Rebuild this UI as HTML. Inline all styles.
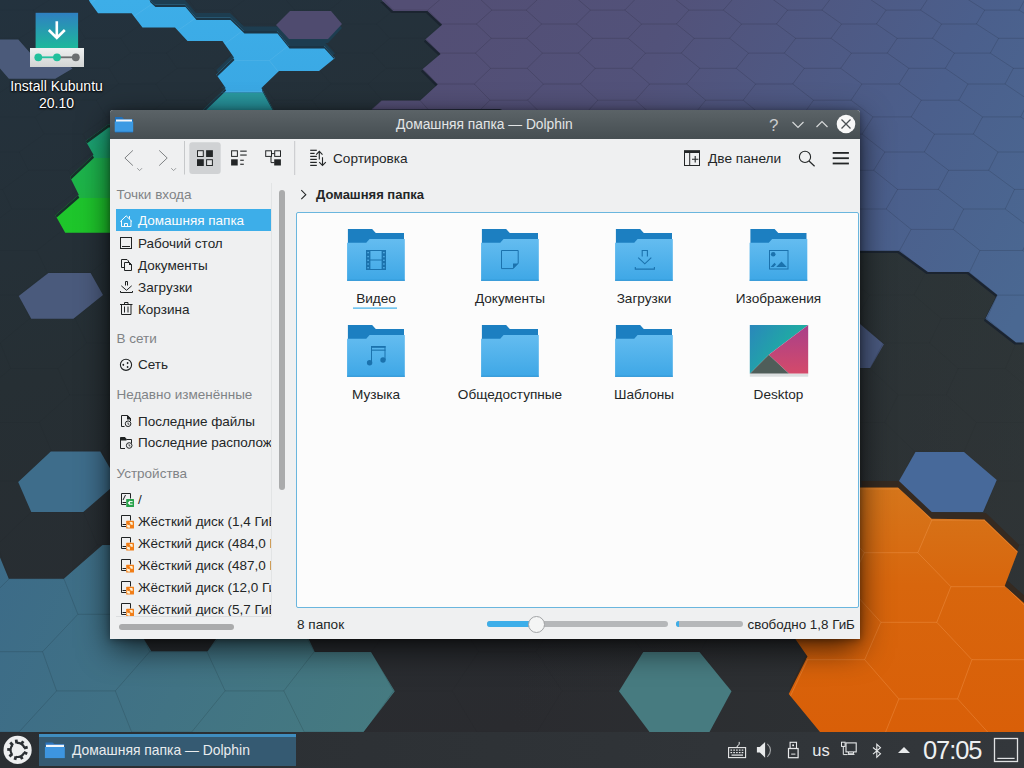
<!DOCTYPE html>
<html><head><meta charset="utf-8">
<style>
html,body{margin:0;padding:0;width:1024px;height:768px;overflow:hidden;font-family:"Liberation Sans",sans-serif;background:#263039;}
.abs{position:absolute}
#bg{position:absolute;left:0;top:0}
.t{position:absolute;white-space:nowrap;line-height:1}
</style></head><body>
<svg id="bg" width="1024" height="768" viewBox="0 0 1024 768">
<defs>
<linearGradient id="gBase" x1="0" y1="0" x2="0.35" y2="1">
<stop offset="0" stop-color="#23323e"/><stop offset="0.45" stop-color="#262f34"/><stop offset="1" stop-color="#2a2b2f"/>
</linearGradient>
<linearGradient id="gPurple" gradientUnits="userSpaceOnUse" x1="420" y1="0" x2="1024" y2="300">
<stop offset="0" stop-color="#534e74"/><stop offset="0.35" stop-color="#52527a"/><stop offset="0.75" stop-color="#4b5f8c"/><stop offset="1" stop-color="#4a6892"/>
</linearGradient>
<linearGradient id="gGreen" gradientUnits="userSpaceOnUse" x1="0" y1="124" x2="0" y2="233">
<stop offset="0" stop-color="#1d9e7c"/><stop offset="0.31" stop-color="#1aa66a"/><stop offset="0.31" stop-color="#1db350"/><stop offset="0.675" stop-color="#1db545"/><stop offset="0.675" stop-color="#1ec52d"/><stop offset="1" stop-color="#1ec62a"/>
</linearGradient>
<linearGradient id="gBlue" gradientUnits="userSpaceOnUse" x1="0" y1="0" x2="0" y2="93">
<stop offset="0" stop-color="#3daee8"/><stop offset="1" stop-color="#3aa8e4"/>
</linearGradient>
<linearGradient id="gTealTop" gradientUnits="userSpaceOnUse" x1="0" y1="92" x2="0" y2="111">
<stop offset="0" stop-color="#2a9aa0"/><stop offset="1" stop-color="#23868f"/>
</linearGradient>
<linearGradient id="gTeal" gradientUnits="userSpaceOnUse" x1="0" y1="545" x2="400" y2="732">
<stop offset="0" stop-color="#3c6b88"/><stop offset="1" stop-color="#467b80"/>
</linearGradient>
<linearGradient id="gOrange" gradientUnits="userSpaceOnUse" x1="0" y1="487" x2="0" y2="732">
<stop offset="0" stop-color="#d6761b"/><stop offset="0.4" stop-color="#d8660d"/><stop offset="1" stop-color="#d95f08"/>
</linearGradient>

<clipPath id="c_blue"><polygon points="90,-10 146,-10 150,0 155,4.5 185,4.5 196,17.5 230,17.5 244,31 277,31 289,46 324,46 335,58 319,71 279,71 261.4,88 264,92.7 220.9,92.7 225.7,88 216.3,74.5 234,57.5 222.5,41 187.5,41 175,27.5 142.5,27.5 131.6,13.3 98,13.3 90,2.3 84,-10"/></clipPath>
<clipPath id="c_tealtop"><polygon points="220.9,92.7 264,92.7 274,111 202,111"/></clipPath>
<clipPath id="c_purplehex"><polygon points="276,25 290,11 331,11 342,24 328,39 289,39"/></clipPath>
<clipPath id="c_purple"><polygon points="381.6,0 1024,0 1024,342.5 1016,342.5 985.4,318.8 997.3,295 968.5,272 927.9,272 899,251 860,251 700,200 500,109 371.4,109.4 381.6,100.6 420.2,100.6 437.7,84.6 422.4,69.3 440.6,54 425.3,39.4 442.1,24.8 427.5,10.9 393.2,10.9"/></clipPath>
<clipPath id="c_slatetop"><polygon points="0,39.4 18.3,39.4 32,55 58,58 72.6,68.4 55.3,78.75 8.9,78.75 0,68.4"/></clipPath>
<clipPath id="c_green"><polygon points="108.1,124.4 85.7,141 93.5,154.7 70,177.1 78.8,194.7 55.4,215.2 65.2,232.8 120,232.8 120,124"/></clipPath>
<clipPath id="c_slateleft"><polygon points="18.75,296 48.4,273 90.6,273 103,295 73.4,318.75 31.25,318.75"/></clipPath>
<clipPath id="c_tealleft"><polygon points="18.2,482 50.8,451.6 100.3,451.6 118,482 83.3,512 31.25,512"/></clipPath>
<clipPath id="c_tealcluster"><polygon points="0,557.5 8.75,578.75 63.75,578.75 102.5,545 300,545 300,638.75 143.75,638.75 151.25,651.25 207.5,651.25 216.25,638.75 308.5,638.75 314.75,652 371,652 394.75,691.25 363.5,732 0,732"/></clipPath>
<clipPath id="c_tealbottom"><polygon points="643.25,652 699.5,652 731.5,691.25 709.5,732 649.5,732 619,691.25"/></clipPath>
<clipPath id="c_slateright"><polygon points="860,323.9 883.85,344.2 870.3,367.9 860,367.9"/></clipPath>
<clipPath id="c_orange"><polygon points="860,487.5 898,487.5 931.75,518.75 984.4,519.4 1017.8,551.6 1004.7,586 1024,603 1024,732 820,732 788.75,694 807.5,656.6 795,638.6 860,638.6"/></clipPath>
<clipPath id="c_bluehex"><polygon points="915.5,452 964,452 996.75,480 983,512 931.75,512 899,481"/></clipPath>
</defs>
<rect width="1024" height="768" fill="url(#gBase)"/>
<linearGradient id="gTint" x1="0.5" y1="0" x2="1" y2="0"><stop offset="0" stop-color="#36403f" stop-opacity="0"/><stop offset="1" stop-color="#36403f" stop-opacity="0.4"/></linearGradient>
<rect width="1024" height="768" fill="url(#gTint)"/>
<path d="M13.4,-16.6L-8.4,-3.5M-8.4,-3.5L-0.9,10.1M-0.9,10.1L-23.5,24.0M46.8,-16.6L54.9,-3.5M54.9,-3.5L33.4,10.1M-0.9,10.1L33.4,10.1M33.4,10.1L41.7,24.0M41.7,24.0L19.4,38.3M-16.0,38.3L19.4,38.3M19.4,38.3L27.6,53.1M27.6,53.1L4.4,68.3M-32.0,68.3L4.4,68.3M4.4,68.3L12.7,84.0M12.7,84.0L-11.5,100.2M-11.5,100.2L-3.2,116.9M-3.2,116.9L-28.4,134.1M109.2,-16.6L88.8,-3.5M54.9,-3.5L88.8,-3.5M88.8,-3.5L97.7,10.1M97.7,10.1L76.5,24.0M41.7,24.0L76.5,24.0M76.5,24.0L85.5,38.3M85.5,38.3L63.5,53.1M27.6,53.1L63.5,53.1M63.5,53.1L72.5,68.3M72.5,68.3L49.7,84.0M12.7,84.0L49.7,84.0M49.7,84.0L58.8,100.2M58.8,100.2L35.0,116.9M-3.2,116.9L35.0,116.9M35.0,116.9L44.1,134.1M44.1,134.1L19.3,152.0M-20.1,152.0L19.3,152.0M19.3,152.0L28.5,170.3M28.5,170.3L2.6,189.4M-38.2,189.4L2.6,189.4M2.6,189.4L11.8,209.0M11.8,209.0L-15.3,229.4M142.6,-16.6L152.1,-3.5M152.1,-3.5L132.0,10.1M97.7,10.1L132.0,10.1M132.0,10.1L141.7,24.0M141.7,24.0L120.8,38.3M85.5,38.3L120.8,38.3M120.8,38.3L130.6,53.1M130.6,53.1L108.9,68.3M72.5,68.3L108.9,68.3M108.9,68.3L118.8,84.0M118.8,84.0L96.3,100.2M58.8,100.2L96.3,100.2M96.3,100.2L106.3,116.9M106.3,116.9L82.9,134.1M44.1,134.1L82.9,134.1M82.9,134.1L93.0,152.0M93.0,152.0L68.6,170.3M28.5,170.3L68.6,170.3M68.6,170.3L78.8,189.4M78.8,189.4L53.3,209.0M11.8,209.0L53.3,209.0M53.3,209.0L63.6,229.4M63.6,229.4L36.9,250.5M-6.1,250.5L36.9,250.5M36.9,250.5L47.2,272.4M47.2,272.4L19.2,295.1M-25.3,295.1L19.2,295.1M19.2,295.1L29.7,318.6M29.7,318.6L0.2,343.0M-46.0,343.0L0.2,343.0M0.2,343.0L10.7,368.5M10.7,368.5L-20.3,394.9M205.0,-16.6L185.9,-3.5M152.1,-3.5L185.9,-3.5M185.9,-3.5L196.2,10.1M196.2,10.1L176.5,24.0M141.7,24.0L176.5,24.0M176.5,24.0L186.9,38.3M186.9,38.3L166.5,53.1M130.6,53.1L166.5,53.1M166.5,53.1L177.1,68.3M177.1,68.3L155.8,84.0M118.8,84.0L155.8,84.0M155.8,84.0L166.6,100.2M166.6,100.2L144.5,116.9M106.3,116.9L144.5,116.9M144.5,116.9L155.4,134.1M155.4,134.1L132.4,152.0M93.0,152.0L132.4,152.0M132.4,152.0L143.5,170.3M143.5,170.3L119.5,189.4M78.8,189.4L119.5,189.4M119.5,189.4L130.8,209.0M130.8,209.0L105.7,229.4M63.6,229.4L105.7,229.4M105.7,229.4L117.2,250.5M117.2,250.5L91.0,272.4M47.2,272.4L91.0,272.4M91.0,272.4L102.5,295.1M102.5,295.1L75.0,318.6M29.7,318.6L75.0,318.6M75.0,318.6L86.8,343.0M86.8,343.0L57.9,368.5M10.7,368.5L57.9,368.5M57.9,368.5L69.7,394.9M69.7,394.9L39.3,422.4M-9.8,422.4L39.3,422.4M39.3,422.4L51.3,451.0M51.3,451.0L19.1,480.9M-32.0,480.9L19.1,480.9M19.1,480.9L31.2,512.1M31.2,512.1L-2.8,544.7M-56.2,544.7L-2.8,544.7M-2.8,544.7L9.3,578.7M9.3,578.7L-26.8,614.3M238.4,-16.6L249.3,-3.5M249.3,-3.5L230.6,10.1M196.2,10.1L230.6,10.1M230.6,10.1L241.6,24.0M241.6,24.0L222.3,38.3M186.9,38.3L222.3,38.3M222.3,38.3L233.6,53.1M233.6,53.1L213.5,68.3M177.1,68.3L213.5,68.3M213.5,68.3L225.0,84.0M225.0,84.0L204.1,100.2M166.6,100.2L204.1,100.2M204.1,100.2L215.9,116.9M215.9,116.9L194.2,134.1M155.4,134.1L194.2,134.1M194.2,134.1L206.2,152.0M206.2,152.0L183.6,170.3M143.5,170.3L183.6,170.3M183.6,170.3L195.8,189.4M195.8,189.4L172.3,209.0M130.8,209.0L172.3,209.0M172.3,209.0L184.7,229.4M184.7,229.4L160.1,250.5M117.2,250.5L160.1,250.5M160.1,250.5L172.7,272.4M172.7,272.4L147.1,295.1M102.5,295.1L147.1,295.1M147.1,295.1L159.9,318.6M159.9,318.6L133.0,343.0M86.8,343.0L133.0,343.0M133.0,343.0L146.1,368.5M146.1,368.5L117.8,394.9M69.7,394.9L117.8,394.9M117.8,394.9L131.1,422.4M131.1,422.4L101.3,451.0M51.3,451.0L101.3,451.0M101.3,451.0L114.9,480.9M114.9,480.9L83.5,512.1M31.2,512.1L83.5,512.1M83.5,512.1L97.2,544.7M97.2,544.7L63.9,578.7M9.3,578.7L63.9,578.7M63.9,578.7L77.9,614.3M77.9,614.3L42.6,651.7M-14.7,651.7L42.6,651.7M42.6,651.7L56.6,690.9M56.6,690.9L19.0,732.0M-41.1,732.0L19.0,732.0M19.0,732.0L33.2,775.2M300.8,-16.6L283.1,-3.5M249.3,-3.5L283.1,-3.5M283.1,-3.5L294.8,10.1M294.8,10.1L276.5,24.0M241.6,24.0L276.5,24.0M276.5,24.0L288.4,38.3M288.4,38.3L269.4,53.1M233.6,53.1L269.4,53.1M269.4,53.1L281.6,68.3M281.6,68.3L262.0,84.0M225.0,84.0L262.0,84.0M262.0,84.0L274.4,100.2M274.4,100.2L254.0,116.9M215.9,116.9L254.0,116.9M254.0,116.9L266.7,134.1M266.7,134.1L245.5,152.0M206.2,152.0L245.5,152.0M245.5,152.0L258.6,170.3M258.6,170.3L236.5,189.4M195.8,189.4L236.5,189.4M236.5,189.4L249.8,209.0M249.8,209.0L226.8,229.4M184.7,229.4L226.8,229.4M226.8,229.4L240.4,250.5M240.4,250.5L216.4,272.4M172.7,272.4L216.4,272.4M216.4,272.4L230.4,295.1M230.4,295.1L205.3,318.6M159.9,318.6L205.3,318.6M205.3,318.6L219.5,343.0M219.5,343.0L193.2,368.5M146.1,368.5L193.2,368.5M193.2,368.5L207.8,394.9M207.8,394.9L180.2,422.4M131.1,422.4L180.2,422.4M180.2,422.4L195.1,451.0M195.1,451.0L166.0,480.9M114.9,480.9L166.0,480.9M166.0,480.9L181.3,512.1M181.3,512.1L150.6,544.7M97.2,544.7L150.6,544.7M150.6,544.7L166.2,578.7M166.2,578.7L133.8,614.3M77.9,614.3L133.8,614.3M133.8,614.3L149.7,651.7M149.7,651.7L115.3,690.9M56.6,690.9L115.3,690.9M115.3,690.9L131.6,732.0M131.6,732.0L94.9,775.2M334.2,-16.6L346.4,-3.5M346.4,-3.5L329.1,10.1M294.8,10.1L329.1,10.1M329.1,10.1L341.6,24.0M341.6,24.0L323.7,38.3M288.4,38.3L323.7,38.3M323.7,38.3L336.5,53.1M336.5,53.1L318.0,68.3M281.6,68.3L318.0,68.3M318.0,68.3L331.1,84.0M331.1,84.0L312.0,100.2M274.4,100.2L312.0,100.2M312.0,100.2L325.4,116.9M325.4,116.9L305.5,134.1M266.7,134.1L305.5,134.1M305.5,134.1L319.3,152.0M319.3,152.0L298.6,170.3M258.6,170.3L298.6,170.3M298.6,170.3L312.7,189.4M312.7,189.4L291.2,209.0M249.8,209.0L291.2,209.0M291.2,209.0L305.7,229.4M305.7,229.4L283.3,250.5M240.4,250.5L283.3,250.5M283.3,250.5L298.2,272.4M298.2,272.4L274.9,295.1M230.4,295.1L274.9,295.1M274.9,295.1L290.1,318.6M290.1,318.6L265.7,343.0M219.5,343.0L265.7,343.0M265.7,343.0L281.4,368.5M281.4,368.5L255.9,394.9M207.8,394.9L255.9,394.9M255.9,394.9L272.0,422.4M272.0,422.4L245.2,451.0M195.1,451.0L245.2,451.0M245.2,451.0L261.8,480.9M261.8,480.9L233.6,512.1M181.3,512.1L233.6,512.1M233.6,512.1L250.6,544.7M250.6,544.7L220.9,578.7M166.2,578.7L220.9,578.7M220.9,578.7L238.5,614.3M238.5,614.3L207.0,651.7M149.7,651.7L207.0,651.7M207.0,651.7L225.1,690.9M225.1,690.9L191.7,732.0M131.6,732.0L191.7,732.0M191.7,732.0L210.3,775.2M396.6,-16.6L380.3,-3.5M346.4,-3.5L380.3,-3.5M380.3,-3.5L393.3,10.1M393.3,10.1L376.5,24.0M341.6,24.0L376.5,24.0M376.5,24.0L389.9,38.3M389.9,38.3L372.4,53.1M336.5,53.1L372.4,53.1M372.4,53.1L386.2,68.3M386.2,68.3L368.1,84.0M331.1,84.0L368.1,84.0M368.1,84.0L382.2,100.2M382.2,100.2L363.5,116.9M325.4,116.9L363.5,116.9M363.5,116.9L378.0,134.1M378.0,134.1L358.7,152.0M319.3,152.0L358.7,152.0M358.7,152.0L373.6,170.3M373.6,170.3L353.5,189.4M312.7,189.4L353.5,189.4M353.5,189.4L368.8,209.0M368.8,209.0L347.9,229.4M305.7,229.4L347.9,229.4M347.9,229.4L363.7,250.5M363.7,250.5L341.9,272.4M298.2,272.4L341.9,272.4M341.9,272.4L358.2,295.1M358.2,295.1L335.5,318.6M290.1,318.6L335.5,318.6M335.5,318.6L352.2,343.0M352.2,343.0L328.6,368.5M281.4,368.5L328.6,368.5M328.6,368.5L345.9,394.9M345.9,394.9L321.1,422.4M272.0,422.4L321.1,422.4M321.1,422.4L338.9,451.0M338.9,451.0L312.9,480.9M261.8,480.9L312.9,480.9M312.9,480.9L331.4,512.1M331.4,512.1L304.1,544.7M250.6,544.7L304.1,544.7M304.1,544.7L323.2,578.7M323.2,578.7L294.4,614.3M238.5,614.3L294.4,614.3M294.4,614.3L314.2,651.7M314.2,651.7L283.8,690.9M225.1,690.9L283.8,690.9M283.8,690.9L304.2,732.0M304.2,732.0L272.0,775.2M430.0,-16.6L443.6,-3.5M443.6,-3.5L427.7,10.1M393.3,10.1L427.7,10.1M427.7,10.1L441.6,24.0M441.6,24.0L425.2,38.3M389.9,38.3L425.2,38.3M425.2,38.3L439.5,53.1M439.5,53.1L422.6,68.3M386.2,68.3L422.6,68.3M422.6,68.3L437.3,84.0M437.3,84.0L419.8,100.2M382.2,100.2L419.8,100.2M419.8,100.2L434.9,116.9M434.9,116.9L416.8,134.1M378.0,134.1L416.8,134.1M416.8,134.1L432.4,152.0M432.4,152.0L413.6,170.3M373.6,170.3L413.6,170.3M413.6,170.3L429.7,189.4M429.7,189.4L410.2,209.0M368.8,209.0L410.2,209.0M410.2,209.0L426.8,229.4M426.8,229.4L406.6,250.5M363.7,250.5L406.6,250.5M406.6,250.5L423.7,272.4M423.7,272.4L402.7,295.1M358.2,295.1L402.7,295.1M402.7,295.1L420.4,318.6M420.4,318.6L398.5,343.0M352.2,343.0L398.5,343.0M398.5,343.0L416.8,368.5M416.8,368.5L393.9,394.9M345.9,394.9L393.9,394.9M393.9,394.9L412.9,422.4M412.9,422.4L389.0,451.0M338.9,451.0L389.0,451.0M389.0,451.0L408.7,480.9M408.7,480.9L383.7,512.1M331.4,512.1L383.7,512.1M383.7,512.1L404.1,544.7M404.1,544.7L377.8,578.7M323.2,578.7L377.8,578.7M377.8,578.7L399.1,614.3M399.1,614.3L371.4,651.7M314.2,651.7L371.4,651.7M371.4,651.7L393.5,690.9M393.5,690.9L364.4,732.0M304.2,732.0L364.4,732.0M364.4,732.0L387.5,775.2M492.5,-16.6L477.4,-3.5M443.6,-3.5L477.4,-3.5M477.4,-3.5L491.9,10.1M491.9,10.1L476.4,24.0M441.6,24.0L476.4,24.0M476.4,24.0L491.3,38.3M491.3,38.3L475.4,53.1M439.5,53.1L475.4,53.1M475.4,53.1L490.7,68.3M490.7,68.3L474.3,84.0M437.3,84.0L474.3,84.0M474.3,84.0L490.0,100.2M490.0,100.2L473.1,116.9M434.9,116.9L473.1,116.9M473.1,116.9L489.3,134.1M489.3,134.1L471.8,152.0M432.4,152.0L471.8,152.0M471.8,152.0L488.6,170.3M488.6,170.3L470.4,189.4M429.7,189.4L470.4,189.4M470.4,189.4L487.8,209.0M487.8,209.0L469.0,229.4M426.8,229.4L469.0,229.4M469.0,229.4L486.9,250.5M486.9,250.5L467.4,272.4M423.7,272.4L467.4,272.4M467.4,272.4L486.0,295.1M486.0,295.1L465.7,318.6M420.4,318.6L465.7,318.6M465.7,318.6L485.0,343.0M485.0,343.0L463.9,368.5M416.8,368.5L463.9,368.5M463.9,368.5L483.9,394.9M483.9,394.9L462.0,422.4M412.9,422.4L462.0,422.4M462.0,422.4L482.8,451.0M482.8,451.0L459.8,480.9M408.7,480.9L459.8,480.9M459.8,480.9L481.5,512.1M481.5,512.1L457.5,544.7M404.1,544.7L457.5,544.7M457.5,544.7L480.1,578.7M480.1,578.7L455.0,614.3M399.1,614.3L455.0,614.3M455.0,614.3L478.6,651.7M478.6,651.7L452.2,690.9M393.5,690.9L452.2,690.9M452.2,690.9L476.9,732.0M476.9,732.0L449.1,775.2M525.8,-16.6L540.8,-3.5M540.8,-3.5L526.2,10.1M491.9,10.1L526.2,10.1M526.2,10.1L541.6,24.0M541.6,24.0L526.7,38.3M491.3,38.3L526.7,38.3M526.7,38.3L542.5,53.1M542.5,53.1L527.1,68.3M490.7,68.3L527.1,68.3M527.1,68.3L543.4,84.0M543.4,84.0L527.6,100.2M490.0,100.2L527.6,100.2M527.6,100.2L544.5,116.9M544.5,116.9L528.1,134.1M489.3,134.1L528.1,134.1M528.1,134.1L545.5,152.0M545.5,152.0L528.6,170.3M488.6,170.3L528.6,170.3M528.6,170.3L546.7,189.4M546.7,189.4L529.2,209.0M487.8,209.0L529.2,209.0M529.2,209.0L547.9,229.4M547.9,229.4L529.8,250.5M486.9,250.5L529.8,250.5M529.8,250.5L549.2,272.4M549.2,272.4L530.5,295.1M486.0,295.1L530.5,295.1M530.5,295.1L550.6,318.6M550.6,318.6L531.2,343.0M485.0,343.0L531.2,343.0M531.2,343.0L552.1,368.5M552.1,368.5L532.0,394.9M483.9,394.9L532.0,394.9M532.0,394.9L553.8,422.4M553.8,422.4L532.8,451.0M482.8,451.0L532.8,451.0M532.8,451.0L555.6,480.9M555.6,480.9L533.8,512.1M481.5,512.1L533.8,512.1M533.8,512.1L557.5,544.7M557.5,544.7L534.8,578.7M480.1,578.7L534.8,578.7M534.8,578.7L559.7,614.3M559.7,614.3L535.9,651.7M478.6,651.7L535.9,651.7M535.9,651.7L562.0,690.9M562.0,690.9L537.1,732.0M476.9,732.0L537.1,732.0M537.1,732.0L564.6,775.2M588.3,-16.6L574.6,-3.5M540.8,-3.5L574.6,-3.5M574.6,-3.5L590.5,10.1M590.5,10.1L576.4,24.0M541.6,24.0L576.4,24.0M576.4,24.0L592.8,38.3M592.8,38.3L578.4,53.1M542.5,53.1L578.4,53.1M578.4,53.1L595.2,68.3M595.2,68.3L580.4,84.0M543.4,84.0L580.4,84.0M580.4,84.0L597.8,100.2M597.8,100.2L582.6,116.9M544.5,116.9L582.6,116.9M582.6,116.9L600.6,134.1M600.6,134.1L584.9,152.0M545.5,152.0L584.9,152.0M584.9,152.0L603.6,170.3M603.6,170.3L587.4,189.4M546.7,189.4L587.4,189.4M587.4,189.4L606.8,209.0M606.8,209.0L590.1,229.4M547.9,229.4L590.1,229.4M590.1,229.4L610.2,250.5M610.2,250.5L592.9,272.4M549.2,272.4L592.9,272.4M592.9,272.4L613.8,295.1M613.8,295.1L596.0,318.6M550.6,318.6L596.0,318.6M596.0,318.6L617.7,343.0M617.7,343.0L599.3,368.5M552.1,368.5L599.3,368.5M599.3,368.5L622.0,394.9M622.0,394.9L602.9,422.4M553.8,422.4L602.9,422.4M602.9,422.4L626.6,451.0M626.6,451.0L606.7,480.9M555.6,480.9L606.7,480.9M606.7,480.9L631.6,512.1M631.6,512.1L611.0,544.7M557.5,544.7L611.0,544.7M611.0,544.7L637.0,578.7M637.0,578.7L615.6,614.3M559.7,614.3L615.6,614.3M615.6,614.3L643.0,651.7M643.0,651.7L620.7,690.9M562.0,690.9L620.7,690.9M620.7,690.9L649.6,732.0M649.6,732.0L626.3,775.2M621.6,-16.6L637.9,-3.5M637.9,-3.5L624.8,10.1M590.5,10.1L624.8,10.1M624.8,10.1L641.6,24.0M641.6,24.0L628.1,38.3M592.8,38.3L628.1,38.3M628.1,38.3L645.5,53.1M645.5,53.1L631.6,68.3M595.2,68.3L631.6,68.3M631.6,68.3L649.6,84.0M649.6,84.0L635.4,100.2M597.8,100.2L635.4,100.2M635.4,100.2L654.0,116.9M654.0,116.9L639.4,134.1M600.6,134.1L639.4,134.1M639.4,134.1L658.6,152.0M658.6,152.0L643.6,170.3M603.6,170.3L643.6,170.3M643.6,170.3L663.6,189.4M663.6,189.4L648.2,209.0M606.8,209.0L648.2,209.0M648.2,209.0L669.0,229.4M669.0,229.4L653.1,250.5M610.2,250.5L653.1,250.5M653.1,250.5L674.7,272.4M674.7,272.4L658.3,295.1M613.8,295.1L658.3,295.1M658.3,295.1L680.9,318.6M680.9,318.6L664.0,343.0M617.7,343.0L664.0,343.0M664.0,343.0L687.5,368.5M687.5,368.5L670.1,394.9M622.0,394.9L670.1,394.9M670.1,394.9L694.7,422.4M694.7,422.4L676.7,451.0M626.6,451.0L676.7,451.0M676.7,451.0L702.5,480.9M702.5,480.9L683.9,512.1M631.6,512.1L683.9,512.1M683.9,512.1L711.0,544.7M711.0,544.7L691.7,578.7M637.0,578.7L691.7,578.7M691.7,578.7L720.3,614.3M720.3,614.3L700.3,651.7M643.0,651.7L700.3,651.7M700.3,651.7L730.5,690.9M730.5,690.9L709.7,732.0M649.6,732.0L709.7,732.0M709.7,732.0L741.7,775.2M684.1,-16.6L671.8,-3.5M637.9,-3.5L671.8,-3.5M671.8,-3.5L689.0,10.1M689.0,10.1L676.4,24.0M641.6,24.0L676.4,24.0M676.4,24.0L694.2,38.3M694.2,38.3L681.3,53.1M645.5,53.1L681.3,53.1M681.3,53.1L699.8,68.3M699.8,68.3L686.6,84.0M649.6,84.0L686.6,84.0M686.6,84.0L705.7,100.2M705.7,100.2L692.1,116.9M654.0,116.9L692.1,116.9M692.1,116.9L711.9,134.1M711.9,134.1L698.0,152.0M658.6,152.0L698.0,152.0M698.0,152.0L718.6,170.3M718.6,170.3L704.4,189.4M663.6,189.4L704.4,189.4M704.4,189.4L725.7,209.0M725.7,209.0L711.1,229.4M669.0,229.4L711.1,229.4M711.1,229.4L733.4,250.5M733.4,250.5L718.4,272.4M674.7,272.4L718.4,272.4M718.4,272.4L741.6,295.1M741.6,295.1L726.2,318.6M680.9,318.6L726.2,318.6M726.2,318.6L750.5,343.0M750.5,343.0L734.6,368.5M687.5,368.5L734.6,368.5M734.6,368.5L760.0,394.9M760.0,394.9L743.7,422.4M694.7,422.4L743.7,422.4M743.7,422.4L770.4,451.0M770.4,451.0L753.6,480.9M702.5,480.9L753.6,480.9M753.6,480.9L781.7,512.1M781.7,512.1L764.4,544.7M711.0,544.7L764.4,544.7M764.4,544.7L794.0,578.7M794.0,578.7L776.2,614.3M720.3,614.3L776.2,614.3M776.2,614.3L807.5,651.7M807.5,651.7L789.1,690.9M730.5,690.9L789.1,690.9M789.1,690.9L822.3,732.0M822.3,732.0L803.4,775.2M717.5,-16.6L735.1,-3.5M735.1,-3.5L723.3,10.1M689.0,10.1L723.3,10.1M723.3,10.1L741.6,24.0M741.6,24.0L729.6,38.3M694.2,38.3L729.6,38.3M729.6,38.3L748.5,53.1M748.5,53.1L736.2,68.3M699.8,68.3L736.2,68.3M736.2,68.3L755.7,84.0M755.7,84.0L743.2,100.2M705.7,100.2L743.2,100.2M743.2,100.2L763.5,116.9M763.5,116.9L750.7,134.1M711.9,134.1L750.7,134.1M750.7,134.1L771.8,152.0M771.8,152.0L758.7,170.3M718.6,170.3L758.7,170.3M758.7,170.3L780.6,189.4M780.6,189.4L767.2,209.0M725.7,209.0L767.2,209.0M767.2,209.0L790.0,229.4M790.0,229.4L776.3,250.5M733.4,250.5L776.3,250.5M776.3,250.5L800.2,272.4M800.2,272.4L786.1,295.1M741.6,295.1L786.1,295.1M786.1,295.1L811.1,318.6M811.1,318.6L796.7,343.0M750.5,343.0L796.7,343.0M796.7,343.0L822.8,368.5M822.8,368.5L808.1,394.9M760.0,394.9L808.1,394.9M808.1,394.9L835.6,422.4M835.6,422.4L820.5,451.0M770.4,451.0L820.5,451.0M820.5,451.0L849.4,480.9M849.4,480.9L834.0,512.1M781.7,512.1L834.0,512.1M834.0,512.1L864.4,544.7M864.4,544.7L848.6,578.7M794.0,578.7L848.6,578.7M848.6,578.7L880.9,614.3M880.9,614.3L864.7,651.7M807.5,651.7L864.7,651.7M864.7,651.7L898.9,690.9M898.9,690.9L882.4,732.0M822.3,732.0L882.4,732.0M882.4,732.0L918.8,775.2M779.9,-16.6L768.9,-3.5M735.1,-3.5L768.9,-3.5M768.9,-3.5L787.6,10.1M787.6,10.1L776.4,24.0M741.6,24.0L776.4,24.0M776.4,24.0L795.7,38.3M795.7,38.3L784.3,53.1M748.5,53.1L784.3,53.1M784.3,53.1L804.3,68.3M804.3,68.3L792.7,84.0M755.7,84.0L792.7,84.0M792.7,84.0L813.5,100.2M813.5,100.2L801.6,116.9M763.5,116.9L801.6,116.9M801.6,116.9L823.2,134.1M823.2,134.1L811.2,152.0M771.8,152.0L811.2,152.0M811.2,152.0L833.6,170.3M833.6,170.3L821.3,189.4M780.6,189.4L821.3,189.4M821.3,189.4L844.7,209.0M844.7,209.0L832.2,229.4M790.0,229.4L832.2,229.4M832.2,229.4L856.6,250.5M856.6,250.5L843.9,272.4M800.2,272.4L843.9,272.4M843.9,272.4L869.4,295.1M869.4,295.1L856.4,318.6M811.1,318.6L856.4,318.6M856.4,318.6L883.2,343.0M883.2,343.0L870.0,368.5M822.8,368.5L870.0,368.5M870.0,368.5L898.1,394.9M898.1,394.9L884.6,422.4M835.6,422.4L884.6,422.4M884.6,422.4L914.2,451.0M914.2,451.0L900.5,480.9M849.4,480.9L900.5,480.9M900.5,480.9L931.8,512.1M931.8,512.1L917.9,544.7M864.4,544.7L917.9,544.7M917.9,544.7L950.9,578.7M950.9,578.7L936.8,614.3M880.9,614.3L936.8,614.3M936.8,614.3L971.9,651.7M971.9,651.7L957.6,690.9M898.9,690.9L957.6,690.9M957.6,690.9L994.9,732.0M994.9,732.0L980.5,775.2M813.3,-16.6L832.3,-3.5M832.3,-3.5L821.9,10.1M787.6,10.1L821.9,10.1M821.9,10.1L841.6,24.0M841.6,24.0L831.0,38.3M795.7,38.3L831.0,38.3M831.0,38.3L851.4,53.1M851.4,53.1L840.7,68.3M804.3,68.3L840.7,68.3M840.7,68.3L861.9,84.0M861.9,84.0L851.0,100.2M813.5,100.2L851.0,100.2M851.0,100.2L873.0,116.9M873.0,116.9L862.0,134.1M823.2,134.1L862.0,134.1M862.0,134.1L884.9,152.0M884.9,152.0L873.7,170.3M833.6,170.3L873.7,170.3M873.7,170.3L897.6,189.4M897.6,189.4L886.2,209.0M844.7,209.0L886.2,209.0M886.2,209.0L911.1,229.4M911.1,229.4L899.6,250.5M856.6,250.5L899.6,250.5M899.6,250.5L925.7,272.4M925.7,272.4L914.0,295.1M869.4,295.1L914.0,295.1M914.0,295.1L941.3,318.6M941.3,318.6L929.5,343.0M883.2,343.0L929.5,343.0M929.5,343.0L958.2,368.5M958.2,368.5L946.2,394.9M898.1,394.9L946.2,394.9M946.2,394.9L976.5,422.4M976.5,422.4L964.3,451.0M914.2,451.0L964.3,451.0M964.3,451.0L996.3,480.9M996.3,480.9L984.1,512.1M931.8,512.1L984.1,512.1M984.1,512.1L1017.9,544.7M1017.9,544.7L1005.6,578.7M950.9,578.7L1005.6,578.7M1005.6,578.7L1041.5,614.3M1041.5,614.3L1029.1,651.7M971.9,651.7L1029.1,651.7M1029.1,651.7L1067.4,690.9M994.9,732.0L1055.1,732.0M875.7,-16.6L866.1,-3.5M832.3,-3.5L866.1,-3.5M866.1,-3.5L886.1,10.1M886.1,10.1L876.4,24.0M841.6,24.0L876.4,24.0M876.4,24.0L897.2,38.3M897.2,38.3L887.3,53.1M851.4,53.1L887.3,53.1M887.3,53.1L908.9,68.3M908.9,68.3L898.9,84.0M861.9,84.0L898.9,84.0M898.9,84.0L921.3,100.2M921.3,100.2L911.2,116.9M873.0,116.9L911.2,116.9M911.2,116.9L934.5,134.1M934.5,134.1L924.3,152.0M884.9,152.0L924.3,152.0M924.3,152.0L948.6,170.3M948.6,170.3L938.3,189.4M897.6,189.4L938.3,189.4M938.3,189.4L963.7,209.0M963.7,209.0L953.3,229.4M911.1,229.4L953.3,229.4M953.3,229.4L979.9,250.5M979.9,250.5L969.4,272.4M925.7,272.4L969.4,272.4M969.4,272.4L997.3,295.1M997.3,295.1L986.7,318.6M941.3,318.6L986.7,318.6M986.7,318.6L1016.0,343.0M1016.0,343.0L1005.3,368.5M958.2,368.5L1005.3,368.5M1005.3,368.5L1036.2,394.9M1036.2,394.9L1025.5,422.4M976.5,422.4L1025.5,422.4M1025.5,422.4L1058.1,451.0M996.3,480.9L1047.4,480.9M1017.9,544.7L1071.3,544.7M909.1,-16.6L929.4,-3.5M929.4,-3.5L920.5,10.1M886.1,10.1L920.5,10.1M920.5,10.1L941.6,24.0M941.6,24.0L932.5,38.3M897.2,38.3L932.5,38.3M932.5,38.3L954.4,53.1M954.4,53.1L945.3,68.3M908.9,68.3L945.3,68.3M945.3,68.3L968.0,84.0M968.0,84.0L958.8,100.2M921.3,100.2L958.8,100.2M958.8,100.2L982.6,116.9M982.6,116.9L973.3,134.1M934.5,134.1L973.3,134.1M973.3,134.1L998.0,152.0M998.0,152.0L988.7,170.3M948.6,170.3L988.7,170.3M988.7,170.3L1014.5,189.4M1014.5,189.4L1005.2,209.0M963.7,209.0L1005.2,209.0M1005.2,209.0L1032.2,229.4M1032.2,229.4L1022.8,250.5M979.9,250.5L1022.8,250.5M1022.8,250.5L1051.2,272.4M997.3,295.1L1041.8,295.1M1016.0,343.0L1062.2,343.0M971.5,-16.6L963.3,-3.5M929.4,-3.5L963.3,-3.5M963.3,-3.5L984.7,10.1M984.7,10.1L976.4,24.0M941.6,24.0L976.4,24.0M976.4,24.0L998.6,38.3M998.6,38.3L990.3,53.1M954.4,53.1L990.3,53.1M990.3,53.1L1013.4,68.3M1013.4,68.3L1005.0,84.0M968.0,84.0L1005.0,84.0M1005.0,84.0L1029.1,100.2M1029.1,100.2L1020.7,116.9M982.6,116.9L1020.7,116.9M1020.7,116.9L1045.8,134.1M998.0,152.0L1037.4,152.0M1014.5,189.4L1055.3,189.4M1004.9,-16.6L1026.6,-3.5M1026.6,-3.5L1019.0,10.1M984.7,10.1L1019.0,10.1M1019.0,10.1L1041.5,24.0M998.6,38.3L1034.0,38.3M1013.4,68.3L1049.8,68.3M1029.1,100.2L1066.6,100.2M1026.6,-3.5L1060.4,-3.5" fill="none" stroke="#000" stroke-opacity="0.03" stroke-width="1"/>
<polygon fill="#1d3d50" transform="translate(0,-4.5)" points="90,-10 146,-10 150,0 155,4.5 185,4.5 196,17.5 230,17.5 244,31 277,31 289,46 324,46 335,58 319,71 279,71 261.4,88 264,92.7 220.9,92.7 225.7,88 216.3,74.5 234,57.5 222.5,41 187.5,41 175,27.5 142.5,27.5 131.6,13.3 98,13.3 90,2.3 84,-10"/>
<polygon fill="url(#gBlue)" points="90,-10 146,-10 150,0 155,4.5 185,4.5 196,17.5 230,17.5 244,31 277,31 289,46 324,46 335,58 319,71 279,71 261.4,88 264,92.7 220.9,92.7 225.7,88 216.3,74.5 234,57.5 222.5,41 187.5,41 175,27.5 142.5,27.5 131.6,13.3 98,13.3 90,2.3 84,-10"/>
<path clip-path="url(#c_blue)" d="M13.4,-9.1L-8.4,4.0M-8.4,4.0L-0.9,17.6M-0.9,17.6L-23.5,31.5M46.8,-9.1L54.9,4.0M54.9,4.0L33.4,17.6M-0.9,17.6L33.4,17.6M33.4,17.6L41.7,31.5M41.7,31.5L19.4,45.8M-16.0,45.8L19.4,45.8M19.4,45.8L27.6,60.6M27.6,60.6L4.4,75.8M-32.0,75.8L4.4,75.8M4.4,75.8L12.7,91.5M12.7,91.5L-11.5,107.7M-11.5,107.7L-3.2,124.4M-3.2,124.4L-28.4,141.6M109.2,-9.1L88.8,4.0M54.9,4.0L88.8,4.0M88.8,4.0L97.7,17.6M97.7,17.6L76.5,31.5M41.7,31.5L76.5,31.5M76.5,31.5L85.5,45.8M85.5,45.8L63.5,60.6M27.6,60.6L63.5,60.6M63.5,60.6L72.5,75.8M72.5,75.8L49.7,91.5M12.7,91.5L49.7,91.5M49.7,91.5L58.8,107.7M58.8,107.7L35.0,124.4M-3.2,124.4L35.0,124.4M35.0,124.4L44.1,141.6M44.1,141.6L19.3,159.5M-20.1,159.5L19.3,159.5M19.3,159.5L28.5,177.8M28.5,177.8L2.6,196.9M-38.2,196.9L2.6,196.9M2.6,196.9L11.8,216.5M11.8,216.5L-15.3,236.9M142.6,-9.1L152.1,4.0M152.1,4.0L132.0,17.6M97.7,17.6L132.0,17.6M132.0,17.6L141.7,31.5M141.7,31.5L120.8,45.8M85.5,45.8L120.8,45.8M120.8,45.8L130.6,60.6M130.6,60.6L108.9,75.8M72.5,75.8L108.9,75.8M108.9,75.8L118.8,91.5M118.8,91.5L96.3,107.7M58.8,107.7L96.3,107.7M96.3,107.7L106.3,124.4M106.3,124.4L82.9,141.6M44.1,141.6L82.9,141.6M82.9,141.6L93.0,159.5M93.0,159.5L68.6,177.8M28.5,177.8L68.6,177.8M68.6,177.8L78.8,196.9M78.8,196.9L53.3,216.5M11.8,216.5L53.3,216.5M53.3,216.5L63.6,236.9M63.6,236.9L36.9,258.0M-6.1,258.0L36.9,258.0M36.9,258.0L47.2,279.9M47.2,279.9L19.2,302.6M-25.3,302.6L19.2,302.6M19.2,302.6L29.7,326.1M29.7,326.1L0.2,350.5M-46.0,350.5L0.2,350.5M0.2,350.5L10.7,376.0M10.7,376.0L-20.3,402.4M205.0,-9.1L185.9,4.0M152.1,4.0L185.9,4.0M185.9,4.0L196.2,17.6M196.2,17.6L176.5,31.5M141.7,31.5L176.5,31.5M176.5,31.5L186.9,45.8M186.9,45.8L166.5,60.6M130.6,60.6L166.5,60.6M166.5,60.6L177.1,75.8M177.1,75.8L155.8,91.5M118.8,91.5L155.8,91.5M155.8,91.5L166.6,107.7M166.6,107.7L144.5,124.4M106.3,124.4L144.5,124.4M144.5,124.4L155.4,141.6M155.4,141.6L132.4,159.5M93.0,159.5L132.4,159.5M132.4,159.5L143.5,177.8M143.5,177.8L119.5,196.9M78.8,196.9L119.5,196.9M119.5,196.9L130.8,216.5M130.8,216.5L105.7,236.9M63.6,236.9L105.7,236.9M105.7,236.9L117.2,258.0M117.2,258.0L91.0,279.9M47.2,279.9L91.0,279.9M91.0,279.9L102.5,302.6M102.5,302.6L75.0,326.1M29.7,326.1L75.0,326.1M75.0,326.1L86.8,350.5M86.8,350.5L57.9,376.0M10.7,376.0L57.9,376.0M57.9,376.0L69.7,402.4M69.7,402.4L39.3,429.9M-9.8,429.9L39.3,429.9M39.3,429.9L51.3,458.5M51.3,458.5L19.1,488.4M-32.0,488.4L19.1,488.4M19.1,488.4L31.2,519.6M31.2,519.6L-2.8,552.2M-56.2,552.2L-2.8,552.2M-2.8,552.2L9.3,586.2M9.3,586.2L-26.8,621.8M238.4,-9.1L249.3,4.0M249.3,4.0L230.6,17.6M196.2,17.6L230.6,17.6M230.6,17.6L241.6,31.5M241.6,31.5L222.3,45.8M186.9,45.8L222.3,45.8M222.3,45.8L233.6,60.6M233.6,60.6L213.5,75.8M177.1,75.8L213.5,75.8M213.5,75.8L225.0,91.5M225.0,91.5L204.1,107.7M166.6,107.7L204.1,107.7M204.1,107.7L215.9,124.4M215.9,124.4L194.2,141.6M155.4,141.6L194.2,141.6M194.2,141.6L206.2,159.5M206.2,159.5L183.6,177.8M143.5,177.8L183.6,177.8M183.6,177.8L195.8,196.9M195.8,196.9L172.3,216.5M130.8,216.5L172.3,216.5M172.3,216.5L184.7,236.9M184.7,236.9L160.1,258.0M117.2,258.0L160.1,258.0M160.1,258.0L172.7,279.9M172.7,279.9L147.1,302.6M102.5,302.6L147.1,302.6M147.1,302.6L159.9,326.1M159.9,326.1L133.0,350.5M86.8,350.5L133.0,350.5M133.0,350.5L146.1,376.0M146.1,376.0L117.8,402.4M69.7,402.4L117.8,402.4M117.8,402.4L131.1,429.9M131.1,429.9L101.3,458.5M51.3,458.5L101.3,458.5M101.3,458.5L114.9,488.4M114.9,488.4L83.5,519.6M31.2,519.6L83.5,519.6M83.5,519.6L97.2,552.2M97.2,552.2L63.9,586.2M9.3,586.2L63.9,586.2M63.9,586.2L77.9,621.8M77.9,621.8L42.6,659.2M-14.7,659.2L42.6,659.2M42.6,659.2L56.6,698.4M56.6,698.4L19.0,739.5M-41.1,739.5L19.0,739.5M19.0,739.5L33.2,782.7M300.8,-9.1L283.1,4.0M249.3,4.0L283.1,4.0M283.1,4.0L294.8,17.6M294.8,17.6L276.5,31.5M241.6,31.5L276.5,31.5M276.5,31.5L288.4,45.8M288.4,45.8L269.4,60.6M233.6,60.6L269.4,60.6M269.4,60.6L281.6,75.8M281.6,75.8L262.0,91.5M225.0,91.5L262.0,91.5M262.0,91.5L274.4,107.7M274.4,107.7L254.0,124.4M215.9,124.4L254.0,124.4M254.0,124.4L266.7,141.6M266.7,141.6L245.5,159.5M206.2,159.5L245.5,159.5M245.5,159.5L258.6,177.8M258.6,177.8L236.5,196.9M195.8,196.9L236.5,196.9M236.5,196.9L249.8,216.5M249.8,216.5L226.8,236.9M184.7,236.9L226.8,236.9M226.8,236.9L240.4,258.0M240.4,258.0L216.4,279.9M172.7,279.9L216.4,279.9M216.4,279.9L230.4,302.6M230.4,302.6L205.3,326.1M159.9,326.1L205.3,326.1M205.3,326.1L219.5,350.5M219.5,350.5L193.2,376.0M146.1,376.0L193.2,376.0M193.2,376.0L207.8,402.4M207.8,402.4L180.2,429.9M131.1,429.9L180.2,429.9M180.2,429.9L195.1,458.5M195.1,458.5L166.0,488.4M114.9,488.4L166.0,488.4M166.0,488.4L181.3,519.6M181.3,519.6L150.6,552.2M97.2,552.2L150.6,552.2M150.6,552.2L166.2,586.2M166.2,586.2L133.8,621.8M77.9,621.8L133.8,621.8M133.8,621.8L149.7,659.2M149.7,659.2L115.3,698.4M56.6,698.4L115.3,698.4M115.3,698.4L131.6,739.5M131.6,739.5L94.9,782.7M334.2,-9.1L346.4,4.0M346.4,4.0L329.1,17.6M294.8,17.6L329.1,17.6M329.1,17.6L341.6,31.5M341.6,31.5L323.7,45.8M288.4,45.8L323.7,45.8M323.7,45.8L336.5,60.6M336.5,60.6L318.0,75.8M281.6,75.8L318.0,75.8M318.0,75.8L331.1,91.5M331.1,91.5L312.0,107.7M274.4,107.7L312.0,107.7M312.0,107.7L325.4,124.4M325.4,124.4L305.5,141.6M266.7,141.6L305.5,141.6M305.5,141.6L319.3,159.5M319.3,159.5L298.6,177.8M258.6,177.8L298.6,177.8M298.6,177.8L312.7,196.9M312.7,196.9L291.2,216.5M249.8,216.5L291.2,216.5M291.2,216.5L305.7,236.9M305.7,236.9L283.3,258.0M240.4,258.0L283.3,258.0M283.3,258.0L298.2,279.9M298.2,279.9L274.9,302.6M230.4,302.6L274.9,302.6M274.9,302.6L290.1,326.1M290.1,326.1L265.7,350.5M219.5,350.5L265.7,350.5M265.7,350.5L281.4,376.0M281.4,376.0L255.9,402.4M207.8,402.4L255.9,402.4M255.9,402.4L272.0,429.9M272.0,429.9L245.2,458.5M195.1,458.5L245.2,458.5M245.2,458.5L261.8,488.4M261.8,488.4L233.6,519.6M181.3,519.6L233.6,519.6M233.6,519.6L250.6,552.2M250.6,552.2L220.9,586.2M166.2,586.2L220.9,586.2M220.9,586.2L238.5,621.8M238.5,621.8L207.0,659.2M149.7,659.2L207.0,659.2M207.0,659.2L225.1,698.4M225.1,698.4L191.7,739.5M131.6,739.5L191.7,739.5M191.7,739.5L210.3,782.7M396.6,-9.1L380.3,4.0M346.4,4.0L380.3,4.0M380.3,4.0L393.3,17.6M393.3,17.6L376.5,31.5M341.6,31.5L376.5,31.5M376.5,31.5L389.9,45.8M389.9,45.8L372.4,60.6M336.5,60.6L372.4,60.6M372.4,60.6L386.2,75.8M386.2,75.8L368.1,91.5M331.1,91.5L368.1,91.5M368.1,91.5L382.2,107.7M382.2,107.7L363.5,124.4M325.4,124.4L363.5,124.4M363.5,124.4L378.0,141.6M378.0,141.6L358.7,159.5M319.3,159.5L358.7,159.5M358.7,159.5L373.6,177.8M373.6,177.8L353.5,196.9M312.7,196.9L353.5,196.9M353.5,196.9L368.8,216.5M368.8,216.5L347.9,236.9M305.7,236.9L347.9,236.9M347.9,236.9L363.7,258.0M363.7,258.0L341.9,279.9M298.2,279.9L341.9,279.9M341.9,279.9L358.2,302.6M358.2,302.6L335.5,326.1M290.1,326.1L335.5,326.1M335.5,326.1L352.2,350.5M352.2,350.5L328.6,376.0M281.4,376.0L328.6,376.0M328.6,376.0L345.9,402.4M345.9,402.4L321.1,429.9M272.0,429.9L321.1,429.9M321.1,429.9L338.9,458.5M338.9,458.5L312.9,488.4M261.8,488.4L312.9,488.4M312.9,488.4L331.4,519.6M331.4,519.6L304.1,552.2M250.6,552.2L304.1,552.2M304.1,552.2L323.2,586.2M323.2,586.2L294.4,621.8M238.5,621.8L294.4,621.8M294.4,621.8L314.2,659.2M314.2,659.2L283.8,698.4M225.1,698.4L283.8,698.4M283.8,698.4L304.2,739.5M304.2,739.5L272.0,782.7M430.0,-9.1L443.6,4.0M443.6,4.0L427.7,17.6M393.3,17.6L427.7,17.6M427.7,17.6L441.6,31.5M441.6,31.5L425.2,45.8M389.9,45.8L425.2,45.8M425.2,45.8L439.5,60.6M439.5,60.6L422.6,75.8M386.2,75.8L422.6,75.8M422.6,75.8L437.3,91.5M437.3,91.5L419.8,107.7M382.2,107.7L419.8,107.7M419.8,107.7L434.9,124.4M434.9,124.4L416.8,141.6M378.0,141.6L416.8,141.6M416.8,141.6L432.4,159.5M432.4,159.5L413.6,177.8M373.6,177.8L413.6,177.8M413.6,177.8L429.7,196.9M429.7,196.9L410.2,216.5M368.8,216.5L410.2,216.5M410.2,216.5L426.8,236.9M426.8,236.9L406.6,258.0M363.7,258.0L406.6,258.0M406.6,258.0L423.7,279.9M423.7,279.9L402.7,302.6M358.2,302.6L402.7,302.6M402.7,302.6L420.4,326.1M420.4,326.1L398.5,350.5M352.2,350.5L398.5,350.5M398.5,350.5L416.8,376.0M416.8,376.0L393.9,402.4M345.9,402.4L393.9,402.4M393.9,402.4L412.9,429.9M412.9,429.9L389.0,458.5M338.9,458.5L389.0,458.5M389.0,458.5L408.7,488.4M408.7,488.4L383.7,519.6M331.4,519.6L383.7,519.6M383.7,519.6L404.1,552.2M404.1,552.2L377.8,586.2M323.2,586.2L377.8,586.2M377.8,586.2L399.1,621.8M399.1,621.8L371.4,659.2M314.2,659.2L371.4,659.2M371.4,659.2L393.5,698.4M393.5,698.4L364.4,739.5M304.2,739.5L364.4,739.5M364.4,739.5L387.5,782.7M492.5,-9.1L477.4,4.0M443.6,4.0L477.4,4.0M477.4,4.0L491.9,17.6M491.9,17.6L476.4,31.5M441.6,31.5L476.4,31.5M476.4,31.5L491.3,45.8M491.3,45.8L475.4,60.6M439.5,60.6L475.4,60.6M475.4,60.6L490.7,75.8M490.7,75.8L474.3,91.5M437.3,91.5L474.3,91.5M474.3,91.5L490.0,107.7M490.0,107.7L473.1,124.4M434.9,124.4L473.1,124.4M473.1,124.4L489.3,141.6M489.3,141.6L471.8,159.5M432.4,159.5L471.8,159.5M471.8,159.5L488.6,177.8M488.6,177.8L470.4,196.9M429.7,196.9L470.4,196.9M470.4,196.9L487.8,216.5M487.8,216.5L469.0,236.9M426.8,236.9L469.0,236.9M469.0,236.9L486.9,258.0M486.9,258.0L467.4,279.9M423.7,279.9L467.4,279.9M467.4,279.9L486.0,302.6M486.0,302.6L465.7,326.1M420.4,326.1L465.7,326.1M465.7,326.1L485.0,350.5M485.0,350.5L463.9,376.0M416.8,376.0L463.9,376.0M463.9,376.0L483.9,402.4M483.9,402.4L462.0,429.9M412.9,429.9L462.0,429.9M462.0,429.9L482.8,458.5M482.8,458.5L459.8,488.4M408.7,488.4L459.8,488.4M459.8,488.4L481.5,519.6M481.5,519.6L457.5,552.2M404.1,552.2L457.5,552.2M457.5,552.2L480.1,586.2M480.1,586.2L455.0,621.8M399.1,621.8L455.0,621.8M455.0,621.8L478.6,659.2M478.6,659.2L452.2,698.4M393.5,698.4L452.2,698.4M452.2,698.4L476.9,739.5M476.9,739.5L449.1,782.7M525.8,-9.1L540.8,4.0M540.8,4.0L526.2,17.6M491.9,17.6L526.2,17.6M526.2,17.6L541.6,31.5M541.6,31.5L526.7,45.8M491.3,45.8L526.7,45.8M526.7,45.8L542.5,60.6M542.5,60.6L527.1,75.8M490.7,75.8L527.1,75.8M527.1,75.8L543.4,91.5M543.4,91.5L527.6,107.7M490.0,107.7L527.6,107.7M527.6,107.7L544.5,124.4M544.5,124.4L528.1,141.6M489.3,141.6L528.1,141.6M528.1,141.6L545.5,159.5M545.5,159.5L528.6,177.8M488.6,177.8L528.6,177.8M528.6,177.8L546.7,196.9M546.7,196.9L529.2,216.5M487.8,216.5L529.2,216.5M529.2,216.5L547.9,236.9M547.9,236.9L529.8,258.0M486.9,258.0L529.8,258.0M529.8,258.0L549.2,279.9M549.2,279.9L530.5,302.6M486.0,302.6L530.5,302.6M530.5,302.6L550.6,326.1M550.6,326.1L531.2,350.5M485.0,350.5L531.2,350.5M531.2,350.5L552.1,376.0M552.1,376.0L532.0,402.4M483.9,402.4L532.0,402.4M532.0,402.4L553.8,429.9M553.8,429.9L532.8,458.5M482.8,458.5L532.8,458.5M532.8,458.5L555.6,488.4M555.6,488.4L533.8,519.6M481.5,519.6L533.8,519.6M533.8,519.6L557.5,552.2M557.5,552.2L534.8,586.2M480.1,586.2L534.8,586.2M534.8,586.2L559.7,621.8M559.7,621.8L535.9,659.2M478.6,659.2L535.9,659.2M535.9,659.2L562.0,698.4M562.0,698.4L537.1,739.5M476.9,739.5L537.1,739.5M537.1,739.5L564.6,782.7M588.3,-9.1L574.6,4.0M540.8,4.0L574.6,4.0M574.6,4.0L590.5,17.6M590.5,17.6L576.4,31.5M541.6,31.5L576.4,31.5M576.4,31.5L592.8,45.8M592.8,45.8L578.4,60.6M542.5,60.6L578.4,60.6M578.4,60.6L595.2,75.8M595.2,75.8L580.4,91.5M543.4,91.5L580.4,91.5M580.4,91.5L597.8,107.7M597.8,107.7L582.6,124.4M544.5,124.4L582.6,124.4M582.6,124.4L600.6,141.6M600.6,141.6L584.9,159.5M545.5,159.5L584.9,159.5M584.9,159.5L603.6,177.8M603.6,177.8L587.4,196.9M546.7,196.9L587.4,196.9M587.4,196.9L606.8,216.5M606.8,216.5L590.1,236.9M547.9,236.9L590.1,236.9M590.1,236.9L610.2,258.0M610.2,258.0L592.9,279.9M549.2,279.9L592.9,279.9M592.9,279.9L613.8,302.6M613.8,302.6L596.0,326.1M550.6,326.1L596.0,326.1M596.0,326.1L617.7,350.5M617.7,350.5L599.3,376.0M552.1,376.0L599.3,376.0M599.3,376.0L622.0,402.4M622.0,402.4L602.9,429.9M553.8,429.9L602.9,429.9M602.9,429.9L626.6,458.5M626.6,458.5L606.7,488.4M555.6,488.4L606.7,488.4M606.7,488.4L631.6,519.6M631.6,519.6L611.0,552.2M557.5,552.2L611.0,552.2M611.0,552.2L637.0,586.2M637.0,586.2L615.6,621.8M559.7,621.8L615.6,621.8M615.6,621.8L643.0,659.2M643.0,659.2L620.7,698.4M562.0,698.4L620.7,698.4M620.7,698.4L649.6,739.5M649.6,739.5L626.3,782.7M621.6,-9.1L637.9,4.0M637.9,4.0L624.8,17.6M590.5,17.6L624.8,17.6M624.8,17.6L641.6,31.5M641.6,31.5L628.1,45.8M592.8,45.8L628.1,45.8M628.1,45.8L645.5,60.6M645.5,60.6L631.6,75.8M595.2,75.8L631.6,75.8M631.6,75.8L649.6,91.5M649.6,91.5L635.4,107.7M597.8,107.7L635.4,107.7M635.4,107.7L654.0,124.4M654.0,124.4L639.4,141.6M600.6,141.6L639.4,141.6M639.4,141.6L658.6,159.5M658.6,159.5L643.6,177.8M603.6,177.8L643.6,177.8M643.6,177.8L663.6,196.9M663.6,196.9L648.2,216.5M606.8,216.5L648.2,216.5M648.2,216.5L669.0,236.9M669.0,236.9L653.1,258.0M610.2,258.0L653.1,258.0M653.1,258.0L674.7,279.9M674.7,279.9L658.3,302.6M613.8,302.6L658.3,302.6M658.3,302.6L680.9,326.1M680.9,326.1L664.0,350.5M617.7,350.5L664.0,350.5M664.0,350.5L687.5,376.0M687.5,376.0L670.1,402.4M622.0,402.4L670.1,402.4M670.1,402.4L694.7,429.9M694.7,429.9L676.7,458.5M626.6,458.5L676.7,458.5M676.7,458.5L702.5,488.4M702.5,488.4L683.9,519.6M631.6,519.6L683.9,519.6M683.9,519.6L711.0,552.2M711.0,552.2L691.7,586.2M637.0,586.2L691.7,586.2M691.7,586.2L720.3,621.8M720.3,621.8L700.3,659.2M643.0,659.2L700.3,659.2M700.3,659.2L730.5,698.4M730.5,698.4L709.7,739.5M649.6,739.5L709.7,739.5M709.7,739.5L741.7,782.7M684.1,-9.1L671.8,4.0M637.9,4.0L671.8,4.0M671.8,4.0L689.0,17.6M689.0,17.6L676.4,31.5M641.6,31.5L676.4,31.5M676.4,31.5L694.2,45.8M694.2,45.8L681.3,60.6M645.5,60.6L681.3,60.6M681.3,60.6L699.8,75.8M699.8,75.8L686.6,91.5M649.6,91.5L686.6,91.5M686.6,91.5L705.7,107.7M705.7,107.7L692.1,124.4M654.0,124.4L692.1,124.4M692.1,124.4L711.9,141.6M711.9,141.6L698.0,159.5M658.6,159.5L698.0,159.5M698.0,159.5L718.6,177.8M718.6,177.8L704.4,196.9M663.6,196.9L704.4,196.9M704.4,196.9L725.7,216.5M725.7,216.5L711.1,236.9M669.0,236.9L711.1,236.9M711.1,236.9L733.4,258.0M733.4,258.0L718.4,279.9M674.7,279.9L718.4,279.9M718.4,279.9L741.6,302.6M741.6,302.6L726.2,326.1M680.9,326.1L726.2,326.1M726.2,326.1L750.5,350.5M750.5,350.5L734.6,376.0M687.5,376.0L734.6,376.0M734.6,376.0L760.0,402.4M760.0,402.4L743.7,429.9M694.7,429.9L743.7,429.9M743.7,429.9L770.4,458.5M770.4,458.5L753.6,488.4M702.5,488.4L753.6,488.4M753.6,488.4L781.7,519.6M781.7,519.6L764.4,552.2M711.0,552.2L764.4,552.2M764.4,552.2L794.0,586.2M794.0,586.2L776.2,621.8M720.3,621.8L776.2,621.8M776.2,621.8L807.5,659.2M807.5,659.2L789.1,698.4M730.5,698.4L789.1,698.4M789.1,698.4L822.3,739.5M822.3,739.5L803.4,782.7M717.5,-9.1L735.1,4.0M735.1,4.0L723.3,17.6M689.0,17.6L723.3,17.6M723.3,17.6L741.6,31.5M741.6,31.5L729.6,45.8M694.2,45.8L729.6,45.8M729.6,45.8L748.5,60.6M748.5,60.6L736.2,75.8M699.8,75.8L736.2,75.8M736.2,75.8L755.7,91.5M755.7,91.5L743.2,107.7M705.7,107.7L743.2,107.7M743.2,107.7L763.5,124.4M763.5,124.4L750.7,141.6M711.9,141.6L750.7,141.6M750.7,141.6L771.8,159.5M771.8,159.5L758.7,177.8M718.6,177.8L758.7,177.8M758.7,177.8L780.6,196.9M780.6,196.9L767.2,216.5M725.7,216.5L767.2,216.5M767.2,216.5L790.0,236.9M790.0,236.9L776.3,258.0M733.4,258.0L776.3,258.0M776.3,258.0L800.2,279.9M800.2,279.9L786.1,302.6M741.6,302.6L786.1,302.6M786.1,302.6L811.1,326.1M811.1,326.1L796.7,350.5M750.5,350.5L796.7,350.5M796.7,350.5L822.8,376.0M822.8,376.0L808.1,402.4M760.0,402.4L808.1,402.4M808.1,402.4L835.6,429.9M835.6,429.9L820.5,458.5M770.4,458.5L820.5,458.5M820.5,458.5L849.4,488.4M849.4,488.4L834.0,519.6M781.7,519.6L834.0,519.6M834.0,519.6L864.4,552.2M864.4,552.2L848.6,586.2M794.0,586.2L848.6,586.2M848.6,586.2L880.9,621.8M880.9,621.8L864.7,659.2M807.5,659.2L864.7,659.2M864.7,659.2L898.9,698.4M898.9,698.4L882.4,739.5M822.3,739.5L882.4,739.5M882.4,739.5L918.8,782.7M779.9,-9.1L768.9,4.0M735.1,4.0L768.9,4.0M768.9,4.0L787.6,17.6M787.6,17.6L776.4,31.5M741.6,31.5L776.4,31.5M776.4,31.5L795.7,45.8M795.7,45.8L784.3,60.6M748.5,60.6L784.3,60.6M784.3,60.6L804.3,75.8M804.3,75.8L792.7,91.5M755.7,91.5L792.7,91.5M792.7,91.5L813.5,107.7M813.5,107.7L801.6,124.4M763.5,124.4L801.6,124.4M801.6,124.4L823.2,141.6M823.2,141.6L811.2,159.5M771.8,159.5L811.2,159.5M811.2,159.5L833.6,177.8M833.6,177.8L821.3,196.9M780.6,196.9L821.3,196.9M821.3,196.9L844.7,216.5M844.7,216.5L832.2,236.9M790.0,236.9L832.2,236.9M832.2,236.9L856.6,258.0M856.6,258.0L843.9,279.9M800.2,279.9L843.9,279.9M843.9,279.9L869.4,302.6M869.4,302.6L856.4,326.1M811.1,326.1L856.4,326.1M856.4,326.1L883.2,350.5M883.2,350.5L870.0,376.0M822.8,376.0L870.0,376.0M870.0,376.0L898.1,402.4M898.1,402.4L884.6,429.9M835.6,429.9L884.6,429.9M884.6,429.9L914.2,458.5M914.2,458.5L900.5,488.4M849.4,488.4L900.5,488.4M900.5,488.4L931.8,519.6M931.8,519.6L917.9,552.2M864.4,552.2L917.9,552.2M917.9,552.2L950.9,586.2M950.9,586.2L936.8,621.8M880.9,621.8L936.8,621.8M936.8,621.8L971.9,659.2M971.9,659.2L957.6,698.4M898.9,698.4L957.6,698.4M957.6,698.4L994.9,739.5M994.9,739.5L980.5,782.7M813.3,-9.1L832.3,4.0M832.3,4.0L821.9,17.6M787.6,17.6L821.9,17.6M821.9,17.6L841.6,31.5M841.6,31.5L831.0,45.8M795.7,45.8L831.0,45.8M831.0,45.8L851.4,60.6M851.4,60.6L840.7,75.8M804.3,75.8L840.7,75.8M840.7,75.8L861.9,91.5M861.9,91.5L851.0,107.7M813.5,107.7L851.0,107.7M851.0,107.7L873.0,124.4M873.0,124.4L862.0,141.6M823.2,141.6L862.0,141.6M862.0,141.6L884.9,159.5M884.9,159.5L873.7,177.8M833.6,177.8L873.7,177.8M873.7,177.8L897.6,196.9M897.6,196.9L886.2,216.5M844.7,216.5L886.2,216.5M886.2,216.5L911.1,236.9M911.1,236.9L899.6,258.0M856.6,258.0L899.6,258.0M899.6,258.0L925.7,279.9M925.7,279.9L914.0,302.6M869.4,302.6L914.0,302.6M914.0,302.6L941.3,326.1M941.3,326.1L929.5,350.5M883.2,350.5L929.5,350.5M929.5,350.5L958.2,376.0M958.2,376.0L946.2,402.4M898.1,402.4L946.2,402.4M946.2,402.4L976.5,429.9M976.5,429.9L964.3,458.5M914.2,458.5L964.3,458.5M964.3,458.5L996.3,488.4M996.3,488.4L984.1,519.6M931.8,519.6L984.1,519.6M984.1,519.6L1017.9,552.2M1017.9,552.2L1005.6,586.2M950.9,586.2L1005.6,586.2M1005.6,586.2L1041.5,621.8M1041.5,621.8L1029.1,659.2M971.9,659.2L1029.1,659.2M1029.1,659.2L1067.4,698.4M994.9,739.5L1055.1,739.5M875.7,-9.1L866.1,4.0M832.3,4.0L866.1,4.0M866.1,4.0L886.1,17.6M886.1,17.6L876.4,31.5M841.6,31.5L876.4,31.5M876.4,31.5L897.2,45.8M897.2,45.8L887.3,60.6M851.4,60.6L887.3,60.6M887.3,60.6L908.9,75.8M908.9,75.8L898.9,91.5M861.9,91.5L898.9,91.5M898.9,91.5L921.3,107.7M921.3,107.7L911.2,124.4M873.0,124.4L911.2,124.4M911.2,124.4L934.5,141.6M934.5,141.6L924.3,159.5M884.9,159.5L924.3,159.5M924.3,159.5L948.6,177.8M948.6,177.8L938.3,196.9M897.6,196.9L938.3,196.9M938.3,196.9L963.7,216.5M963.7,216.5L953.3,236.9M911.1,236.9L953.3,236.9M953.3,236.9L979.9,258.0M979.9,258.0L969.4,279.9M925.7,279.9L969.4,279.9M969.4,279.9L997.3,302.6M997.3,302.6L986.7,326.1M941.3,326.1L986.7,326.1M986.7,326.1L1016.0,350.5M1016.0,350.5L1005.3,376.0M958.2,376.0L1005.3,376.0M1005.3,376.0L1036.2,402.4M1036.2,402.4L1025.5,429.9M976.5,429.9L1025.5,429.9M1025.5,429.9L1058.1,458.5M996.3,488.4L1047.4,488.4M1017.9,552.2L1071.3,552.2M909.1,-9.1L929.4,4.0M929.4,4.0L920.5,17.6M886.1,17.6L920.5,17.6M920.5,17.6L941.6,31.5M941.6,31.5L932.5,45.8M897.2,45.8L932.5,45.8M932.5,45.8L954.4,60.6M954.4,60.6L945.3,75.8M908.9,75.8L945.3,75.8M945.3,75.8L968.0,91.5M968.0,91.5L958.8,107.7M921.3,107.7L958.8,107.7M958.8,107.7L982.6,124.4M982.6,124.4L973.3,141.6M934.5,141.6L973.3,141.6M973.3,141.6L998.0,159.5M998.0,159.5L988.7,177.8M948.6,177.8L988.7,177.8M988.7,177.8L1014.5,196.9M1014.5,196.9L1005.2,216.5M963.7,216.5L1005.2,216.5M1005.2,216.5L1032.2,236.9M1032.2,236.9L1022.8,258.0M979.9,258.0L1022.8,258.0M1022.8,258.0L1051.2,279.9M997.3,302.6L1041.8,302.6M1016.0,350.5L1062.2,350.5M971.5,-9.1L963.3,4.0M929.4,4.0L963.3,4.0M963.3,4.0L984.7,17.6M984.7,17.6L976.4,31.5M941.6,31.5L976.4,31.5M976.4,31.5L998.6,45.8M998.6,45.8L990.3,60.6M954.4,60.6L990.3,60.6M990.3,60.6L1013.4,75.8M1013.4,75.8L1005.0,91.5M968.0,91.5L1005.0,91.5M1005.0,91.5L1029.1,107.7M1029.1,107.7L1020.7,124.4M982.6,124.4L1020.7,124.4M1020.7,124.4L1045.8,141.6M998.0,159.5L1037.4,159.5M1014.5,196.9L1055.3,196.9M1004.9,-9.1L1026.6,4.0M1026.6,4.0L1019.0,17.6M984.7,17.6L1019.0,17.6M1019.0,17.6L1041.5,31.5M998.6,45.8L1034.0,45.8M1013.4,75.8L1049.8,75.8M1029.1,107.7L1066.6,107.7M1026.6,4.0L1060.4,4.0" fill="none" stroke="#ffffff" stroke-opacity="0.07" stroke-width="1"/>
<polygon fill="url(#gTealTop)" points="220.9,92.7 264,92.7 274,111 202,111"/>
<g clip-path="url(#c_blue)"><path fill-rule="evenodd" transform="translate(0.5,2.5)" fill="#1b3545" fill-opacity="1" d="M-50,-50H1100V850H-50Z M90,-10 146,-10 150,0 155,4.5 185,4.5 196,17.5 230,17.5 244,31 277,31 289,46 324,46 335,58 319,71 279,71 261.4,88 264,92.7 220.9,92.7 225.7,88 216.3,74.5 234,57.5 222.5,41 187.5,41 175,27.5 142.5,27.5 131.6,13.3 98,13.3 90,2.3 84,-10Z M220.9,92.7 264,92.7 274,111 202,111Z"/></g>
<g clip-path="url(#c_tealtop)"><path fill-rule="evenodd" transform="translate(0.5,2.5)" fill="#1b3545" fill-opacity="1" d="M-50,-50H1100V850H-50Z M220.9,92.7 264,92.7 274,111 202,111Z M90,-10 146,-10 150,0 155,4.5 185,4.5 196,17.5 230,17.5 244,31 277,31 289,46 324,46 335,58 319,71 279,71 261.4,88 264,92.7 220.9,92.7 225.7,88 216.3,74.5 234,57.5 222.5,41 187.5,41 175,27.5 142.5,27.5 131.6,13.3 98,13.3 90,2.3 84,-10Z"/></g>
<polygon fill="#1d3d50" transform="translate(0,4)" points="276,25 290,11 331,11 342,24 328,39 289,39"/>
<polygon fill="#4f4b6f" points="276,25 290,11 331,11 342,24 328,39 289,39"/>
<polygon fill="#1b2430" transform="translate(-1.5,2)" points="381.6,0 1024,0 1024,342.5 1016,342.5 985.4,318.8 997.3,295 968.5,272 927.9,272 899,251 860,251 700,200 500,109 371.4,109.4 381.6,100.6 420.2,100.6 437.7,84.6 422.4,69.3 440.6,54 425.3,39.4 442.1,24.8 427.5,10.9 393.2,10.9"/>
<polygon fill="url(#gPurple)" points="381.6,0 1024,0 1024,342.5 1016,342.5 985.4,318.8 997.3,295 968.5,272 927.9,272 899,251 860,251 700,200 500,109 371.4,109.4 381.6,100.6 420.2,100.6 437.7,84.6 422.4,69.3 440.6,54 425.3,39.4 442.1,24.8 427.5,10.9 393.2,10.9"/>
<path clip-path="url(#c_purple)" d="M13.4,-16.6L-8.4,-3.5M-8.4,-3.5L-0.9,10.1M-0.9,10.1L-23.5,24.0M46.8,-16.6L54.9,-3.5M54.9,-3.5L33.4,10.1M-0.9,10.1L33.4,10.1M33.4,10.1L41.7,24.0M41.7,24.0L19.4,38.3M-16.0,38.3L19.4,38.3M19.4,38.3L27.6,53.1M27.6,53.1L4.4,68.3M-32.0,68.3L4.4,68.3M4.4,68.3L12.7,84.0M12.7,84.0L-11.5,100.2M-11.5,100.2L-3.2,116.9M-3.2,116.9L-28.4,134.1M109.2,-16.6L88.8,-3.5M54.9,-3.5L88.8,-3.5M88.8,-3.5L97.7,10.1M97.7,10.1L76.5,24.0M41.7,24.0L76.5,24.0M76.5,24.0L85.5,38.3M85.5,38.3L63.5,53.1M27.6,53.1L63.5,53.1M63.5,53.1L72.5,68.3M72.5,68.3L49.7,84.0M12.7,84.0L49.7,84.0M49.7,84.0L58.8,100.2M58.8,100.2L35.0,116.9M-3.2,116.9L35.0,116.9M35.0,116.9L44.1,134.1M44.1,134.1L19.3,152.0M-20.1,152.0L19.3,152.0M19.3,152.0L28.5,170.3M28.5,170.3L2.6,189.4M-38.2,189.4L2.6,189.4M2.6,189.4L11.8,209.0M11.8,209.0L-15.3,229.4M142.6,-16.6L152.1,-3.5M152.1,-3.5L132.0,10.1M97.7,10.1L132.0,10.1M132.0,10.1L141.7,24.0M141.7,24.0L120.8,38.3M85.5,38.3L120.8,38.3M120.8,38.3L130.6,53.1M130.6,53.1L108.9,68.3M72.5,68.3L108.9,68.3M108.9,68.3L118.8,84.0M118.8,84.0L96.3,100.2M58.8,100.2L96.3,100.2M96.3,100.2L106.3,116.9M106.3,116.9L82.9,134.1M44.1,134.1L82.9,134.1M82.9,134.1L93.0,152.0M93.0,152.0L68.6,170.3M28.5,170.3L68.6,170.3M68.6,170.3L78.8,189.4M78.8,189.4L53.3,209.0M11.8,209.0L53.3,209.0M53.3,209.0L63.6,229.4M63.6,229.4L36.9,250.5M-6.1,250.5L36.9,250.5M36.9,250.5L47.2,272.4M47.2,272.4L19.2,295.1M-25.3,295.1L19.2,295.1M19.2,295.1L29.7,318.6M29.7,318.6L0.2,343.0M-46.0,343.0L0.2,343.0M0.2,343.0L10.7,368.5M10.7,368.5L-20.3,394.9M205.0,-16.6L185.9,-3.5M152.1,-3.5L185.9,-3.5M185.9,-3.5L196.2,10.1M196.2,10.1L176.5,24.0M141.7,24.0L176.5,24.0M176.5,24.0L186.9,38.3M186.9,38.3L166.5,53.1M130.6,53.1L166.5,53.1M166.5,53.1L177.1,68.3M177.1,68.3L155.8,84.0M118.8,84.0L155.8,84.0M155.8,84.0L166.6,100.2M166.6,100.2L144.5,116.9M106.3,116.9L144.5,116.9M144.5,116.9L155.4,134.1M155.4,134.1L132.4,152.0M93.0,152.0L132.4,152.0M132.4,152.0L143.5,170.3M143.5,170.3L119.5,189.4M78.8,189.4L119.5,189.4M119.5,189.4L130.8,209.0M130.8,209.0L105.7,229.4M63.6,229.4L105.7,229.4M105.7,229.4L117.2,250.5M117.2,250.5L91.0,272.4M47.2,272.4L91.0,272.4M91.0,272.4L102.5,295.1M102.5,295.1L75.0,318.6M29.7,318.6L75.0,318.6M75.0,318.6L86.8,343.0M86.8,343.0L57.9,368.5M10.7,368.5L57.9,368.5M57.9,368.5L69.7,394.9M69.7,394.9L39.3,422.4M-9.8,422.4L39.3,422.4M39.3,422.4L51.3,451.0M51.3,451.0L19.1,480.9M-32.0,480.9L19.1,480.9M19.1,480.9L31.2,512.1M31.2,512.1L-2.8,544.7M-56.2,544.7L-2.8,544.7M-2.8,544.7L9.3,578.7M9.3,578.7L-26.8,614.3M238.4,-16.6L249.3,-3.5M249.3,-3.5L230.6,10.1M196.2,10.1L230.6,10.1M230.6,10.1L241.6,24.0M241.6,24.0L222.3,38.3M186.9,38.3L222.3,38.3M222.3,38.3L233.6,53.1M233.6,53.1L213.5,68.3M177.1,68.3L213.5,68.3M213.5,68.3L225.0,84.0M225.0,84.0L204.1,100.2M166.6,100.2L204.1,100.2M204.1,100.2L215.9,116.9M215.9,116.9L194.2,134.1M155.4,134.1L194.2,134.1M194.2,134.1L206.2,152.0M206.2,152.0L183.6,170.3M143.5,170.3L183.6,170.3M183.6,170.3L195.8,189.4M195.8,189.4L172.3,209.0M130.8,209.0L172.3,209.0M172.3,209.0L184.7,229.4M184.7,229.4L160.1,250.5M117.2,250.5L160.1,250.5M160.1,250.5L172.7,272.4M172.7,272.4L147.1,295.1M102.5,295.1L147.1,295.1M147.1,295.1L159.9,318.6M159.9,318.6L133.0,343.0M86.8,343.0L133.0,343.0M133.0,343.0L146.1,368.5M146.1,368.5L117.8,394.9M69.7,394.9L117.8,394.9M117.8,394.9L131.1,422.4M131.1,422.4L101.3,451.0M51.3,451.0L101.3,451.0M101.3,451.0L114.9,480.9M114.9,480.9L83.5,512.1M31.2,512.1L83.5,512.1M83.5,512.1L97.2,544.7M97.2,544.7L63.9,578.7M9.3,578.7L63.9,578.7M63.9,578.7L77.9,614.3M77.9,614.3L42.6,651.7M-14.7,651.7L42.6,651.7M42.6,651.7L56.6,690.9M56.6,690.9L19.0,732.0M-41.1,732.0L19.0,732.0M19.0,732.0L33.2,775.2M300.8,-16.6L283.1,-3.5M249.3,-3.5L283.1,-3.5M283.1,-3.5L294.8,10.1M294.8,10.1L276.5,24.0M241.6,24.0L276.5,24.0M276.5,24.0L288.4,38.3M288.4,38.3L269.4,53.1M233.6,53.1L269.4,53.1M269.4,53.1L281.6,68.3M281.6,68.3L262.0,84.0M225.0,84.0L262.0,84.0M262.0,84.0L274.4,100.2M274.4,100.2L254.0,116.9M215.9,116.9L254.0,116.9M254.0,116.9L266.7,134.1M266.7,134.1L245.5,152.0M206.2,152.0L245.5,152.0M245.5,152.0L258.6,170.3M258.6,170.3L236.5,189.4M195.8,189.4L236.5,189.4M236.5,189.4L249.8,209.0M249.8,209.0L226.8,229.4M184.7,229.4L226.8,229.4M226.8,229.4L240.4,250.5M240.4,250.5L216.4,272.4M172.7,272.4L216.4,272.4M216.4,272.4L230.4,295.1M230.4,295.1L205.3,318.6M159.9,318.6L205.3,318.6M205.3,318.6L219.5,343.0M219.5,343.0L193.2,368.5M146.1,368.5L193.2,368.5M193.2,368.5L207.8,394.9M207.8,394.9L180.2,422.4M131.1,422.4L180.2,422.4M180.2,422.4L195.1,451.0M195.1,451.0L166.0,480.9M114.9,480.9L166.0,480.9M166.0,480.9L181.3,512.1M181.3,512.1L150.6,544.7M97.2,544.7L150.6,544.7M150.6,544.7L166.2,578.7M166.2,578.7L133.8,614.3M77.9,614.3L133.8,614.3M133.8,614.3L149.7,651.7M149.7,651.7L115.3,690.9M56.6,690.9L115.3,690.9M115.3,690.9L131.6,732.0M131.6,732.0L94.9,775.2M334.2,-16.6L346.4,-3.5M346.4,-3.5L329.1,10.1M294.8,10.1L329.1,10.1M329.1,10.1L341.6,24.0M341.6,24.0L323.7,38.3M288.4,38.3L323.7,38.3M323.7,38.3L336.5,53.1M336.5,53.1L318.0,68.3M281.6,68.3L318.0,68.3M318.0,68.3L331.1,84.0M331.1,84.0L312.0,100.2M274.4,100.2L312.0,100.2M312.0,100.2L325.4,116.9M325.4,116.9L305.5,134.1M266.7,134.1L305.5,134.1M305.5,134.1L319.3,152.0M319.3,152.0L298.6,170.3M258.6,170.3L298.6,170.3M298.6,170.3L312.7,189.4M312.7,189.4L291.2,209.0M249.8,209.0L291.2,209.0M291.2,209.0L305.7,229.4M305.7,229.4L283.3,250.5M240.4,250.5L283.3,250.5M283.3,250.5L298.2,272.4M298.2,272.4L274.9,295.1M230.4,295.1L274.9,295.1M274.9,295.1L290.1,318.6M290.1,318.6L265.7,343.0M219.5,343.0L265.7,343.0M265.7,343.0L281.4,368.5M281.4,368.5L255.9,394.9M207.8,394.9L255.9,394.9M255.9,394.9L272.0,422.4M272.0,422.4L245.2,451.0M195.1,451.0L245.2,451.0M245.2,451.0L261.8,480.9M261.8,480.9L233.6,512.1M181.3,512.1L233.6,512.1M233.6,512.1L250.6,544.7M250.6,544.7L220.9,578.7M166.2,578.7L220.9,578.7M220.9,578.7L238.5,614.3M238.5,614.3L207.0,651.7M149.7,651.7L207.0,651.7M207.0,651.7L225.1,690.9M225.1,690.9L191.7,732.0M131.6,732.0L191.7,732.0M191.7,732.0L210.3,775.2M396.6,-16.6L380.3,-3.5M346.4,-3.5L380.3,-3.5M380.3,-3.5L393.3,10.1M393.3,10.1L376.5,24.0M341.6,24.0L376.5,24.0M376.5,24.0L389.9,38.3M389.9,38.3L372.4,53.1M336.5,53.1L372.4,53.1M372.4,53.1L386.2,68.3M386.2,68.3L368.1,84.0M331.1,84.0L368.1,84.0M368.1,84.0L382.2,100.2M382.2,100.2L363.5,116.9M325.4,116.9L363.5,116.9M363.5,116.9L378.0,134.1M378.0,134.1L358.7,152.0M319.3,152.0L358.7,152.0M358.7,152.0L373.6,170.3M373.6,170.3L353.5,189.4M312.7,189.4L353.5,189.4M353.5,189.4L368.8,209.0M368.8,209.0L347.9,229.4M305.7,229.4L347.9,229.4M347.9,229.4L363.7,250.5M363.7,250.5L341.9,272.4M298.2,272.4L341.9,272.4M341.9,272.4L358.2,295.1M358.2,295.1L335.5,318.6M290.1,318.6L335.5,318.6M335.5,318.6L352.2,343.0M352.2,343.0L328.6,368.5M281.4,368.5L328.6,368.5M328.6,368.5L345.9,394.9M345.9,394.9L321.1,422.4M272.0,422.4L321.1,422.4M321.1,422.4L338.9,451.0M338.9,451.0L312.9,480.9M261.8,480.9L312.9,480.9M312.9,480.9L331.4,512.1M331.4,512.1L304.1,544.7M250.6,544.7L304.1,544.7M304.1,544.7L323.2,578.7M323.2,578.7L294.4,614.3M238.5,614.3L294.4,614.3M294.4,614.3L314.2,651.7M314.2,651.7L283.8,690.9M225.1,690.9L283.8,690.9M283.8,690.9L304.2,732.0M304.2,732.0L272.0,775.2M430.0,-16.6L443.6,-3.5M443.6,-3.5L427.7,10.1M393.3,10.1L427.7,10.1M427.7,10.1L441.6,24.0M441.6,24.0L425.2,38.3M389.9,38.3L425.2,38.3M425.2,38.3L439.5,53.1M439.5,53.1L422.6,68.3M386.2,68.3L422.6,68.3M422.6,68.3L437.3,84.0M437.3,84.0L419.8,100.2M382.2,100.2L419.8,100.2M419.8,100.2L434.9,116.9M434.9,116.9L416.8,134.1M378.0,134.1L416.8,134.1M416.8,134.1L432.4,152.0M432.4,152.0L413.6,170.3M373.6,170.3L413.6,170.3M413.6,170.3L429.7,189.4M429.7,189.4L410.2,209.0M368.8,209.0L410.2,209.0M410.2,209.0L426.8,229.4M426.8,229.4L406.6,250.5M363.7,250.5L406.6,250.5M406.6,250.5L423.7,272.4M423.7,272.4L402.7,295.1M358.2,295.1L402.7,295.1M402.7,295.1L420.4,318.6M420.4,318.6L398.5,343.0M352.2,343.0L398.5,343.0M398.5,343.0L416.8,368.5M416.8,368.5L393.9,394.9M345.9,394.9L393.9,394.9M393.9,394.9L412.9,422.4M412.9,422.4L389.0,451.0M338.9,451.0L389.0,451.0M389.0,451.0L408.7,480.9M408.7,480.9L383.7,512.1M331.4,512.1L383.7,512.1M383.7,512.1L404.1,544.7M404.1,544.7L377.8,578.7M323.2,578.7L377.8,578.7M377.8,578.7L399.1,614.3M399.1,614.3L371.4,651.7M314.2,651.7L371.4,651.7M371.4,651.7L393.5,690.9M393.5,690.9L364.4,732.0M304.2,732.0L364.4,732.0M364.4,732.0L387.5,775.2M492.5,-16.6L477.4,-3.5M443.6,-3.5L477.4,-3.5M477.4,-3.5L491.9,10.1M491.9,10.1L476.4,24.0M441.6,24.0L476.4,24.0M476.4,24.0L491.3,38.3M491.3,38.3L475.4,53.1M439.5,53.1L475.4,53.1M475.4,53.1L490.7,68.3M490.7,68.3L474.3,84.0M437.3,84.0L474.3,84.0M474.3,84.0L490.0,100.2M490.0,100.2L473.1,116.9M434.9,116.9L473.1,116.9M473.1,116.9L489.3,134.1M489.3,134.1L471.8,152.0M432.4,152.0L471.8,152.0M471.8,152.0L488.6,170.3M488.6,170.3L470.4,189.4M429.7,189.4L470.4,189.4M470.4,189.4L487.8,209.0M487.8,209.0L469.0,229.4M426.8,229.4L469.0,229.4M469.0,229.4L486.9,250.5M486.9,250.5L467.4,272.4M423.7,272.4L467.4,272.4M467.4,272.4L486.0,295.1M486.0,295.1L465.7,318.6M420.4,318.6L465.7,318.6M465.7,318.6L485.0,343.0M485.0,343.0L463.9,368.5M416.8,368.5L463.9,368.5M463.9,368.5L483.9,394.9M483.9,394.9L462.0,422.4M412.9,422.4L462.0,422.4M462.0,422.4L482.8,451.0M482.8,451.0L459.8,480.9M408.7,480.9L459.8,480.9M459.8,480.9L481.5,512.1M481.5,512.1L457.5,544.7M404.1,544.7L457.5,544.7M457.5,544.7L480.1,578.7M480.1,578.7L455.0,614.3M399.1,614.3L455.0,614.3M455.0,614.3L478.6,651.7M478.6,651.7L452.2,690.9M393.5,690.9L452.2,690.9M452.2,690.9L476.9,732.0M476.9,732.0L449.1,775.2M525.8,-16.6L540.8,-3.5M540.8,-3.5L526.2,10.1M491.9,10.1L526.2,10.1M526.2,10.1L541.6,24.0M541.6,24.0L526.7,38.3M491.3,38.3L526.7,38.3M526.7,38.3L542.5,53.1M542.5,53.1L527.1,68.3M490.7,68.3L527.1,68.3M527.1,68.3L543.4,84.0M543.4,84.0L527.6,100.2M490.0,100.2L527.6,100.2M527.6,100.2L544.5,116.9M544.5,116.9L528.1,134.1M489.3,134.1L528.1,134.1M528.1,134.1L545.5,152.0M545.5,152.0L528.6,170.3M488.6,170.3L528.6,170.3M528.6,170.3L546.7,189.4M546.7,189.4L529.2,209.0M487.8,209.0L529.2,209.0M529.2,209.0L547.9,229.4M547.9,229.4L529.8,250.5M486.9,250.5L529.8,250.5M529.8,250.5L549.2,272.4M549.2,272.4L530.5,295.1M486.0,295.1L530.5,295.1M530.5,295.1L550.6,318.6M550.6,318.6L531.2,343.0M485.0,343.0L531.2,343.0M531.2,343.0L552.1,368.5M552.1,368.5L532.0,394.9M483.9,394.9L532.0,394.9M532.0,394.9L553.8,422.4M553.8,422.4L532.8,451.0M482.8,451.0L532.8,451.0M532.8,451.0L555.6,480.9M555.6,480.9L533.8,512.1M481.5,512.1L533.8,512.1M533.8,512.1L557.5,544.7M557.5,544.7L534.8,578.7M480.1,578.7L534.8,578.7M534.8,578.7L559.7,614.3M559.7,614.3L535.9,651.7M478.6,651.7L535.9,651.7M535.9,651.7L562.0,690.9M562.0,690.9L537.1,732.0M476.9,732.0L537.1,732.0M537.1,732.0L564.6,775.2M588.3,-16.6L574.6,-3.5M540.8,-3.5L574.6,-3.5M574.6,-3.5L590.5,10.1M590.5,10.1L576.4,24.0M541.6,24.0L576.4,24.0M576.4,24.0L592.8,38.3M592.8,38.3L578.4,53.1M542.5,53.1L578.4,53.1M578.4,53.1L595.2,68.3M595.2,68.3L580.4,84.0M543.4,84.0L580.4,84.0M580.4,84.0L597.8,100.2M597.8,100.2L582.6,116.9M544.5,116.9L582.6,116.9M582.6,116.9L600.6,134.1M600.6,134.1L584.9,152.0M545.5,152.0L584.9,152.0M584.9,152.0L603.6,170.3M603.6,170.3L587.4,189.4M546.7,189.4L587.4,189.4M587.4,189.4L606.8,209.0M606.8,209.0L590.1,229.4M547.9,229.4L590.1,229.4M590.1,229.4L610.2,250.5M610.2,250.5L592.9,272.4M549.2,272.4L592.9,272.4M592.9,272.4L613.8,295.1M613.8,295.1L596.0,318.6M550.6,318.6L596.0,318.6M596.0,318.6L617.7,343.0M617.7,343.0L599.3,368.5M552.1,368.5L599.3,368.5M599.3,368.5L622.0,394.9M622.0,394.9L602.9,422.4M553.8,422.4L602.9,422.4M602.9,422.4L626.6,451.0M626.6,451.0L606.7,480.9M555.6,480.9L606.7,480.9M606.7,480.9L631.6,512.1M631.6,512.1L611.0,544.7M557.5,544.7L611.0,544.7M611.0,544.7L637.0,578.7M637.0,578.7L615.6,614.3M559.7,614.3L615.6,614.3M615.6,614.3L643.0,651.7M643.0,651.7L620.7,690.9M562.0,690.9L620.7,690.9M620.7,690.9L649.6,732.0M649.6,732.0L626.3,775.2M621.6,-16.6L637.9,-3.5M637.9,-3.5L624.8,10.1M590.5,10.1L624.8,10.1M624.8,10.1L641.6,24.0M641.6,24.0L628.1,38.3M592.8,38.3L628.1,38.3M628.1,38.3L645.5,53.1M645.5,53.1L631.6,68.3M595.2,68.3L631.6,68.3M631.6,68.3L649.6,84.0M649.6,84.0L635.4,100.2M597.8,100.2L635.4,100.2M635.4,100.2L654.0,116.9M654.0,116.9L639.4,134.1M600.6,134.1L639.4,134.1M639.4,134.1L658.6,152.0M658.6,152.0L643.6,170.3M603.6,170.3L643.6,170.3M643.6,170.3L663.6,189.4M663.6,189.4L648.2,209.0M606.8,209.0L648.2,209.0M648.2,209.0L669.0,229.4M669.0,229.4L653.1,250.5M610.2,250.5L653.1,250.5M653.1,250.5L674.7,272.4M674.7,272.4L658.3,295.1M613.8,295.1L658.3,295.1M658.3,295.1L680.9,318.6M680.9,318.6L664.0,343.0M617.7,343.0L664.0,343.0M664.0,343.0L687.5,368.5M687.5,368.5L670.1,394.9M622.0,394.9L670.1,394.9M670.1,394.9L694.7,422.4M694.7,422.4L676.7,451.0M626.6,451.0L676.7,451.0M676.7,451.0L702.5,480.9M702.5,480.9L683.9,512.1M631.6,512.1L683.9,512.1M683.9,512.1L711.0,544.7M711.0,544.7L691.7,578.7M637.0,578.7L691.7,578.7M691.7,578.7L720.3,614.3M720.3,614.3L700.3,651.7M643.0,651.7L700.3,651.7M700.3,651.7L730.5,690.9M730.5,690.9L709.7,732.0M649.6,732.0L709.7,732.0M709.7,732.0L741.7,775.2M684.1,-16.6L671.8,-3.5M637.9,-3.5L671.8,-3.5M671.8,-3.5L689.0,10.1M689.0,10.1L676.4,24.0M641.6,24.0L676.4,24.0M676.4,24.0L694.2,38.3M694.2,38.3L681.3,53.1M645.5,53.1L681.3,53.1M681.3,53.1L699.8,68.3M699.8,68.3L686.6,84.0M649.6,84.0L686.6,84.0M686.6,84.0L705.7,100.2M705.7,100.2L692.1,116.9M654.0,116.9L692.1,116.9M692.1,116.9L711.9,134.1M711.9,134.1L698.0,152.0M658.6,152.0L698.0,152.0M698.0,152.0L718.6,170.3M718.6,170.3L704.4,189.4M663.6,189.4L704.4,189.4M704.4,189.4L725.7,209.0M725.7,209.0L711.1,229.4M669.0,229.4L711.1,229.4M711.1,229.4L733.4,250.5M733.4,250.5L718.4,272.4M674.7,272.4L718.4,272.4M718.4,272.4L741.6,295.1M741.6,295.1L726.2,318.6M680.9,318.6L726.2,318.6M726.2,318.6L750.5,343.0M750.5,343.0L734.6,368.5M687.5,368.5L734.6,368.5M734.6,368.5L760.0,394.9M760.0,394.9L743.7,422.4M694.7,422.4L743.7,422.4M743.7,422.4L770.4,451.0M770.4,451.0L753.6,480.9M702.5,480.9L753.6,480.9M753.6,480.9L781.7,512.1M781.7,512.1L764.4,544.7M711.0,544.7L764.4,544.7M764.4,544.7L794.0,578.7M794.0,578.7L776.2,614.3M720.3,614.3L776.2,614.3M776.2,614.3L807.5,651.7M807.5,651.7L789.1,690.9M730.5,690.9L789.1,690.9M789.1,690.9L822.3,732.0M822.3,732.0L803.4,775.2M717.5,-16.6L735.1,-3.5M735.1,-3.5L723.3,10.1M689.0,10.1L723.3,10.1M723.3,10.1L741.6,24.0M741.6,24.0L729.6,38.3M694.2,38.3L729.6,38.3M729.6,38.3L748.5,53.1M748.5,53.1L736.2,68.3M699.8,68.3L736.2,68.3M736.2,68.3L755.7,84.0M755.7,84.0L743.2,100.2M705.7,100.2L743.2,100.2M743.2,100.2L763.5,116.9M763.5,116.9L750.7,134.1M711.9,134.1L750.7,134.1M750.7,134.1L771.8,152.0M771.8,152.0L758.7,170.3M718.6,170.3L758.7,170.3M758.7,170.3L780.6,189.4M780.6,189.4L767.2,209.0M725.7,209.0L767.2,209.0M767.2,209.0L790.0,229.4M790.0,229.4L776.3,250.5M733.4,250.5L776.3,250.5M776.3,250.5L800.2,272.4M800.2,272.4L786.1,295.1M741.6,295.1L786.1,295.1M786.1,295.1L811.1,318.6M811.1,318.6L796.7,343.0M750.5,343.0L796.7,343.0M796.7,343.0L822.8,368.5M822.8,368.5L808.1,394.9M760.0,394.9L808.1,394.9M808.1,394.9L835.6,422.4M835.6,422.4L820.5,451.0M770.4,451.0L820.5,451.0M820.5,451.0L849.4,480.9M849.4,480.9L834.0,512.1M781.7,512.1L834.0,512.1M834.0,512.1L864.4,544.7M864.4,544.7L848.6,578.7M794.0,578.7L848.6,578.7M848.6,578.7L880.9,614.3M880.9,614.3L864.7,651.7M807.5,651.7L864.7,651.7M864.7,651.7L898.9,690.9M898.9,690.9L882.4,732.0M822.3,732.0L882.4,732.0M882.4,732.0L918.8,775.2M779.9,-16.6L768.9,-3.5M735.1,-3.5L768.9,-3.5M768.9,-3.5L787.6,10.1M787.6,10.1L776.4,24.0M741.6,24.0L776.4,24.0M776.4,24.0L795.7,38.3M795.7,38.3L784.3,53.1M748.5,53.1L784.3,53.1M784.3,53.1L804.3,68.3M804.3,68.3L792.7,84.0M755.7,84.0L792.7,84.0M792.7,84.0L813.5,100.2M813.5,100.2L801.6,116.9M763.5,116.9L801.6,116.9M801.6,116.9L823.2,134.1M823.2,134.1L811.2,152.0M771.8,152.0L811.2,152.0M811.2,152.0L833.6,170.3M833.6,170.3L821.3,189.4M780.6,189.4L821.3,189.4M821.3,189.4L844.7,209.0M844.7,209.0L832.2,229.4M790.0,229.4L832.2,229.4M832.2,229.4L856.6,250.5M856.6,250.5L843.9,272.4M800.2,272.4L843.9,272.4M843.9,272.4L869.4,295.1M869.4,295.1L856.4,318.6M811.1,318.6L856.4,318.6M856.4,318.6L883.2,343.0M883.2,343.0L870.0,368.5M822.8,368.5L870.0,368.5M870.0,368.5L898.1,394.9M898.1,394.9L884.6,422.4M835.6,422.4L884.6,422.4M884.6,422.4L914.2,451.0M914.2,451.0L900.5,480.9M849.4,480.9L900.5,480.9M900.5,480.9L931.8,512.1M931.8,512.1L917.9,544.7M864.4,544.7L917.9,544.7M917.9,544.7L950.9,578.7M950.9,578.7L936.8,614.3M880.9,614.3L936.8,614.3M936.8,614.3L971.9,651.7M971.9,651.7L957.6,690.9M898.9,690.9L957.6,690.9M957.6,690.9L994.9,732.0M994.9,732.0L980.5,775.2M813.3,-16.6L832.3,-3.5M832.3,-3.5L821.9,10.1M787.6,10.1L821.9,10.1M821.9,10.1L841.6,24.0M841.6,24.0L831.0,38.3M795.7,38.3L831.0,38.3M831.0,38.3L851.4,53.1M851.4,53.1L840.7,68.3M804.3,68.3L840.7,68.3M840.7,68.3L861.9,84.0M861.9,84.0L851.0,100.2M813.5,100.2L851.0,100.2M851.0,100.2L873.0,116.9M873.0,116.9L862.0,134.1M823.2,134.1L862.0,134.1M862.0,134.1L884.9,152.0M884.9,152.0L873.7,170.3M833.6,170.3L873.7,170.3M873.7,170.3L897.6,189.4M897.6,189.4L886.2,209.0M844.7,209.0L886.2,209.0M886.2,209.0L911.1,229.4M911.1,229.4L899.6,250.5M856.6,250.5L899.6,250.5M899.6,250.5L925.7,272.4M925.7,272.4L914.0,295.1M869.4,295.1L914.0,295.1M914.0,295.1L941.3,318.6M941.3,318.6L929.5,343.0M883.2,343.0L929.5,343.0M929.5,343.0L958.2,368.5M958.2,368.5L946.2,394.9M898.1,394.9L946.2,394.9M946.2,394.9L976.5,422.4M976.5,422.4L964.3,451.0M914.2,451.0L964.3,451.0M964.3,451.0L996.3,480.9M996.3,480.9L984.1,512.1M931.8,512.1L984.1,512.1M984.1,512.1L1017.9,544.7M1017.9,544.7L1005.6,578.7M950.9,578.7L1005.6,578.7M1005.6,578.7L1041.5,614.3M1041.5,614.3L1029.1,651.7M971.9,651.7L1029.1,651.7M1029.1,651.7L1067.4,690.9M994.9,732.0L1055.1,732.0M875.7,-16.6L866.1,-3.5M832.3,-3.5L866.1,-3.5M866.1,-3.5L886.1,10.1M886.1,10.1L876.4,24.0M841.6,24.0L876.4,24.0M876.4,24.0L897.2,38.3M897.2,38.3L887.3,53.1M851.4,53.1L887.3,53.1M887.3,53.1L908.9,68.3M908.9,68.3L898.9,84.0M861.9,84.0L898.9,84.0M898.9,84.0L921.3,100.2M921.3,100.2L911.2,116.9M873.0,116.9L911.2,116.9M911.2,116.9L934.5,134.1M934.5,134.1L924.3,152.0M884.9,152.0L924.3,152.0M924.3,152.0L948.6,170.3M948.6,170.3L938.3,189.4M897.6,189.4L938.3,189.4M938.3,189.4L963.7,209.0M963.7,209.0L953.3,229.4M911.1,229.4L953.3,229.4M953.3,229.4L979.9,250.5M979.9,250.5L969.4,272.4M925.7,272.4L969.4,272.4M969.4,272.4L997.3,295.1M997.3,295.1L986.7,318.6M941.3,318.6L986.7,318.6M986.7,318.6L1016.0,343.0M1016.0,343.0L1005.3,368.5M958.2,368.5L1005.3,368.5M1005.3,368.5L1036.2,394.9M1036.2,394.9L1025.5,422.4M976.5,422.4L1025.5,422.4M1025.5,422.4L1058.1,451.0M996.3,480.9L1047.4,480.9M1017.9,544.7L1071.3,544.7M909.1,-16.6L929.4,-3.5M929.4,-3.5L920.5,10.1M886.1,10.1L920.5,10.1M920.5,10.1L941.6,24.0M941.6,24.0L932.5,38.3M897.2,38.3L932.5,38.3M932.5,38.3L954.4,53.1M954.4,53.1L945.3,68.3M908.9,68.3L945.3,68.3M945.3,68.3L968.0,84.0M968.0,84.0L958.8,100.2M921.3,100.2L958.8,100.2M958.8,100.2L982.6,116.9M982.6,116.9L973.3,134.1M934.5,134.1L973.3,134.1M973.3,134.1L998.0,152.0M998.0,152.0L988.7,170.3M948.6,170.3L988.7,170.3M988.7,170.3L1014.5,189.4M1014.5,189.4L1005.2,209.0M963.7,209.0L1005.2,209.0M1005.2,209.0L1032.2,229.4M1032.2,229.4L1022.8,250.5M979.9,250.5L1022.8,250.5M1022.8,250.5L1051.2,272.4M997.3,295.1L1041.8,295.1M1016.0,343.0L1062.2,343.0M971.5,-16.6L963.3,-3.5M929.4,-3.5L963.3,-3.5M963.3,-3.5L984.7,10.1M984.7,10.1L976.4,24.0M941.6,24.0L976.4,24.0M976.4,24.0L998.6,38.3M998.6,38.3L990.3,53.1M954.4,53.1L990.3,53.1M990.3,53.1L1013.4,68.3M1013.4,68.3L1005.0,84.0M968.0,84.0L1005.0,84.0M1005.0,84.0L1029.1,100.2M1029.1,100.2L1020.7,116.9M982.6,116.9L1020.7,116.9M1020.7,116.9L1045.8,134.1M998.0,152.0L1037.4,152.0M1014.5,189.4L1055.3,189.4M1004.9,-16.6L1026.6,-3.5M1026.6,-3.5L1019.0,10.1M984.7,10.1L1019.0,10.1M1019.0,10.1L1041.5,24.0M998.6,38.3L1034.0,38.3M1013.4,68.3L1049.8,68.3M1029.1,100.2L1066.6,100.2M1026.6,-3.5L1060.4,-3.5" fill="none" stroke="#000" stroke-opacity="0.12" stroke-width="1"/>
<polygon fill="#4b5a7a" points="0,39.4 18.3,39.4 32,55 58,58 72.6,68.4 55.3,78.75 8.9,78.75 0,68.4"/>
<polygon fill="url(#gGreen)" points="108.1,124.4 85.7,141 93.5,154.7 70,177.1 78.8,194.7 55.4,215.2 65.2,232.8 120,232.8 120,124"/>
<g clip-path="url(#c_green)"><path fill-rule="evenodd" transform="translate(0.5,3)" fill="#17302b" fill-opacity="1" d="M-50,-50H1100V850H-50Z M108.1,124.4 85.7,141 93.5,154.7 70,177.1 78.8,194.7 55.4,215.2 65.2,232.8 120,232.8 120,124Z"/></g>
<polygon fill="#4a5a7c" points="18.75,296 48.4,273 90.6,273 103,295 73.4,318.75 31.25,318.75"/>
<polygon fill="#3e6d8b" points="18.2,482 50.8,451.6 100.3,451.6 118,482 83.3,512 31.25,512"/>
<polygon fill="url(#gTeal)" points="0,557.5 8.75,578.75 63.75,578.75 102.5,545 300,545 300,638.75 143.75,638.75 151.25,651.25 207.5,651.25 216.25,638.75 308.5,638.75 314.75,652 371,652 394.75,691.25 363.5,732 0,732"/>
<path clip-path="url(#c_tealcluster)" d="M13.4,-16.6L-8.4,-3.5M-8.4,-3.5L-0.9,10.1M-0.9,10.1L-23.5,24.0M46.8,-16.6L54.9,-3.5M54.9,-3.5L33.4,10.1M-0.9,10.1L33.4,10.1M33.4,10.1L41.7,24.0M41.7,24.0L19.4,38.3M-16.0,38.3L19.4,38.3M19.4,38.3L27.6,53.1M27.6,53.1L4.4,68.3M-32.0,68.3L4.4,68.3M4.4,68.3L12.7,84.0M12.7,84.0L-11.5,100.2M-11.5,100.2L-3.2,116.9M-3.2,116.9L-28.4,134.1M109.2,-16.6L88.8,-3.5M54.9,-3.5L88.8,-3.5M88.8,-3.5L97.7,10.1M97.7,10.1L76.5,24.0M41.7,24.0L76.5,24.0M76.5,24.0L85.5,38.3M85.5,38.3L63.5,53.1M27.6,53.1L63.5,53.1M63.5,53.1L72.5,68.3M72.5,68.3L49.7,84.0M12.7,84.0L49.7,84.0M49.7,84.0L58.8,100.2M58.8,100.2L35.0,116.9M-3.2,116.9L35.0,116.9M35.0,116.9L44.1,134.1M44.1,134.1L19.3,152.0M-20.1,152.0L19.3,152.0M19.3,152.0L28.5,170.3M28.5,170.3L2.6,189.4M-38.2,189.4L2.6,189.4M2.6,189.4L11.8,209.0M11.8,209.0L-15.3,229.4M142.6,-16.6L152.1,-3.5M152.1,-3.5L132.0,10.1M97.7,10.1L132.0,10.1M132.0,10.1L141.7,24.0M141.7,24.0L120.8,38.3M85.5,38.3L120.8,38.3M120.8,38.3L130.6,53.1M130.6,53.1L108.9,68.3M72.5,68.3L108.9,68.3M108.9,68.3L118.8,84.0M118.8,84.0L96.3,100.2M58.8,100.2L96.3,100.2M96.3,100.2L106.3,116.9M106.3,116.9L82.9,134.1M44.1,134.1L82.9,134.1M82.9,134.1L93.0,152.0M93.0,152.0L68.6,170.3M28.5,170.3L68.6,170.3M68.6,170.3L78.8,189.4M78.8,189.4L53.3,209.0M11.8,209.0L53.3,209.0M53.3,209.0L63.6,229.4M63.6,229.4L36.9,250.5M-6.1,250.5L36.9,250.5M36.9,250.5L47.2,272.4M47.2,272.4L19.2,295.1M-25.3,295.1L19.2,295.1M19.2,295.1L29.7,318.6M29.7,318.6L0.2,343.0M-46.0,343.0L0.2,343.0M0.2,343.0L10.7,368.5M10.7,368.5L-20.3,394.9M205.0,-16.6L185.9,-3.5M152.1,-3.5L185.9,-3.5M185.9,-3.5L196.2,10.1M196.2,10.1L176.5,24.0M141.7,24.0L176.5,24.0M176.5,24.0L186.9,38.3M186.9,38.3L166.5,53.1M130.6,53.1L166.5,53.1M166.5,53.1L177.1,68.3M177.1,68.3L155.8,84.0M118.8,84.0L155.8,84.0M155.8,84.0L166.6,100.2M166.6,100.2L144.5,116.9M106.3,116.9L144.5,116.9M144.5,116.9L155.4,134.1M155.4,134.1L132.4,152.0M93.0,152.0L132.4,152.0M132.4,152.0L143.5,170.3M143.5,170.3L119.5,189.4M78.8,189.4L119.5,189.4M119.5,189.4L130.8,209.0M130.8,209.0L105.7,229.4M63.6,229.4L105.7,229.4M105.7,229.4L117.2,250.5M117.2,250.5L91.0,272.4M47.2,272.4L91.0,272.4M91.0,272.4L102.5,295.1M102.5,295.1L75.0,318.6M29.7,318.6L75.0,318.6M75.0,318.6L86.8,343.0M86.8,343.0L57.9,368.5M10.7,368.5L57.9,368.5M57.9,368.5L69.7,394.9M69.7,394.9L39.3,422.4M-9.8,422.4L39.3,422.4M39.3,422.4L51.3,451.0M51.3,451.0L19.1,480.9M-32.0,480.9L19.1,480.9M19.1,480.9L31.2,512.1M31.2,512.1L-2.8,544.7M-56.2,544.7L-2.8,544.7M-2.8,544.7L9.3,578.7M9.3,578.7L-26.8,614.3M238.4,-16.6L249.3,-3.5M249.3,-3.5L230.6,10.1M196.2,10.1L230.6,10.1M230.6,10.1L241.6,24.0M241.6,24.0L222.3,38.3M186.9,38.3L222.3,38.3M222.3,38.3L233.6,53.1M233.6,53.1L213.5,68.3M177.1,68.3L213.5,68.3M213.5,68.3L225.0,84.0M225.0,84.0L204.1,100.2M166.6,100.2L204.1,100.2M204.1,100.2L215.9,116.9M215.9,116.9L194.2,134.1M155.4,134.1L194.2,134.1M194.2,134.1L206.2,152.0M206.2,152.0L183.6,170.3M143.5,170.3L183.6,170.3M183.6,170.3L195.8,189.4M195.8,189.4L172.3,209.0M130.8,209.0L172.3,209.0M172.3,209.0L184.7,229.4M184.7,229.4L160.1,250.5M117.2,250.5L160.1,250.5M160.1,250.5L172.7,272.4M172.7,272.4L147.1,295.1M102.5,295.1L147.1,295.1M147.1,295.1L159.9,318.6M159.9,318.6L133.0,343.0M86.8,343.0L133.0,343.0M133.0,343.0L146.1,368.5M146.1,368.5L117.8,394.9M69.7,394.9L117.8,394.9M117.8,394.9L131.1,422.4M131.1,422.4L101.3,451.0M51.3,451.0L101.3,451.0M101.3,451.0L114.9,480.9M114.9,480.9L83.5,512.1M31.2,512.1L83.5,512.1M83.5,512.1L97.2,544.7M97.2,544.7L63.9,578.7M9.3,578.7L63.9,578.7M63.9,578.7L77.9,614.3M77.9,614.3L42.6,651.7M-14.7,651.7L42.6,651.7M42.6,651.7L56.6,690.9M56.6,690.9L19.0,732.0M-41.1,732.0L19.0,732.0M19.0,732.0L33.2,775.2M300.8,-16.6L283.1,-3.5M249.3,-3.5L283.1,-3.5M283.1,-3.5L294.8,10.1M294.8,10.1L276.5,24.0M241.6,24.0L276.5,24.0M276.5,24.0L288.4,38.3M288.4,38.3L269.4,53.1M233.6,53.1L269.4,53.1M269.4,53.1L281.6,68.3M281.6,68.3L262.0,84.0M225.0,84.0L262.0,84.0M262.0,84.0L274.4,100.2M274.4,100.2L254.0,116.9M215.9,116.9L254.0,116.9M254.0,116.9L266.7,134.1M266.7,134.1L245.5,152.0M206.2,152.0L245.5,152.0M245.5,152.0L258.6,170.3M258.6,170.3L236.5,189.4M195.8,189.4L236.5,189.4M236.5,189.4L249.8,209.0M249.8,209.0L226.8,229.4M184.7,229.4L226.8,229.4M226.8,229.4L240.4,250.5M240.4,250.5L216.4,272.4M172.7,272.4L216.4,272.4M216.4,272.4L230.4,295.1M230.4,295.1L205.3,318.6M159.9,318.6L205.3,318.6M205.3,318.6L219.5,343.0M219.5,343.0L193.2,368.5M146.1,368.5L193.2,368.5M193.2,368.5L207.8,394.9M207.8,394.9L180.2,422.4M131.1,422.4L180.2,422.4M180.2,422.4L195.1,451.0M195.1,451.0L166.0,480.9M114.9,480.9L166.0,480.9M166.0,480.9L181.3,512.1M181.3,512.1L150.6,544.7M97.2,544.7L150.6,544.7M150.6,544.7L166.2,578.7M166.2,578.7L133.8,614.3M77.9,614.3L133.8,614.3M133.8,614.3L149.7,651.7M149.7,651.7L115.3,690.9M56.6,690.9L115.3,690.9M115.3,690.9L131.6,732.0M131.6,732.0L94.9,775.2M334.2,-16.6L346.4,-3.5M346.4,-3.5L329.1,10.1M294.8,10.1L329.1,10.1M329.1,10.1L341.6,24.0M341.6,24.0L323.7,38.3M288.4,38.3L323.7,38.3M323.7,38.3L336.5,53.1M336.5,53.1L318.0,68.3M281.6,68.3L318.0,68.3M318.0,68.3L331.1,84.0M331.1,84.0L312.0,100.2M274.4,100.2L312.0,100.2M312.0,100.2L325.4,116.9M325.4,116.9L305.5,134.1M266.7,134.1L305.5,134.1M305.5,134.1L319.3,152.0M319.3,152.0L298.6,170.3M258.6,170.3L298.6,170.3M298.6,170.3L312.7,189.4M312.7,189.4L291.2,209.0M249.8,209.0L291.2,209.0M291.2,209.0L305.7,229.4M305.7,229.4L283.3,250.5M240.4,250.5L283.3,250.5M283.3,250.5L298.2,272.4M298.2,272.4L274.9,295.1M230.4,295.1L274.9,295.1M274.9,295.1L290.1,318.6M290.1,318.6L265.7,343.0M219.5,343.0L265.7,343.0M265.7,343.0L281.4,368.5M281.4,368.5L255.9,394.9M207.8,394.9L255.9,394.9M255.9,394.9L272.0,422.4M272.0,422.4L245.2,451.0M195.1,451.0L245.2,451.0M245.2,451.0L261.8,480.9M261.8,480.9L233.6,512.1M181.3,512.1L233.6,512.1M233.6,512.1L250.6,544.7M250.6,544.7L220.9,578.7M166.2,578.7L220.9,578.7M220.9,578.7L238.5,614.3M238.5,614.3L207.0,651.7M149.7,651.7L207.0,651.7M207.0,651.7L225.1,690.9M225.1,690.9L191.7,732.0M131.6,732.0L191.7,732.0M191.7,732.0L210.3,775.2M396.6,-16.6L380.3,-3.5M346.4,-3.5L380.3,-3.5M380.3,-3.5L393.3,10.1M393.3,10.1L376.5,24.0M341.6,24.0L376.5,24.0M376.5,24.0L389.9,38.3M389.9,38.3L372.4,53.1M336.5,53.1L372.4,53.1M372.4,53.1L386.2,68.3M386.2,68.3L368.1,84.0M331.1,84.0L368.1,84.0M368.1,84.0L382.2,100.2M382.2,100.2L363.5,116.9M325.4,116.9L363.5,116.9M363.5,116.9L378.0,134.1M378.0,134.1L358.7,152.0M319.3,152.0L358.7,152.0M358.7,152.0L373.6,170.3M373.6,170.3L353.5,189.4M312.7,189.4L353.5,189.4M353.5,189.4L368.8,209.0M368.8,209.0L347.9,229.4M305.7,229.4L347.9,229.4M347.9,229.4L363.7,250.5M363.7,250.5L341.9,272.4M298.2,272.4L341.9,272.4M341.9,272.4L358.2,295.1M358.2,295.1L335.5,318.6M290.1,318.6L335.5,318.6M335.5,318.6L352.2,343.0M352.2,343.0L328.6,368.5M281.4,368.5L328.6,368.5M328.6,368.5L345.9,394.9M345.9,394.9L321.1,422.4M272.0,422.4L321.1,422.4M321.1,422.4L338.9,451.0M338.9,451.0L312.9,480.9M261.8,480.9L312.9,480.9M312.9,480.9L331.4,512.1M331.4,512.1L304.1,544.7M250.6,544.7L304.1,544.7M304.1,544.7L323.2,578.7M323.2,578.7L294.4,614.3M238.5,614.3L294.4,614.3M294.4,614.3L314.2,651.7M314.2,651.7L283.8,690.9M225.1,690.9L283.8,690.9M283.8,690.9L304.2,732.0M304.2,732.0L272.0,775.2M430.0,-16.6L443.6,-3.5M443.6,-3.5L427.7,10.1M393.3,10.1L427.7,10.1M427.7,10.1L441.6,24.0M441.6,24.0L425.2,38.3M389.9,38.3L425.2,38.3M425.2,38.3L439.5,53.1M439.5,53.1L422.6,68.3M386.2,68.3L422.6,68.3M422.6,68.3L437.3,84.0M437.3,84.0L419.8,100.2M382.2,100.2L419.8,100.2M419.8,100.2L434.9,116.9M434.9,116.9L416.8,134.1M378.0,134.1L416.8,134.1M416.8,134.1L432.4,152.0M432.4,152.0L413.6,170.3M373.6,170.3L413.6,170.3M413.6,170.3L429.7,189.4M429.7,189.4L410.2,209.0M368.8,209.0L410.2,209.0M410.2,209.0L426.8,229.4M426.8,229.4L406.6,250.5M363.7,250.5L406.6,250.5M406.6,250.5L423.7,272.4M423.7,272.4L402.7,295.1M358.2,295.1L402.7,295.1M402.7,295.1L420.4,318.6M420.4,318.6L398.5,343.0M352.2,343.0L398.5,343.0M398.5,343.0L416.8,368.5M416.8,368.5L393.9,394.9M345.9,394.9L393.9,394.9M393.9,394.9L412.9,422.4M412.9,422.4L389.0,451.0M338.9,451.0L389.0,451.0M389.0,451.0L408.7,480.9M408.7,480.9L383.7,512.1M331.4,512.1L383.7,512.1M383.7,512.1L404.1,544.7M404.1,544.7L377.8,578.7M323.2,578.7L377.8,578.7M377.8,578.7L399.1,614.3M399.1,614.3L371.4,651.7M314.2,651.7L371.4,651.7M371.4,651.7L393.5,690.9M393.5,690.9L364.4,732.0M304.2,732.0L364.4,732.0M364.4,732.0L387.5,775.2M492.5,-16.6L477.4,-3.5M443.6,-3.5L477.4,-3.5M477.4,-3.5L491.9,10.1M491.9,10.1L476.4,24.0M441.6,24.0L476.4,24.0M476.4,24.0L491.3,38.3M491.3,38.3L475.4,53.1M439.5,53.1L475.4,53.1M475.4,53.1L490.7,68.3M490.7,68.3L474.3,84.0M437.3,84.0L474.3,84.0M474.3,84.0L490.0,100.2M490.0,100.2L473.1,116.9M434.9,116.9L473.1,116.9M473.1,116.9L489.3,134.1M489.3,134.1L471.8,152.0M432.4,152.0L471.8,152.0M471.8,152.0L488.6,170.3M488.6,170.3L470.4,189.4M429.7,189.4L470.4,189.4M470.4,189.4L487.8,209.0M487.8,209.0L469.0,229.4M426.8,229.4L469.0,229.4M469.0,229.4L486.9,250.5M486.9,250.5L467.4,272.4M423.7,272.4L467.4,272.4M467.4,272.4L486.0,295.1M486.0,295.1L465.7,318.6M420.4,318.6L465.7,318.6M465.7,318.6L485.0,343.0M485.0,343.0L463.9,368.5M416.8,368.5L463.9,368.5M463.9,368.5L483.9,394.9M483.9,394.9L462.0,422.4M412.9,422.4L462.0,422.4M462.0,422.4L482.8,451.0M482.8,451.0L459.8,480.9M408.7,480.9L459.8,480.9M459.8,480.9L481.5,512.1M481.5,512.1L457.5,544.7M404.1,544.7L457.5,544.7M457.5,544.7L480.1,578.7M480.1,578.7L455.0,614.3M399.1,614.3L455.0,614.3M455.0,614.3L478.6,651.7M478.6,651.7L452.2,690.9M393.5,690.9L452.2,690.9M452.2,690.9L476.9,732.0M476.9,732.0L449.1,775.2M525.8,-16.6L540.8,-3.5M540.8,-3.5L526.2,10.1M491.9,10.1L526.2,10.1M526.2,10.1L541.6,24.0M541.6,24.0L526.7,38.3M491.3,38.3L526.7,38.3M526.7,38.3L542.5,53.1M542.5,53.1L527.1,68.3M490.7,68.3L527.1,68.3M527.1,68.3L543.4,84.0M543.4,84.0L527.6,100.2M490.0,100.2L527.6,100.2M527.6,100.2L544.5,116.9M544.5,116.9L528.1,134.1M489.3,134.1L528.1,134.1M528.1,134.1L545.5,152.0M545.5,152.0L528.6,170.3M488.6,170.3L528.6,170.3M528.6,170.3L546.7,189.4M546.7,189.4L529.2,209.0M487.8,209.0L529.2,209.0M529.2,209.0L547.9,229.4M547.9,229.4L529.8,250.5M486.9,250.5L529.8,250.5M529.8,250.5L549.2,272.4M549.2,272.4L530.5,295.1M486.0,295.1L530.5,295.1M530.5,295.1L550.6,318.6M550.6,318.6L531.2,343.0M485.0,343.0L531.2,343.0M531.2,343.0L552.1,368.5M552.1,368.5L532.0,394.9M483.9,394.9L532.0,394.9M532.0,394.9L553.8,422.4M553.8,422.4L532.8,451.0M482.8,451.0L532.8,451.0M532.8,451.0L555.6,480.9M555.6,480.9L533.8,512.1M481.5,512.1L533.8,512.1M533.8,512.1L557.5,544.7M557.5,544.7L534.8,578.7M480.1,578.7L534.8,578.7M534.8,578.7L559.7,614.3M559.7,614.3L535.9,651.7M478.6,651.7L535.9,651.7M535.9,651.7L562.0,690.9M562.0,690.9L537.1,732.0M476.9,732.0L537.1,732.0M537.1,732.0L564.6,775.2M588.3,-16.6L574.6,-3.5M540.8,-3.5L574.6,-3.5M574.6,-3.5L590.5,10.1M590.5,10.1L576.4,24.0M541.6,24.0L576.4,24.0M576.4,24.0L592.8,38.3M592.8,38.3L578.4,53.1M542.5,53.1L578.4,53.1M578.4,53.1L595.2,68.3M595.2,68.3L580.4,84.0M543.4,84.0L580.4,84.0M580.4,84.0L597.8,100.2M597.8,100.2L582.6,116.9M544.5,116.9L582.6,116.9M582.6,116.9L600.6,134.1M600.6,134.1L584.9,152.0M545.5,152.0L584.9,152.0M584.9,152.0L603.6,170.3M603.6,170.3L587.4,189.4M546.7,189.4L587.4,189.4M587.4,189.4L606.8,209.0M606.8,209.0L590.1,229.4M547.9,229.4L590.1,229.4M590.1,229.4L610.2,250.5M610.2,250.5L592.9,272.4M549.2,272.4L592.9,272.4M592.9,272.4L613.8,295.1M613.8,295.1L596.0,318.6M550.6,318.6L596.0,318.6M596.0,318.6L617.7,343.0M617.7,343.0L599.3,368.5M552.1,368.5L599.3,368.5M599.3,368.5L622.0,394.9M622.0,394.9L602.9,422.4M553.8,422.4L602.9,422.4M602.9,422.4L626.6,451.0M626.6,451.0L606.7,480.9M555.6,480.9L606.7,480.9M606.7,480.9L631.6,512.1M631.6,512.1L611.0,544.7M557.5,544.7L611.0,544.7M611.0,544.7L637.0,578.7M637.0,578.7L615.6,614.3M559.7,614.3L615.6,614.3M615.6,614.3L643.0,651.7M643.0,651.7L620.7,690.9M562.0,690.9L620.7,690.9M620.7,690.9L649.6,732.0M649.6,732.0L626.3,775.2M621.6,-16.6L637.9,-3.5M637.9,-3.5L624.8,10.1M590.5,10.1L624.8,10.1M624.8,10.1L641.6,24.0M641.6,24.0L628.1,38.3M592.8,38.3L628.1,38.3M628.1,38.3L645.5,53.1M645.5,53.1L631.6,68.3M595.2,68.3L631.6,68.3M631.6,68.3L649.6,84.0M649.6,84.0L635.4,100.2M597.8,100.2L635.4,100.2M635.4,100.2L654.0,116.9M654.0,116.9L639.4,134.1M600.6,134.1L639.4,134.1M639.4,134.1L658.6,152.0M658.6,152.0L643.6,170.3M603.6,170.3L643.6,170.3M643.6,170.3L663.6,189.4M663.6,189.4L648.2,209.0M606.8,209.0L648.2,209.0M648.2,209.0L669.0,229.4M669.0,229.4L653.1,250.5M610.2,250.5L653.1,250.5M653.1,250.5L674.7,272.4M674.7,272.4L658.3,295.1M613.8,295.1L658.3,295.1M658.3,295.1L680.9,318.6M680.9,318.6L664.0,343.0M617.7,343.0L664.0,343.0M664.0,343.0L687.5,368.5M687.5,368.5L670.1,394.9M622.0,394.9L670.1,394.9M670.1,394.9L694.7,422.4M694.7,422.4L676.7,451.0M626.6,451.0L676.7,451.0M676.7,451.0L702.5,480.9M702.5,480.9L683.9,512.1M631.6,512.1L683.9,512.1M683.9,512.1L711.0,544.7M711.0,544.7L691.7,578.7M637.0,578.7L691.7,578.7M691.7,578.7L720.3,614.3M720.3,614.3L700.3,651.7M643.0,651.7L700.3,651.7M700.3,651.7L730.5,690.9M730.5,690.9L709.7,732.0M649.6,732.0L709.7,732.0M709.7,732.0L741.7,775.2M684.1,-16.6L671.8,-3.5M637.9,-3.5L671.8,-3.5M671.8,-3.5L689.0,10.1M689.0,10.1L676.4,24.0M641.6,24.0L676.4,24.0M676.4,24.0L694.2,38.3M694.2,38.3L681.3,53.1M645.5,53.1L681.3,53.1M681.3,53.1L699.8,68.3M699.8,68.3L686.6,84.0M649.6,84.0L686.6,84.0M686.6,84.0L705.7,100.2M705.7,100.2L692.1,116.9M654.0,116.9L692.1,116.9M692.1,116.9L711.9,134.1M711.9,134.1L698.0,152.0M658.6,152.0L698.0,152.0M698.0,152.0L718.6,170.3M718.6,170.3L704.4,189.4M663.6,189.4L704.4,189.4M704.4,189.4L725.7,209.0M725.7,209.0L711.1,229.4M669.0,229.4L711.1,229.4M711.1,229.4L733.4,250.5M733.4,250.5L718.4,272.4M674.7,272.4L718.4,272.4M718.4,272.4L741.6,295.1M741.6,295.1L726.2,318.6M680.9,318.6L726.2,318.6M726.2,318.6L750.5,343.0M750.5,343.0L734.6,368.5M687.5,368.5L734.6,368.5M734.6,368.5L760.0,394.9M760.0,394.9L743.7,422.4M694.7,422.4L743.7,422.4M743.7,422.4L770.4,451.0M770.4,451.0L753.6,480.9M702.5,480.9L753.6,480.9M753.6,480.9L781.7,512.1M781.7,512.1L764.4,544.7M711.0,544.7L764.4,544.7M764.4,544.7L794.0,578.7M794.0,578.7L776.2,614.3M720.3,614.3L776.2,614.3M776.2,614.3L807.5,651.7M807.5,651.7L789.1,690.9M730.5,690.9L789.1,690.9M789.1,690.9L822.3,732.0M822.3,732.0L803.4,775.2M717.5,-16.6L735.1,-3.5M735.1,-3.5L723.3,10.1M689.0,10.1L723.3,10.1M723.3,10.1L741.6,24.0M741.6,24.0L729.6,38.3M694.2,38.3L729.6,38.3M729.6,38.3L748.5,53.1M748.5,53.1L736.2,68.3M699.8,68.3L736.2,68.3M736.2,68.3L755.7,84.0M755.7,84.0L743.2,100.2M705.7,100.2L743.2,100.2M743.2,100.2L763.5,116.9M763.5,116.9L750.7,134.1M711.9,134.1L750.7,134.1M750.7,134.1L771.8,152.0M771.8,152.0L758.7,170.3M718.6,170.3L758.7,170.3M758.7,170.3L780.6,189.4M780.6,189.4L767.2,209.0M725.7,209.0L767.2,209.0M767.2,209.0L790.0,229.4M790.0,229.4L776.3,250.5M733.4,250.5L776.3,250.5M776.3,250.5L800.2,272.4M800.2,272.4L786.1,295.1M741.6,295.1L786.1,295.1M786.1,295.1L811.1,318.6M811.1,318.6L796.7,343.0M750.5,343.0L796.7,343.0M796.7,343.0L822.8,368.5M822.8,368.5L808.1,394.9M760.0,394.9L808.1,394.9M808.1,394.9L835.6,422.4M835.6,422.4L820.5,451.0M770.4,451.0L820.5,451.0M820.5,451.0L849.4,480.9M849.4,480.9L834.0,512.1M781.7,512.1L834.0,512.1M834.0,512.1L864.4,544.7M864.4,544.7L848.6,578.7M794.0,578.7L848.6,578.7M848.6,578.7L880.9,614.3M880.9,614.3L864.7,651.7M807.5,651.7L864.7,651.7M864.7,651.7L898.9,690.9M898.9,690.9L882.4,732.0M822.3,732.0L882.4,732.0M882.4,732.0L918.8,775.2M779.9,-16.6L768.9,-3.5M735.1,-3.5L768.9,-3.5M768.9,-3.5L787.6,10.1M787.6,10.1L776.4,24.0M741.6,24.0L776.4,24.0M776.4,24.0L795.7,38.3M795.7,38.3L784.3,53.1M748.5,53.1L784.3,53.1M784.3,53.1L804.3,68.3M804.3,68.3L792.7,84.0M755.7,84.0L792.7,84.0M792.7,84.0L813.5,100.2M813.5,100.2L801.6,116.9M763.5,116.9L801.6,116.9M801.6,116.9L823.2,134.1M823.2,134.1L811.2,152.0M771.8,152.0L811.2,152.0M811.2,152.0L833.6,170.3M833.6,170.3L821.3,189.4M780.6,189.4L821.3,189.4M821.3,189.4L844.7,209.0M844.7,209.0L832.2,229.4M790.0,229.4L832.2,229.4M832.2,229.4L856.6,250.5M856.6,250.5L843.9,272.4M800.2,272.4L843.9,272.4M843.9,272.4L869.4,295.1M869.4,295.1L856.4,318.6M811.1,318.6L856.4,318.6M856.4,318.6L883.2,343.0M883.2,343.0L870.0,368.5M822.8,368.5L870.0,368.5M870.0,368.5L898.1,394.9M898.1,394.9L884.6,422.4M835.6,422.4L884.6,422.4M884.6,422.4L914.2,451.0M914.2,451.0L900.5,480.9M849.4,480.9L900.5,480.9M900.5,480.9L931.8,512.1M931.8,512.1L917.9,544.7M864.4,544.7L917.9,544.7M917.9,544.7L950.9,578.7M950.9,578.7L936.8,614.3M880.9,614.3L936.8,614.3M936.8,614.3L971.9,651.7M971.9,651.7L957.6,690.9M898.9,690.9L957.6,690.9M957.6,690.9L994.9,732.0M994.9,732.0L980.5,775.2M813.3,-16.6L832.3,-3.5M832.3,-3.5L821.9,10.1M787.6,10.1L821.9,10.1M821.9,10.1L841.6,24.0M841.6,24.0L831.0,38.3M795.7,38.3L831.0,38.3M831.0,38.3L851.4,53.1M851.4,53.1L840.7,68.3M804.3,68.3L840.7,68.3M840.7,68.3L861.9,84.0M861.9,84.0L851.0,100.2M813.5,100.2L851.0,100.2M851.0,100.2L873.0,116.9M873.0,116.9L862.0,134.1M823.2,134.1L862.0,134.1M862.0,134.1L884.9,152.0M884.9,152.0L873.7,170.3M833.6,170.3L873.7,170.3M873.7,170.3L897.6,189.4M897.6,189.4L886.2,209.0M844.7,209.0L886.2,209.0M886.2,209.0L911.1,229.4M911.1,229.4L899.6,250.5M856.6,250.5L899.6,250.5M899.6,250.5L925.7,272.4M925.7,272.4L914.0,295.1M869.4,295.1L914.0,295.1M914.0,295.1L941.3,318.6M941.3,318.6L929.5,343.0M883.2,343.0L929.5,343.0M929.5,343.0L958.2,368.5M958.2,368.5L946.2,394.9M898.1,394.9L946.2,394.9M946.2,394.9L976.5,422.4M976.5,422.4L964.3,451.0M914.2,451.0L964.3,451.0M964.3,451.0L996.3,480.9M996.3,480.9L984.1,512.1M931.8,512.1L984.1,512.1M984.1,512.1L1017.9,544.7M1017.9,544.7L1005.6,578.7M950.9,578.7L1005.6,578.7M1005.6,578.7L1041.5,614.3M1041.5,614.3L1029.1,651.7M971.9,651.7L1029.1,651.7M1029.1,651.7L1067.4,690.9M994.9,732.0L1055.1,732.0M875.7,-16.6L866.1,-3.5M832.3,-3.5L866.1,-3.5M866.1,-3.5L886.1,10.1M886.1,10.1L876.4,24.0M841.6,24.0L876.4,24.0M876.4,24.0L897.2,38.3M897.2,38.3L887.3,53.1M851.4,53.1L887.3,53.1M887.3,53.1L908.9,68.3M908.9,68.3L898.9,84.0M861.9,84.0L898.9,84.0M898.9,84.0L921.3,100.2M921.3,100.2L911.2,116.9M873.0,116.9L911.2,116.9M911.2,116.9L934.5,134.1M934.5,134.1L924.3,152.0M884.9,152.0L924.3,152.0M924.3,152.0L948.6,170.3M948.6,170.3L938.3,189.4M897.6,189.4L938.3,189.4M938.3,189.4L963.7,209.0M963.7,209.0L953.3,229.4M911.1,229.4L953.3,229.4M953.3,229.4L979.9,250.5M979.9,250.5L969.4,272.4M925.7,272.4L969.4,272.4M969.4,272.4L997.3,295.1M997.3,295.1L986.7,318.6M941.3,318.6L986.7,318.6M986.7,318.6L1016.0,343.0M1016.0,343.0L1005.3,368.5M958.2,368.5L1005.3,368.5M1005.3,368.5L1036.2,394.9M1036.2,394.9L1025.5,422.4M976.5,422.4L1025.5,422.4M1025.5,422.4L1058.1,451.0M996.3,480.9L1047.4,480.9M1017.9,544.7L1071.3,544.7M909.1,-16.6L929.4,-3.5M929.4,-3.5L920.5,10.1M886.1,10.1L920.5,10.1M920.5,10.1L941.6,24.0M941.6,24.0L932.5,38.3M897.2,38.3L932.5,38.3M932.5,38.3L954.4,53.1M954.4,53.1L945.3,68.3M908.9,68.3L945.3,68.3M945.3,68.3L968.0,84.0M968.0,84.0L958.8,100.2M921.3,100.2L958.8,100.2M958.8,100.2L982.6,116.9M982.6,116.9L973.3,134.1M934.5,134.1L973.3,134.1M973.3,134.1L998.0,152.0M998.0,152.0L988.7,170.3M948.6,170.3L988.7,170.3M988.7,170.3L1014.5,189.4M1014.5,189.4L1005.2,209.0M963.7,209.0L1005.2,209.0M1005.2,209.0L1032.2,229.4M1032.2,229.4L1022.8,250.5M979.9,250.5L1022.8,250.5M1022.8,250.5L1051.2,272.4M997.3,295.1L1041.8,295.1M1016.0,343.0L1062.2,343.0M971.5,-16.6L963.3,-3.5M929.4,-3.5L963.3,-3.5M963.3,-3.5L984.7,10.1M984.7,10.1L976.4,24.0M941.6,24.0L976.4,24.0M976.4,24.0L998.6,38.3M998.6,38.3L990.3,53.1M954.4,53.1L990.3,53.1M990.3,53.1L1013.4,68.3M1013.4,68.3L1005.0,84.0M968.0,84.0L1005.0,84.0M1005.0,84.0L1029.1,100.2M1029.1,100.2L1020.7,116.9M982.6,116.9L1020.7,116.9M1020.7,116.9L1045.8,134.1M998.0,152.0L1037.4,152.0M1014.5,189.4L1055.3,189.4M1004.9,-16.6L1026.6,-3.5M1026.6,-3.5L1019.0,10.1M984.7,10.1L1019.0,10.1M1019.0,10.1L1041.5,24.0M998.6,38.3L1034.0,38.3M1013.4,68.3L1049.8,68.3M1029.1,100.2L1066.6,100.2M1026.6,-3.5L1060.4,-3.5" fill="none" stroke="#000" stroke-opacity="0.12" stroke-width="1"/>
<polygon fill="#477b80" points="643.25,652 699.5,652 731.5,691.25 709.5,732 649.5,732 619,691.25"/>
<polygon fill="#4a5a80" points="860,323.9 883.85,344.2 870.3,367.9 860,367.9"/>
<path clip-path="url(#c_slateright)" d="M13.4,-16.6L-8.4,-3.5M-8.4,-3.5L-0.9,10.1M-0.9,10.1L-23.5,24.0M46.8,-16.6L54.9,-3.5M54.9,-3.5L33.4,10.1M-0.9,10.1L33.4,10.1M33.4,10.1L41.7,24.0M41.7,24.0L19.4,38.3M-16.0,38.3L19.4,38.3M19.4,38.3L27.6,53.1M27.6,53.1L4.4,68.3M-32.0,68.3L4.4,68.3M4.4,68.3L12.7,84.0M12.7,84.0L-11.5,100.2M-11.5,100.2L-3.2,116.9M-3.2,116.9L-28.4,134.1M109.2,-16.6L88.8,-3.5M54.9,-3.5L88.8,-3.5M88.8,-3.5L97.7,10.1M97.7,10.1L76.5,24.0M41.7,24.0L76.5,24.0M76.5,24.0L85.5,38.3M85.5,38.3L63.5,53.1M27.6,53.1L63.5,53.1M63.5,53.1L72.5,68.3M72.5,68.3L49.7,84.0M12.7,84.0L49.7,84.0M49.7,84.0L58.8,100.2M58.8,100.2L35.0,116.9M-3.2,116.9L35.0,116.9M35.0,116.9L44.1,134.1M44.1,134.1L19.3,152.0M-20.1,152.0L19.3,152.0M19.3,152.0L28.5,170.3M28.5,170.3L2.6,189.4M-38.2,189.4L2.6,189.4M2.6,189.4L11.8,209.0M11.8,209.0L-15.3,229.4M142.6,-16.6L152.1,-3.5M152.1,-3.5L132.0,10.1M97.7,10.1L132.0,10.1M132.0,10.1L141.7,24.0M141.7,24.0L120.8,38.3M85.5,38.3L120.8,38.3M120.8,38.3L130.6,53.1M130.6,53.1L108.9,68.3M72.5,68.3L108.9,68.3M108.9,68.3L118.8,84.0M118.8,84.0L96.3,100.2M58.8,100.2L96.3,100.2M96.3,100.2L106.3,116.9M106.3,116.9L82.9,134.1M44.1,134.1L82.9,134.1M82.9,134.1L93.0,152.0M93.0,152.0L68.6,170.3M28.5,170.3L68.6,170.3M68.6,170.3L78.8,189.4M78.8,189.4L53.3,209.0M11.8,209.0L53.3,209.0M53.3,209.0L63.6,229.4M63.6,229.4L36.9,250.5M-6.1,250.5L36.9,250.5M36.9,250.5L47.2,272.4M47.2,272.4L19.2,295.1M-25.3,295.1L19.2,295.1M19.2,295.1L29.7,318.6M29.7,318.6L0.2,343.0M-46.0,343.0L0.2,343.0M0.2,343.0L10.7,368.5M10.7,368.5L-20.3,394.9M205.0,-16.6L185.9,-3.5M152.1,-3.5L185.9,-3.5M185.9,-3.5L196.2,10.1M196.2,10.1L176.5,24.0M141.7,24.0L176.5,24.0M176.5,24.0L186.9,38.3M186.9,38.3L166.5,53.1M130.6,53.1L166.5,53.1M166.5,53.1L177.1,68.3M177.1,68.3L155.8,84.0M118.8,84.0L155.8,84.0M155.8,84.0L166.6,100.2M166.6,100.2L144.5,116.9M106.3,116.9L144.5,116.9M144.5,116.9L155.4,134.1M155.4,134.1L132.4,152.0M93.0,152.0L132.4,152.0M132.4,152.0L143.5,170.3M143.5,170.3L119.5,189.4M78.8,189.4L119.5,189.4M119.5,189.4L130.8,209.0M130.8,209.0L105.7,229.4M63.6,229.4L105.7,229.4M105.7,229.4L117.2,250.5M117.2,250.5L91.0,272.4M47.2,272.4L91.0,272.4M91.0,272.4L102.5,295.1M102.5,295.1L75.0,318.6M29.7,318.6L75.0,318.6M75.0,318.6L86.8,343.0M86.8,343.0L57.9,368.5M10.7,368.5L57.9,368.5M57.9,368.5L69.7,394.9M69.7,394.9L39.3,422.4M-9.8,422.4L39.3,422.4M39.3,422.4L51.3,451.0M51.3,451.0L19.1,480.9M-32.0,480.9L19.1,480.9M19.1,480.9L31.2,512.1M31.2,512.1L-2.8,544.7M-56.2,544.7L-2.8,544.7M-2.8,544.7L9.3,578.7M9.3,578.7L-26.8,614.3M238.4,-16.6L249.3,-3.5M249.3,-3.5L230.6,10.1M196.2,10.1L230.6,10.1M230.6,10.1L241.6,24.0M241.6,24.0L222.3,38.3M186.9,38.3L222.3,38.3M222.3,38.3L233.6,53.1M233.6,53.1L213.5,68.3M177.1,68.3L213.5,68.3M213.5,68.3L225.0,84.0M225.0,84.0L204.1,100.2M166.6,100.2L204.1,100.2M204.1,100.2L215.9,116.9M215.9,116.9L194.2,134.1M155.4,134.1L194.2,134.1M194.2,134.1L206.2,152.0M206.2,152.0L183.6,170.3M143.5,170.3L183.6,170.3M183.6,170.3L195.8,189.4M195.8,189.4L172.3,209.0M130.8,209.0L172.3,209.0M172.3,209.0L184.7,229.4M184.7,229.4L160.1,250.5M117.2,250.5L160.1,250.5M160.1,250.5L172.7,272.4M172.7,272.4L147.1,295.1M102.5,295.1L147.1,295.1M147.1,295.1L159.9,318.6M159.9,318.6L133.0,343.0M86.8,343.0L133.0,343.0M133.0,343.0L146.1,368.5M146.1,368.5L117.8,394.9M69.7,394.9L117.8,394.9M117.8,394.9L131.1,422.4M131.1,422.4L101.3,451.0M51.3,451.0L101.3,451.0M101.3,451.0L114.9,480.9M114.9,480.9L83.5,512.1M31.2,512.1L83.5,512.1M83.5,512.1L97.2,544.7M97.2,544.7L63.9,578.7M9.3,578.7L63.9,578.7M63.9,578.7L77.9,614.3M77.9,614.3L42.6,651.7M-14.7,651.7L42.6,651.7M42.6,651.7L56.6,690.9M56.6,690.9L19.0,732.0M-41.1,732.0L19.0,732.0M19.0,732.0L33.2,775.2M300.8,-16.6L283.1,-3.5M249.3,-3.5L283.1,-3.5M283.1,-3.5L294.8,10.1M294.8,10.1L276.5,24.0M241.6,24.0L276.5,24.0M276.5,24.0L288.4,38.3M288.4,38.3L269.4,53.1M233.6,53.1L269.4,53.1M269.4,53.1L281.6,68.3M281.6,68.3L262.0,84.0M225.0,84.0L262.0,84.0M262.0,84.0L274.4,100.2M274.4,100.2L254.0,116.9M215.9,116.9L254.0,116.9M254.0,116.9L266.7,134.1M266.7,134.1L245.5,152.0M206.2,152.0L245.5,152.0M245.5,152.0L258.6,170.3M258.6,170.3L236.5,189.4M195.8,189.4L236.5,189.4M236.5,189.4L249.8,209.0M249.8,209.0L226.8,229.4M184.7,229.4L226.8,229.4M226.8,229.4L240.4,250.5M240.4,250.5L216.4,272.4M172.7,272.4L216.4,272.4M216.4,272.4L230.4,295.1M230.4,295.1L205.3,318.6M159.9,318.6L205.3,318.6M205.3,318.6L219.5,343.0M219.5,343.0L193.2,368.5M146.1,368.5L193.2,368.5M193.2,368.5L207.8,394.9M207.8,394.9L180.2,422.4M131.1,422.4L180.2,422.4M180.2,422.4L195.1,451.0M195.1,451.0L166.0,480.9M114.9,480.9L166.0,480.9M166.0,480.9L181.3,512.1M181.3,512.1L150.6,544.7M97.2,544.7L150.6,544.7M150.6,544.7L166.2,578.7M166.2,578.7L133.8,614.3M77.9,614.3L133.8,614.3M133.8,614.3L149.7,651.7M149.7,651.7L115.3,690.9M56.6,690.9L115.3,690.9M115.3,690.9L131.6,732.0M131.6,732.0L94.9,775.2M334.2,-16.6L346.4,-3.5M346.4,-3.5L329.1,10.1M294.8,10.1L329.1,10.1M329.1,10.1L341.6,24.0M341.6,24.0L323.7,38.3M288.4,38.3L323.7,38.3M323.7,38.3L336.5,53.1M336.5,53.1L318.0,68.3M281.6,68.3L318.0,68.3M318.0,68.3L331.1,84.0M331.1,84.0L312.0,100.2M274.4,100.2L312.0,100.2M312.0,100.2L325.4,116.9M325.4,116.9L305.5,134.1M266.7,134.1L305.5,134.1M305.5,134.1L319.3,152.0M319.3,152.0L298.6,170.3M258.6,170.3L298.6,170.3M298.6,170.3L312.7,189.4M312.7,189.4L291.2,209.0M249.8,209.0L291.2,209.0M291.2,209.0L305.7,229.4M305.7,229.4L283.3,250.5M240.4,250.5L283.3,250.5M283.3,250.5L298.2,272.4M298.2,272.4L274.9,295.1M230.4,295.1L274.9,295.1M274.9,295.1L290.1,318.6M290.1,318.6L265.7,343.0M219.5,343.0L265.7,343.0M265.7,343.0L281.4,368.5M281.4,368.5L255.9,394.9M207.8,394.9L255.9,394.9M255.9,394.9L272.0,422.4M272.0,422.4L245.2,451.0M195.1,451.0L245.2,451.0M245.2,451.0L261.8,480.9M261.8,480.9L233.6,512.1M181.3,512.1L233.6,512.1M233.6,512.1L250.6,544.7M250.6,544.7L220.9,578.7M166.2,578.7L220.9,578.7M220.9,578.7L238.5,614.3M238.5,614.3L207.0,651.7M149.7,651.7L207.0,651.7M207.0,651.7L225.1,690.9M225.1,690.9L191.7,732.0M131.6,732.0L191.7,732.0M191.7,732.0L210.3,775.2M396.6,-16.6L380.3,-3.5M346.4,-3.5L380.3,-3.5M380.3,-3.5L393.3,10.1M393.3,10.1L376.5,24.0M341.6,24.0L376.5,24.0M376.5,24.0L389.9,38.3M389.9,38.3L372.4,53.1M336.5,53.1L372.4,53.1M372.4,53.1L386.2,68.3M386.2,68.3L368.1,84.0M331.1,84.0L368.1,84.0M368.1,84.0L382.2,100.2M382.2,100.2L363.5,116.9M325.4,116.9L363.5,116.9M363.5,116.9L378.0,134.1M378.0,134.1L358.7,152.0M319.3,152.0L358.7,152.0M358.7,152.0L373.6,170.3M373.6,170.3L353.5,189.4M312.7,189.4L353.5,189.4M353.5,189.4L368.8,209.0M368.8,209.0L347.9,229.4M305.7,229.4L347.9,229.4M347.9,229.4L363.7,250.5M363.7,250.5L341.9,272.4M298.2,272.4L341.9,272.4M341.9,272.4L358.2,295.1M358.2,295.1L335.5,318.6M290.1,318.6L335.5,318.6M335.5,318.6L352.2,343.0M352.2,343.0L328.6,368.5M281.4,368.5L328.6,368.5M328.6,368.5L345.9,394.9M345.9,394.9L321.1,422.4M272.0,422.4L321.1,422.4M321.1,422.4L338.9,451.0M338.9,451.0L312.9,480.9M261.8,480.9L312.9,480.9M312.9,480.9L331.4,512.1M331.4,512.1L304.1,544.7M250.6,544.7L304.1,544.7M304.1,544.7L323.2,578.7M323.2,578.7L294.4,614.3M238.5,614.3L294.4,614.3M294.4,614.3L314.2,651.7M314.2,651.7L283.8,690.9M225.1,690.9L283.8,690.9M283.8,690.9L304.2,732.0M304.2,732.0L272.0,775.2M430.0,-16.6L443.6,-3.5M443.6,-3.5L427.7,10.1M393.3,10.1L427.7,10.1M427.7,10.1L441.6,24.0M441.6,24.0L425.2,38.3M389.9,38.3L425.2,38.3M425.2,38.3L439.5,53.1M439.5,53.1L422.6,68.3M386.2,68.3L422.6,68.3M422.6,68.3L437.3,84.0M437.3,84.0L419.8,100.2M382.2,100.2L419.8,100.2M419.8,100.2L434.9,116.9M434.9,116.9L416.8,134.1M378.0,134.1L416.8,134.1M416.8,134.1L432.4,152.0M432.4,152.0L413.6,170.3M373.6,170.3L413.6,170.3M413.6,170.3L429.7,189.4M429.7,189.4L410.2,209.0M368.8,209.0L410.2,209.0M410.2,209.0L426.8,229.4M426.8,229.4L406.6,250.5M363.7,250.5L406.6,250.5M406.6,250.5L423.7,272.4M423.7,272.4L402.7,295.1M358.2,295.1L402.7,295.1M402.7,295.1L420.4,318.6M420.4,318.6L398.5,343.0M352.2,343.0L398.5,343.0M398.5,343.0L416.8,368.5M416.8,368.5L393.9,394.9M345.9,394.9L393.9,394.9M393.9,394.9L412.9,422.4M412.9,422.4L389.0,451.0M338.9,451.0L389.0,451.0M389.0,451.0L408.7,480.9M408.7,480.9L383.7,512.1M331.4,512.1L383.7,512.1M383.7,512.1L404.1,544.7M404.1,544.7L377.8,578.7M323.2,578.7L377.8,578.7M377.8,578.7L399.1,614.3M399.1,614.3L371.4,651.7M314.2,651.7L371.4,651.7M371.4,651.7L393.5,690.9M393.5,690.9L364.4,732.0M304.2,732.0L364.4,732.0M364.4,732.0L387.5,775.2M492.5,-16.6L477.4,-3.5M443.6,-3.5L477.4,-3.5M477.4,-3.5L491.9,10.1M491.9,10.1L476.4,24.0M441.6,24.0L476.4,24.0M476.4,24.0L491.3,38.3M491.3,38.3L475.4,53.1M439.5,53.1L475.4,53.1M475.4,53.1L490.7,68.3M490.7,68.3L474.3,84.0M437.3,84.0L474.3,84.0M474.3,84.0L490.0,100.2M490.0,100.2L473.1,116.9M434.9,116.9L473.1,116.9M473.1,116.9L489.3,134.1M489.3,134.1L471.8,152.0M432.4,152.0L471.8,152.0M471.8,152.0L488.6,170.3M488.6,170.3L470.4,189.4M429.7,189.4L470.4,189.4M470.4,189.4L487.8,209.0M487.8,209.0L469.0,229.4M426.8,229.4L469.0,229.4M469.0,229.4L486.9,250.5M486.9,250.5L467.4,272.4M423.7,272.4L467.4,272.4M467.4,272.4L486.0,295.1M486.0,295.1L465.7,318.6M420.4,318.6L465.7,318.6M465.7,318.6L485.0,343.0M485.0,343.0L463.9,368.5M416.8,368.5L463.9,368.5M463.9,368.5L483.9,394.9M483.9,394.9L462.0,422.4M412.9,422.4L462.0,422.4M462.0,422.4L482.8,451.0M482.8,451.0L459.8,480.9M408.7,480.9L459.8,480.9M459.8,480.9L481.5,512.1M481.5,512.1L457.5,544.7M404.1,544.7L457.5,544.7M457.5,544.7L480.1,578.7M480.1,578.7L455.0,614.3M399.1,614.3L455.0,614.3M455.0,614.3L478.6,651.7M478.6,651.7L452.2,690.9M393.5,690.9L452.2,690.9M452.2,690.9L476.9,732.0M476.9,732.0L449.1,775.2M525.8,-16.6L540.8,-3.5M540.8,-3.5L526.2,10.1M491.9,10.1L526.2,10.1M526.2,10.1L541.6,24.0M541.6,24.0L526.7,38.3M491.3,38.3L526.7,38.3M526.7,38.3L542.5,53.1M542.5,53.1L527.1,68.3M490.7,68.3L527.1,68.3M527.1,68.3L543.4,84.0M543.4,84.0L527.6,100.2M490.0,100.2L527.6,100.2M527.6,100.2L544.5,116.9M544.5,116.9L528.1,134.1M489.3,134.1L528.1,134.1M528.1,134.1L545.5,152.0M545.5,152.0L528.6,170.3M488.6,170.3L528.6,170.3M528.6,170.3L546.7,189.4M546.7,189.4L529.2,209.0M487.8,209.0L529.2,209.0M529.2,209.0L547.9,229.4M547.9,229.4L529.8,250.5M486.9,250.5L529.8,250.5M529.8,250.5L549.2,272.4M549.2,272.4L530.5,295.1M486.0,295.1L530.5,295.1M530.5,295.1L550.6,318.6M550.6,318.6L531.2,343.0M485.0,343.0L531.2,343.0M531.2,343.0L552.1,368.5M552.1,368.5L532.0,394.9M483.9,394.9L532.0,394.9M532.0,394.9L553.8,422.4M553.8,422.4L532.8,451.0M482.8,451.0L532.8,451.0M532.8,451.0L555.6,480.9M555.6,480.9L533.8,512.1M481.5,512.1L533.8,512.1M533.8,512.1L557.5,544.7M557.5,544.7L534.8,578.7M480.1,578.7L534.8,578.7M534.8,578.7L559.7,614.3M559.7,614.3L535.9,651.7M478.6,651.7L535.9,651.7M535.9,651.7L562.0,690.9M562.0,690.9L537.1,732.0M476.9,732.0L537.1,732.0M537.1,732.0L564.6,775.2M588.3,-16.6L574.6,-3.5M540.8,-3.5L574.6,-3.5M574.6,-3.5L590.5,10.1M590.5,10.1L576.4,24.0M541.6,24.0L576.4,24.0M576.4,24.0L592.8,38.3M592.8,38.3L578.4,53.1M542.5,53.1L578.4,53.1M578.4,53.1L595.2,68.3M595.2,68.3L580.4,84.0M543.4,84.0L580.4,84.0M580.4,84.0L597.8,100.2M597.8,100.2L582.6,116.9M544.5,116.9L582.6,116.9M582.6,116.9L600.6,134.1M600.6,134.1L584.9,152.0M545.5,152.0L584.9,152.0M584.9,152.0L603.6,170.3M603.6,170.3L587.4,189.4M546.7,189.4L587.4,189.4M587.4,189.4L606.8,209.0M606.8,209.0L590.1,229.4M547.9,229.4L590.1,229.4M590.1,229.4L610.2,250.5M610.2,250.5L592.9,272.4M549.2,272.4L592.9,272.4M592.9,272.4L613.8,295.1M613.8,295.1L596.0,318.6M550.6,318.6L596.0,318.6M596.0,318.6L617.7,343.0M617.7,343.0L599.3,368.5M552.1,368.5L599.3,368.5M599.3,368.5L622.0,394.9M622.0,394.9L602.9,422.4M553.8,422.4L602.9,422.4M602.9,422.4L626.6,451.0M626.6,451.0L606.7,480.9M555.6,480.9L606.7,480.9M606.7,480.9L631.6,512.1M631.6,512.1L611.0,544.7M557.5,544.7L611.0,544.7M611.0,544.7L637.0,578.7M637.0,578.7L615.6,614.3M559.7,614.3L615.6,614.3M615.6,614.3L643.0,651.7M643.0,651.7L620.7,690.9M562.0,690.9L620.7,690.9M620.7,690.9L649.6,732.0M649.6,732.0L626.3,775.2M621.6,-16.6L637.9,-3.5M637.9,-3.5L624.8,10.1M590.5,10.1L624.8,10.1M624.8,10.1L641.6,24.0M641.6,24.0L628.1,38.3M592.8,38.3L628.1,38.3M628.1,38.3L645.5,53.1M645.5,53.1L631.6,68.3M595.2,68.3L631.6,68.3M631.6,68.3L649.6,84.0M649.6,84.0L635.4,100.2M597.8,100.2L635.4,100.2M635.4,100.2L654.0,116.9M654.0,116.9L639.4,134.1M600.6,134.1L639.4,134.1M639.4,134.1L658.6,152.0M658.6,152.0L643.6,170.3M603.6,170.3L643.6,170.3M643.6,170.3L663.6,189.4M663.6,189.4L648.2,209.0M606.8,209.0L648.2,209.0M648.2,209.0L669.0,229.4M669.0,229.4L653.1,250.5M610.2,250.5L653.1,250.5M653.1,250.5L674.7,272.4M674.7,272.4L658.3,295.1M613.8,295.1L658.3,295.1M658.3,295.1L680.9,318.6M680.9,318.6L664.0,343.0M617.7,343.0L664.0,343.0M664.0,343.0L687.5,368.5M687.5,368.5L670.1,394.9M622.0,394.9L670.1,394.9M670.1,394.9L694.7,422.4M694.7,422.4L676.7,451.0M626.6,451.0L676.7,451.0M676.7,451.0L702.5,480.9M702.5,480.9L683.9,512.1M631.6,512.1L683.9,512.1M683.9,512.1L711.0,544.7M711.0,544.7L691.7,578.7M637.0,578.7L691.7,578.7M691.7,578.7L720.3,614.3M720.3,614.3L700.3,651.7M643.0,651.7L700.3,651.7M700.3,651.7L730.5,690.9M730.5,690.9L709.7,732.0M649.6,732.0L709.7,732.0M709.7,732.0L741.7,775.2M684.1,-16.6L671.8,-3.5M637.9,-3.5L671.8,-3.5M671.8,-3.5L689.0,10.1M689.0,10.1L676.4,24.0M641.6,24.0L676.4,24.0M676.4,24.0L694.2,38.3M694.2,38.3L681.3,53.1M645.5,53.1L681.3,53.1M681.3,53.1L699.8,68.3M699.8,68.3L686.6,84.0M649.6,84.0L686.6,84.0M686.6,84.0L705.7,100.2M705.7,100.2L692.1,116.9M654.0,116.9L692.1,116.9M692.1,116.9L711.9,134.1M711.9,134.1L698.0,152.0M658.6,152.0L698.0,152.0M698.0,152.0L718.6,170.3M718.6,170.3L704.4,189.4M663.6,189.4L704.4,189.4M704.4,189.4L725.7,209.0M725.7,209.0L711.1,229.4M669.0,229.4L711.1,229.4M711.1,229.4L733.4,250.5M733.4,250.5L718.4,272.4M674.7,272.4L718.4,272.4M718.4,272.4L741.6,295.1M741.6,295.1L726.2,318.6M680.9,318.6L726.2,318.6M726.2,318.6L750.5,343.0M750.5,343.0L734.6,368.5M687.5,368.5L734.6,368.5M734.6,368.5L760.0,394.9M760.0,394.9L743.7,422.4M694.7,422.4L743.7,422.4M743.7,422.4L770.4,451.0M770.4,451.0L753.6,480.9M702.5,480.9L753.6,480.9M753.6,480.9L781.7,512.1M781.7,512.1L764.4,544.7M711.0,544.7L764.4,544.7M764.4,544.7L794.0,578.7M794.0,578.7L776.2,614.3M720.3,614.3L776.2,614.3M776.2,614.3L807.5,651.7M807.5,651.7L789.1,690.9M730.5,690.9L789.1,690.9M789.1,690.9L822.3,732.0M822.3,732.0L803.4,775.2M717.5,-16.6L735.1,-3.5M735.1,-3.5L723.3,10.1M689.0,10.1L723.3,10.1M723.3,10.1L741.6,24.0M741.6,24.0L729.6,38.3M694.2,38.3L729.6,38.3M729.6,38.3L748.5,53.1M748.5,53.1L736.2,68.3M699.8,68.3L736.2,68.3M736.2,68.3L755.7,84.0M755.7,84.0L743.2,100.2M705.7,100.2L743.2,100.2M743.2,100.2L763.5,116.9M763.5,116.9L750.7,134.1M711.9,134.1L750.7,134.1M750.7,134.1L771.8,152.0M771.8,152.0L758.7,170.3M718.6,170.3L758.7,170.3M758.7,170.3L780.6,189.4M780.6,189.4L767.2,209.0M725.7,209.0L767.2,209.0M767.2,209.0L790.0,229.4M790.0,229.4L776.3,250.5M733.4,250.5L776.3,250.5M776.3,250.5L800.2,272.4M800.2,272.4L786.1,295.1M741.6,295.1L786.1,295.1M786.1,295.1L811.1,318.6M811.1,318.6L796.7,343.0M750.5,343.0L796.7,343.0M796.7,343.0L822.8,368.5M822.8,368.5L808.1,394.9M760.0,394.9L808.1,394.9M808.1,394.9L835.6,422.4M835.6,422.4L820.5,451.0M770.4,451.0L820.5,451.0M820.5,451.0L849.4,480.9M849.4,480.9L834.0,512.1M781.7,512.1L834.0,512.1M834.0,512.1L864.4,544.7M864.4,544.7L848.6,578.7M794.0,578.7L848.6,578.7M848.6,578.7L880.9,614.3M880.9,614.3L864.7,651.7M807.5,651.7L864.7,651.7M864.7,651.7L898.9,690.9M898.9,690.9L882.4,732.0M822.3,732.0L882.4,732.0M882.4,732.0L918.8,775.2M779.9,-16.6L768.9,-3.5M735.1,-3.5L768.9,-3.5M768.9,-3.5L787.6,10.1M787.6,10.1L776.4,24.0M741.6,24.0L776.4,24.0M776.4,24.0L795.7,38.3M795.7,38.3L784.3,53.1M748.5,53.1L784.3,53.1M784.3,53.1L804.3,68.3M804.3,68.3L792.7,84.0M755.7,84.0L792.7,84.0M792.7,84.0L813.5,100.2M813.5,100.2L801.6,116.9M763.5,116.9L801.6,116.9M801.6,116.9L823.2,134.1M823.2,134.1L811.2,152.0M771.8,152.0L811.2,152.0M811.2,152.0L833.6,170.3M833.6,170.3L821.3,189.4M780.6,189.4L821.3,189.4M821.3,189.4L844.7,209.0M844.7,209.0L832.2,229.4M790.0,229.4L832.2,229.4M832.2,229.4L856.6,250.5M856.6,250.5L843.9,272.4M800.2,272.4L843.9,272.4M843.9,272.4L869.4,295.1M869.4,295.1L856.4,318.6M811.1,318.6L856.4,318.6M856.4,318.6L883.2,343.0M883.2,343.0L870.0,368.5M822.8,368.5L870.0,368.5M870.0,368.5L898.1,394.9M898.1,394.9L884.6,422.4M835.6,422.4L884.6,422.4M884.6,422.4L914.2,451.0M914.2,451.0L900.5,480.9M849.4,480.9L900.5,480.9M900.5,480.9L931.8,512.1M931.8,512.1L917.9,544.7M864.4,544.7L917.9,544.7M917.9,544.7L950.9,578.7M950.9,578.7L936.8,614.3M880.9,614.3L936.8,614.3M936.8,614.3L971.9,651.7M971.9,651.7L957.6,690.9M898.9,690.9L957.6,690.9M957.6,690.9L994.9,732.0M994.9,732.0L980.5,775.2M813.3,-16.6L832.3,-3.5M832.3,-3.5L821.9,10.1M787.6,10.1L821.9,10.1M821.9,10.1L841.6,24.0M841.6,24.0L831.0,38.3M795.7,38.3L831.0,38.3M831.0,38.3L851.4,53.1M851.4,53.1L840.7,68.3M804.3,68.3L840.7,68.3M840.7,68.3L861.9,84.0M861.9,84.0L851.0,100.2M813.5,100.2L851.0,100.2M851.0,100.2L873.0,116.9M873.0,116.9L862.0,134.1M823.2,134.1L862.0,134.1M862.0,134.1L884.9,152.0M884.9,152.0L873.7,170.3M833.6,170.3L873.7,170.3M873.7,170.3L897.6,189.4M897.6,189.4L886.2,209.0M844.7,209.0L886.2,209.0M886.2,209.0L911.1,229.4M911.1,229.4L899.6,250.5M856.6,250.5L899.6,250.5M899.6,250.5L925.7,272.4M925.7,272.4L914.0,295.1M869.4,295.1L914.0,295.1M914.0,295.1L941.3,318.6M941.3,318.6L929.5,343.0M883.2,343.0L929.5,343.0M929.5,343.0L958.2,368.5M958.2,368.5L946.2,394.9M898.1,394.9L946.2,394.9M946.2,394.9L976.5,422.4M976.5,422.4L964.3,451.0M914.2,451.0L964.3,451.0M964.3,451.0L996.3,480.9M996.3,480.9L984.1,512.1M931.8,512.1L984.1,512.1M984.1,512.1L1017.9,544.7M1017.9,544.7L1005.6,578.7M950.9,578.7L1005.6,578.7M1005.6,578.7L1041.5,614.3M1041.5,614.3L1029.1,651.7M971.9,651.7L1029.1,651.7M1029.1,651.7L1067.4,690.9M994.9,732.0L1055.1,732.0M875.7,-16.6L866.1,-3.5M832.3,-3.5L866.1,-3.5M866.1,-3.5L886.1,10.1M886.1,10.1L876.4,24.0M841.6,24.0L876.4,24.0M876.4,24.0L897.2,38.3M897.2,38.3L887.3,53.1M851.4,53.1L887.3,53.1M887.3,53.1L908.9,68.3M908.9,68.3L898.9,84.0M861.9,84.0L898.9,84.0M898.9,84.0L921.3,100.2M921.3,100.2L911.2,116.9M873.0,116.9L911.2,116.9M911.2,116.9L934.5,134.1M934.5,134.1L924.3,152.0M884.9,152.0L924.3,152.0M924.3,152.0L948.6,170.3M948.6,170.3L938.3,189.4M897.6,189.4L938.3,189.4M938.3,189.4L963.7,209.0M963.7,209.0L953.3,229.4M911.1,229.4L953.3,229.4M953.3,229.4L979.9,250.5M979.9,250.5L969.4,272.4M925.7,272.4L969.4,272.4M969.4,272.4L997.3,295.1M997.3,295.1L986.7,318.6M941.3,318.6L986.7,318.6M986.7,318.6L1016.0,343.0M1016.0,343.0L1005.3,368.5M958.2,368.5L1005.3,368.5M1005.3,368.5L1036.2,394.9M1036.2,394.9L1025.5,422.4M976.5,422.4L1025.5,422.4M1025.5,422.4L1058.1,451.0M996.3,480.9L1047.4,480.9M1017.9,544.7L1071.3,544.7M909.1,-16.6L929.4,-3.5M929.4,-3.5L920.5,10.1M886.1,10.1L920.5,10.1M920.5,10.1L941.6,24.0M941.6,24.0L932.5,38.3M897.2,38.3L932.5,38.3M932.5,38.3L954.4,53.1M954.4,53.1L945.3,68.3M908.9,68.3L945.3,68.3M945.3,68.3L968.0,84.0M968.0,84.0L958.8,100.2M921.3,100.2L958.8,100.2M958.8,100.2L982.6,116.9M982.6,116.9L973.3,134.1M934.5,134.1L973.3,134.1M973.3,134.1L998.0,152.0M998.0,152.0L988.7,170.3M948.6,170.3L988.7,170.3M988.7,170.3L1014.5,189.4M1014.5,189.4L1005.2,209.0M963.7,209.0L1005.2,209.0M1005.2,209.0L1032.2,229.4M1032.2,229.4L1022.8,250.5M979.9,250.5L1022.8,250.5M1022.8,250.5L1051.2,272.4M997.3,295.1L1041.8,295.1M1016.0,343.0L1062.2,343.0M971.5,-16.6L963.3,-3.5M929.4,-3.5L963.3,-3.5M963.3,-3.5L984.7,10.1M984.7,10.1L976.4,24.0M941.6,24.0L976.4,24.0M976.4,24.0L998.6,38.3M998.6,38.3L990.3,53.1M954.4,53.1L990.3,53.1M990.3,53.1L1013.4,68.3M1013.4,68.3L1005.0,84.0M968.0,84.0L1005.0,84.0M1005.0,84.0L1029.1,100.2M1029.1,100.2L1020.7,116.9M982.6,116.9L1020.7,116.9M1020.7,116.9L1045.8,134.1M998.0,152.0L1037.4,152.0M1014.5,189.4L1055.3,189.4M1004.9,-16.6L1026.6,-3.5M1026.6,-3.5L1019.0,10.1M984.7,10.1L1019.0,10.1M1019.0,10.1L1041.5,24.0M998.6,38.3L1034.0,38.3M1013.4,68.3L1049.8,68.3M1029.1,100.2L1066.6,100.2M1026.6,-3.5L1060.4,-3.5" fill="none" stroke="#000" stroke-opacity="0.12" stroke-width="1"/>
<polygon fill="#352a21" transform="translate(1.5,-6.5)" points="860,487.5 898,487.5 931.75,518.75 984.4,519.4 1017.8,551.6 1004.7,586 1024,603 1024,732 820,732 788.75,694 807.5,656.6 795,638.6 860,638.6"/>
<polygon fill="url(#gOrange)" points="860,487.5 898,487.5 931.75,518.75 984.4,519.4 1017.8,551.6 1004.7,586 1024,603 1024,732 820,732 788.75,694 807.5,656.6 795,638.6 860,638.6"/>
<path clip-path="url(#c_orange)" d="M13.4,-8.6L-8.4,4.5M-8.4,4.5L-0.9,18.1M-0.9,18.1L-23.5,32.0M46.8,-8.6L54.9,4.5M54.9,4.5L33.4,18.1M-0.9,18.1L33.4,18.1M33.4,18.1L41.7,32.0M41.7,32.0L19.4,46.3M-16.0,46.3L19.4,46.3M19.4,46.3L27.6,61.1M27.6,61.1L4.4,76.3M-32.0,76.3L4.4,76.3M4.4,76.3L12.7,92.0M12.7,92.0L-11.5,108.2M-11.5,108.2L-3.2,124.9M-3.2,124.9L-28.4,142.1M109.2,-8.6L88.8,4.5M54.9,4.5L88.8,4.5M88.8,4.5L97.7,18.1M97.7,18.1L76.5,32.0M41.7,32.0L76.5,32.0M76.5,32.0L85.5,46.3M85.5,46.3L63.5,61.1M27.6,61.1L63.5,61.1M63.5,61.1L72.5,76.3M72.5,76.3L49.7,92.0M12.7,92.0L49.7,92.0M49.7,92.0L58.8,108.2M58.8,108.2L35.0,124.9M-3.2,124.9L35.0,124.9M35.0,124.9L44.1,142.1M44.1,142.1L19.3,160.0M-20.1,160.0L19.3,160.0M19.3,160.0L28.5,178.3M28.5,178.3L2.6,197.4M-38.2,197.4L2.6,197.4M2.6,197.4L11.8,217.0M11.8,217.0L-15.3,237.4M142.6,-8.6L152.1,4.5M152.1,4.5L132.0,18.1M97.7,18.1L132.0,18.1M132.0,18.1L141.7,32.0M141.7,32.0L120.8,46.3M85.5,46.3L120.8,46.3M120.8,46.3L130.6,61.1M130.6,61.1L108.9,76.3M72.5,76.3L108.9,76.3M108.9,76.3L118.8,92.0M118.8,92.0L96.3,108.2M58.8,108.2L96.3,108.2M96.3,108.2L106.3,124.9M106.3,124.9L82.9,142.1M44.1,142.1L82.9,142.1M82.9,142.1L93.0,160.0M93.0,160.0L68.6,178.3M28.5,178.3L68.6,178.3M68.6,178.3L78.8,197.4M78.8,197.4L53.3,217.0M11.8,217.0L53.3,217.0M53.3,217.0L63.6,237.4M63.6,237.4L36.9,258.5M-6.1,258.5L36.9,258.5M36.9,258.5L47.2,280.4M47.2,280.4L19.2,303.1M-25.3,303.1L19.2,303.1M19.2,303.1L29.7,326.6M29.7,326.6L0.2,351.0M-46.0,351.0L0.2,351.0M0.2,351.0L10.7,376.5M10.7,376.5L-20.3,402.9M205.0,-8.6L185.9,4.5M152.1,4.5L185.9,4.5M185.9,4.5L196.2,18.1M196.2,18.1L176.5,32.0M141.7,32.0L176.5,32.0M176.5,32.0L186.9,46.3M186.9,46.3L166.5,61.1M130.6,61.1L166.5,61.1M166.5,61.1L177.1,76.3M177.1,76.3L155.8,92.0M118.8,92.0L155.8,92.0M155.8,92.0L166.6,108.2M166.6,108.2L144.5,124.9M106.3,124.9L144.5,124.9M144.5,124.9L155.4,142.1M155.4,142.1L132.4,160.0M93.0,160.0L132.4,160.0M132.4,160.0L143.5,178.3M143.5,178.3L119.5,197.4M78.8,197.4L119.5,197.4M119.5,197.4L130.8,217.0M130.8,217.0L105.7,237.4M63.6,237.4L105.7,237.4M105.7,237.4L117.2,258.5M117.2,258.5L91.0,280.4M47.2,280.4L91.0,280.4M91.0,280.4L102.5,303.1M102.5,303.1L75.0,326.6M29.7,326.6L75.0,326.6M75.0,326.6L86.8,351.0M86.8,351.0L57.9,376.5M10.7,376.5L57.9,376.5M57.9,376.5L69.7,402.9M69.7,402.9L39.3,430.4M-9.8,430.4L39.3,430.4M39.3,430.4L51.3,459.0M51.3,459.0L19.1,488.9M-32.0,488.9L19.1,488.9M19.1,488.9L31.2,520.1M31.2,520.1L-2.8,552.7M-56.2,552.7L-2.8,552.7M-2.8,552.7L9.3,586.7M9.3,586.7L-26.8,622.3M238.4,-8.6L249.3,4.5M249.3,4.5L230.6,18.1M196.2,18.1L230.6,18.1M230.6,18.1L241.6,32.0M241.6,32.0L222.3,46.3M186.9,46.3L222.3,46.3M222.3,46.3L233.6,61.1M233.6,61.1L213.5,76.3M177.1,76.3L213.5,76.3M213.5,76.3L225.0,92.0M225.0,92.0L204.1,108.2M166.6,108.2L204.1,108.2M204.1,108.2L215.9,124.9M215.9,124.9L194.2,142.1M155.4,142.1L194.2,142.1M194.2,142.1L206.2,160.0M206.2,160.0L183.6,178.3M143.5,178.3L183.6,178.3M183.6,178.3L195.8,197.4M195.8,197.4L172.3,217.0M130.8,217.0L172.3,217.0M172.3,217.0L184.7,237.4M184.7,237.4L160.1,258.5M117.2,258.5L160.1,258.5M160.1,258.5L172.7,280.4M172.7,280.4L147.1,303.1M102.5,303.1L147.1,303.1M147.1,303.1L159.9,326.6M159.9,326.6L133.0,351.0M86.8,351.0L133.0,351.0M133.0,351.0L146.1,376.5M146.1,376.5L117.8,402.9M69.7,402.9L117.8,402.9M117.8,402.9L131.1,430.4M131.1,430.4L101.3,459.0M51.3,459.0L101.3,459.0M101.3,459.0L114.9,488.9M114.9,488.9L83.5,520.1M31.2,520.1L83.5,520.1M83.5,520.1L97.2,552.7M97.2,552.7L63.9,586.7M9.3,586.7L63.9,586.7M63.9,586.7L77.9,622.3M77.9,622.3L42.6,659.7M-14.7,659.7L42.6,659.7M42.6,659.7L56.6,698.9M56.6,698.9L19.0,740.0M-41.1,740.0L19.0,740.0M19.0,740.0L33.2,783.2M300.8,-8.6L283.1,4.5M249.3,4.5L283.1,4.5M283.1,4.5L294.8,18.1M294.8,18.1L276.5,32.0M241.6,32.0L276.5,32.0M276.5,32.0L288.4,46.3M288.4,46.3L269.4,61.1M233.6,61.1L269.4,61.1M269.4,61.1L281.6,76.3M281.6,76.3L262.0,92.0M225.0,92.0L262.0,92.0M262.0,92.0L274.4,108.2M274.4,108.2L254.0,124.9M215.9,124.9L254.0,124.9M254.0,124.9L266.7,142.1M266.7,142.1L245.5,160.0M206.2,160.0L245.5,160.0M245.5,160.0L258.6,178.3M258.6,178.3L236.5,197.4M195.8,197.4L236.5,197.4M236.5,197.4L249.8,217.0M249.8,217.0L226.8,237.4M184.7,237.4L226.8,237.4M226.8,237.4L240.4,258.5M240.4,258.5L216.4,280.4M172.7,280.4L216.4,280.4M216.4,280.4L230.4,303.1M230.4,303.1L205.3,326.6M159.9,326.6L205.3,326.6M205.3,326.6L219.5,351.0M219.5,351.0L193.2,376.5M146.1,376.5L193.2,376.5M193.2,376.5L207.8,402.9M207.8,402.9L180.2,430.4M131.1,430.4L180.2,430.4M180.2,430.4L195.1,459.0M195.1,459.0L166.0,488.9M114.9,488.9L166.0,488.9M166.0,488.9L181.3,520.1M181.3,520.1L150.6,552.7M97.2,552.7L150.6,552.7M150.6,552.7L166.2,586.7M166.2,586.7L133.8,622.3M77.9,622.3L133.8,622.3M133.8,622.3L149.7,659.7M149.7,659.7L115.3,698.9M56.6,698.9L115.3,698.9M115.3,698.9L131.6,740.0M131.6,740.0L94.9,783.2M334.2,-8.6L346.4,4.5M346.4,4.5L329.1,18.1M294.8,18.1L329.1,18.1M329.1,18.1L341.6,32.0M341.6,32.0L323.7,46.3M288.4,46.3L323.7,46.3M323.7,46.3L336.5,61.1M336.5,61.1L318.0,76.3M281.6,76.3L318.0,76.3M318.0,76.3L331.1,92.0M331.1,92.0L312.0,108.2M274.4,108.2L312.0,108.2M312.0,108.2L325.4,124.9M325.4,124.9L305.5,142.1M266.7,142.1L305.5,142.1M305.5,142.1L319.3,160.0M319.3,160.0L298.6,178.3M258.6,178.3L298.6,178.3M298.6,178.3L312.7,197.4M312.7,197.4L291.2,217.0M249.8,217.0L291.2,217.0M291.2,217.0L305.7,237.4M305.7,237.4L283.3,258.5M240.4,258.5L283.3,258.5M283.3,258.5L298.2,280.4M298.2,280.4L274.9,303.1M230.4,303.1L274.9,303.1M274.9,303.1L290.1,326.6M290.1,326.6L265.7,351.0M219.5,351.0L265.7,351.0M265.7,351.0L281.4,376.5M281.4,376.5L255.9,402.9M207.8,402.9L255.9,402.9M255.9,402.9L272.0,430.4M272.0,430.4L245.2,459.0M195.1,459.0L245.2,459.0M245.2,459.0L261.8,488.9M261.8,488.9L233.6,520.1M181.3,520.1L233.6,520.1M233.6,520.1L250.6,552.7M250.6,552.7L220.9,586.7M166.2,586.7L220.9,586.7M220.9,586.7L238.5,622.3M238.5,622.3L207.0,659.7M149.7,659.7L207.0,659.7M207.0,659.7L225.1,698.9M225.1,698.9L191.7,740.0M131.6,740.0L191.7,740.0M191.7,740.0L210.3,783.2M396.6,-8.6L380.3,4.5M346.4,4.5L380.3,4.5M380.3,4.5L393.3,18.1M393.3,18.1L376.5,32.0M341.6,32.0L376.5,32.0M376.5,32.0L389.9,46.3M389.9,46.3L372.4,61.1M336.5,61.1L372.4,61.1M372.4,61.1L386.2,76.3M386.2,76.3L368.1,92.0M331.1,92.0L368.1,92.0M368.1,92.0L382.2,108.2M382.2,108.2L363.5,124.9M325.4,124.9L363.5,124.9M363.5,124.9L378.0,142.1M378.0,142.1L358.7,160.0M319.3,160.0L358.7,160.0M358.7,160.0L373.6,178.3M373.6,178.3L353.5,197.4M312.7,197.4L353.5,197.4M353.5,197.4L368.8,217.0M368.8,217.0L347.9,237.4M305.7,237.4L347.9,237.4M347.9,237.4L363.7,258.5M363.7,258.5L341.9,280.4M298.2,280.4L341.9,280.4M341.9,280.4L358.2,303.1M358.2,303.1L335.5,326.6M290.1,326.6L335.5,326.6M335.5,326.6L352.2,351.0M352.2,351.0L328.6,376.5M281.4,376.5L328.6,376.5M328.6,376.5L345.9,402.9M345.9,402.9L321.1,430.4M272.0,430.4L321.1,430.4M321.1,430.4L338.9,459.0M338.9,459.0L312.9,488.9M261.8,488.9L312.9,488.9M312.9,488.9L331.4,520.1M331.4,520.1L304.1,552.7M250.6,552.7L304.1,552.7M304.1,552.7L323.2,586.7M323.2,586.7L294.4,622.3M238.5,622.3L294.4,622.3M294.4,622.3L314.2,659.7M314.2,659.7L283.8,698.9M225.1,698.9L283.8,698.9M283.8,698.9L304.2,740.0M304.2,740.0L272.0,783.2M430.0,-8.6L443.6,4.5M443.6,4.5L427.7,18.1M393.3,18.1L427.7,18.1M427.7,18.1L441.6,32.0M441.6,32.0L425.2,46.3M389.9,46.3L425.2,46.3M425.2,46.3L439.5,61.1M439.5,61.1L422.6,76.3M386.2,76.3L422.6,76.3M422.6,76.3L437.3,92.0M437.3,92.0L419.8,108.2M382.2,108.2L419.8,108.2M419.8,108.2L434.9,124.9M434.9,124.9L416.8,142.1M378.0,142.1L416.8,142.1M416.8,142.1L432.4,160.0M432.4,160.0L413.6,178.3M373.6,178.3L413.6,178.3M413.6,178.3L429.7,197.4M429.7,197.4L410.2,217.0M368.8,217.0L410.2,217.0M410.2,217.0L426.8,237.4M426.8,237.4L406.6,258.5M363.7,258.5L406.6,258.5M406.6,258.5L423.7,280.4M423.7,280.4L402.7,303.1M358.2,303.1L402.7,303.1M402.7,303.1L420.4,326.6M420.4,326.6L398.5,351.0M352.2,351.0L398.5,351.0M398.5,351.0L416.8,376.5M416.8,376.5L393.9,402.9M345.9,402.9L393.9,402.9M393.9,402.9L412.9,430.4M412.9,430.4L389.0,459.0M338.9,459.0L389.0,459.0M389.0,459.0L408.7,488.9M408.7,488.9L383.7,520.1M331.4,520.1L383.7,520.1M383.7,520.1L404.1,552.7M404.1,552.7L377.8,586.7M323.2,586.7L377.8,586.7M377.8,586.7L399.1,622.3M399.1,622.3L371.4,659.7M314.2,659.7L371.4,659.7M371.4,659.7L393.5,698.9M393.5,698.9L364.4,740.0M304.2,740.0L364.4,740.0M364.4,740.0L387.5,783.2M492.5,-8.6L477.4,4.5M443.6,4.5L477.4,4.5M477.4,4.5L491.9,18.1M491.9,18.1L476.4,32.0M441.6,32.0L476.4,32.0M476.4,32.0L491.3,46.3M491.3,46.3L475.4,61.1M439.5,61.1L475.4,61.1M475.4,61.1L490.7,76.3M490.7,76.3L474.3,92.0M437.3,92.0L474.3,92.0M474.3,92.0L490.0,108.2M490.0,108.2L473.1,124.9M434.9,124.9L473.1,124.9M473.1,124.9L489.3,142.1M489.3,142.1L471.8,160.0M432.4,160.0L471.8,160.0M471.8,160.0L488.6,178.3M488.6,178.3L470.4,197.4M429.7,197.4L470.4,197.4M470.4,197.4L487.8,217.0M487.8,217.0L469.0,237.4M426.8,237.4L469.0,237.4M469.0,237.4L486.9,258.5M486.9,258.5L467.4,280.4M423.7,280.4L467.4,280.4M467.4,280.4L486.0,303.1M486.0,303.1L465.7,326.6M420.4,326.6L465.7,326.6M465.7,326.6L485.0,351.0M485.0,351.0L463.9,376.5M416.8,376.5L463.9,376.5M463.9,376.5L483.9,402.9M483.9,402.9L462.0,430.4M412.9,430.4L462.0,430.4M462.0,430.4L482.8,459.0M482.8,459.0L459.8,488.9M408.7,488.9L459.8,488.9M459.8,488.9L481.5,520.1M481.5,520.1L457.5,552.7M404.1,552.7L457.5,552.7M457.5,552.7L480.1,586.7M480.1,586.7L455.0,622.3M399.1,622.3L455.0,622.3M455.0,622.3L478.6,659.7M478.6,659.7L452.2,698.9M393.5,698.9L452.2,698.9M452.2,698.9L476.9,740.0M476.9,740.0L449.1,783.2M525.8,-8.6L540.8,4.5M540.8,4.5L526.2,18.1M491.9,18.1L526.2,18.1M526.2,18.1L541.6,32.0M541.6,32.0L526.7,46.3M491.3,46.3L526.7,46.3M526.7,46.3L542.5,61.1M542.5,61.1L527.1,76.3M490.7,76.3L527.1,76.3M527.1,76.3L543.4,92.0M543.4,92.0L527.6,108.2M490.0,108.2L527.6,108.2M527.6,108.2L544.5,124.9M544.5,124.9L528.1,142.1M489.3,142.1L528.1,142.1M528.1,142.1L545.5,160.0M545.5,160.0L528.6,178.3M488.6,178.3L528.6,178.3M528.6,178.3L546.7,197.4M546.7,197.4L529.2,217.0M487.8,217.0L529.2,217.0M529.2,217.0L547.9,237.4M547.9,237.4L529.8,258.5M486.9,258.5L529.8,258.5M529.8,258.5L549.2,280.4M549.2,280.4L530.5,303.1M486.0,303.1L530.5,303.1M530.5,303.1L550.6,326.6M550.6,326.6L531.2,351.0M485.0,351.0L531.2,351.0M531.2,351.0L552.1,376.5M552.1,376.5L532.0,402.9M483.9,402.9L532.0,402.9M532.0,402.9L553.8,430.4M553.8,430.4L532.8,459.0M482.8,459.0L532.8,459.0M532.8,459.0L555.6,488.9M555.6,488.9L533.8,520.1M481.5,520.1L533.8,520.1M533.8,520.1L557.5,552.7M557.5,552.7L534.8,586.7M480.1,586.7L534.8,586.7M534.8,586.7L559.7,622.3M559.7,622.3L535.9,659.7M478.6,659.7L535.9,659.7M535.9,659.7L562.0,698.9M562.0,698.9L537.1,740.0M476.9,740.0L537.1,740.0M537.1,740.0L564.6,783.2M588.3,-8.6L574.6,4.5M540.8,4.5L574.6,4.5M574.6,4.5L590.5,18.1M590.5,18.1L576.4,32.0M541.6,32.0L576.4,32.0M576.4,32.0L592.8,46.3M592.8,46.3L578.4,61.1M542.5,61.1L578.4,61.1M578.4,61.1L595.2,76.3M595.2,76.3L580.4,92.0M543.4,92.0L580.4,92.0M580.4,92.0L597.8,108.2M597.8,108.2L582.6,124.9M544.5,124.9L582.6,124.9M582.6,124.9L600.6,142.1M600.6,142.1L584.9,160.0M545.5,160.0L584.9,160.0M584.9,160.0L603.6,178.3M603.6,178.3L587.4,197.4M546.7,197.4L587.4,197.4M587.4,197.4L606.8,217.0M606.8,217.0L590.1,237.4M547.9,237.4L590.1,237.4M590.1,237.4L610.2,258.5M610.2,258.5L592.9,280.4M549.2,280.4L592.9,280.4M592.9,280.4L613.8,303.1M613.8,303.1L596.0,326.6M550.6,326.6L596.0,326.6M596.0,326.6L617.7,351.0M617.7,351.0L599.3,376.5M552.1,376.5L599.3,376.5M599.3,376.5L622.0,402.9M622.0,402.9L602.9,430.4M553.8,430.4L602.9,430.4M602.9,430.4L626.6,459.0M626.6,459.0L606.7,488.9M555.6,488.9L606.7,488.9M606.7,488.9L631.6,520.1M631.6,520.1L611.0,552.7M557.5,552.7L611.0,552.7M611.0,552.7L637.0,586.7M637.0,586.7L615.6,622.3M559.7,622.3L615.6,622.3M615.6,622.3L643.0,659.7M643.0,659.7L620.7,698.9M562.0,698.9L620.7,698.9M620.7,698.9L649.6,740.0M649.6,740.0L626.3,783.2M621.6,-8.6L637.9,4.5M637.9,4.5L624.8,18.1M590.5,18.1L624.8,18.1M624.8,18.1L641.6,32.0M641.6,32.0L628.1,46.3M592.8,46.3L628.1,46.3M628.1,46.3L645.5,61.1M645.5,61.1L631.6,76.3M595.2,76.3L631.6,76.3M631.6,76.3L649.6,92.0M649.6,92.0L635.4,108.2M597.8,108.2L635.4,108.2M635.4,108.2L654.0,124.9M654.0,124.9L639.4,142.1M600.6,142.1L639.4,142.1M639.4,142.1L658.6,160.0M658.6,160.0L643.6,178.3M603.6,178.3L643.6,178.3M643.6,178.3L663.6,197.4M663.6,197.4L648.2,217.0M606.8,217.0L648.2,217.0M648.2,217.0L669.0,237.4M669.0,237.4L653.1,258.5M610.2,258.5L653.1,258.5M653.1,258.5L674.7,280.4M674.7,280.4L658.3,303.1M613.8,303.1L658.3,303.1M658.3,303.1L680.9,326.6M680.9,326.6L664.0,351.0M617.7,351.0L664.0,351.0M664.0,351.0L687.5,376.5M687.5,376.5L670.1,402.9M622.0,402.9L670.1,402.9M670.1,402.9L694.7,430.4M694.7,430.4L676.7,459.0M626.6,459.0L676.7,459.0M676.7,459.0L702.5,488.9M702.5,488.9L683.9,520.1M631.6,520.1L683.9,520.1M683.9,520.1L711.0,552.7M711.0,552.7L691.7,586.7M637.0,586.7L691.7,586.7M691.7,586.7L720.3,622.3M720.3,622.3L700.3,659.7M643.0,659.7L700.3,659.7M700.3,659.7L730.5,698.9M730.5,698.9L709.7,740.0M649.6,740.0L709.7,740.0M709.7,740.0L741.7,783.2M684.1,-8.6L671.8,4.5M637.9,4.5L671.8,4.5M671.8,4.5L689.0,18.1M689.0,18.1L676.4,32.0M641.6,32.0L676.4,32.0M676.4,32.0L694.2,46.3M694.2,46.3L681.3,61.1M645.5,61.1L681.3,61.1M681.3,61.1L699.8,76.3M699.8,76.3L686.6,92.0M649.6,92.0L686.6,92.0M686.6,92.0L705.7,108.2M705.7,108.2L692.1,124.9M654.0,124.9L692.1,124.9M692.1,124.9L711.9,142.1M711.9,142.1L698.0,160.0M658.6,160.0L698.0,160.0M698.0,160.0L718.6,178.3M718.6,178.3L704.4,197.4M663.6,197.4L704.4,197.4M704.4,197.4L725.7,217.0M725.7,217.0L711.1,237.4M669.0,237.4L711.1,237.4M711.1,237.4L733.4,258.5M733.4,258.5L718.4,280.4M674.7,280.4L718.4,280.4M718.4,280.4L741.6,303.1M741.6,303.1L726.2,326.6M680.9,326.6L726.2,326.6M726.2,326.6L750.5,351.0M750.5,351.0L734.6,376.5M687.5,376.5L734.6,376.5M734.6,376.5L760.0,402.9M760.0,402.9L743.7,430.4M694.7,430.4L743.7,430.4M743.7,430.4L770.4,459.0M770.4,459.0L753.6,488.9M702.5,488.9L753.6,488.9M753.6,488.9L781.7,520.1M781.7,520.1L764.4,552.7M711.0,552.7L764.4,552.7M764.4,552.7L794.0,586.7M794.0,586.7L776.2,622.3M720.3,622.3L776.2,622.3M776.2,622.3L807.5,659.7M807.5,659.7L789.1,698.9M730.5,698.9L789.1,698.9M789.1,698.9L822.3,740.0M822.3,740.0L803.4,783.2M717.5,-8.6L735.1,4.5M735.1,4.5L723.3,18.1M689.0,18.1L723.3,18.1M723.3,18.1L741.6,32.0M741.6,32.0L729.6,46.3M694.2,46.3L729.6,46.3M729.6,46.3L748.5,61.1M748.5,61.1L736.2,76.3M699.8,76.3L736.2,76.3M736.2,76.3L755.7,92.0M755.7,92.0L743.2,108.2M705.7,108.2L743.2,108.2M743.2,108.2L763.5,124.9M763.5,124.9L750.7,142.1M711.9,142.1L750.7,142.1M750.7,142.1L771.8,160.0M771.8,160.0L758.7,178.3M718.6,178.3L758.7,178.3M758.7,178.3L780.6,197.4M780.6,197.4L767.2,217.0M725.7,217.0L767.2,217.0M767.2,217.0L790.0,237.4M790.0,237.4L776.3,258.5M733.4,258.5L776.3,258.5M776.3,258.5L800.2,280.4M800.2,280.4L786.1,303.1M741.6,303.1L786.1,303.1M786.1,303.1L811.1,326.6M811.1,326.6L796.7,351.0M750.5,351.0L796.7,351.0M796.7,351.0L822.8,376.5M822.8,376.5L808.1,402.9M760.0,402.9L808.1,402.9M808.1,402.9L835.6,430.4M835.6,430.4L820.5,459.0M770.4,459.0L820.5,459.0M820.5,459.0L849.4,488.9M849.4,488.9L834.0,520.1M781.7,520.1L834.0,520.1M834.0,520.1L864.4,552.7M864.4,552.7L848.6,586.7M794.0,586.7L848.6,586.7M848.6,586.7L880.9,622.3M880.9,622.3L864.7,659.7M807.5,659.7L864.7,659.7M864.7,659.7L898.9,698.9M898.9,698.9L882.4,740.0M822.3,740.0L882.4,740.0M882.4,740.0L918.8,783.2M779.9,-8.6L768.9,4.5M735.1,4.5L768.9,4.5M768.9,4.5L787.6,18.1M787.6,18.1L776.4,32.0M741.6,32.0L776.4,32.0M776.4,32.0L795.7,46.3M795.7,46.3L784.3,61.1M748.5,61.1L784.3,61.1M784.3,61.1L804.3,76.3M804.3,76.3L792.7,92.0M755.7,92.0L792.7,92.0M792.7,92.0L813.5,108.2M813.5,108.2L801.6,124.9M763.5,124.9L801.6,124.9M801.6,124.9L823.2,142.1M823.2,142.1L811.2,160.0M771.8,160.0L811.2,160.0M811.2,160.0L833.6,178.3M833.6,178.3L821.3,197.4M780.6,197.4L821.3,197.4M821.3,197.4L844.7,217.0M844.7,217.0L832.2,237.4M790.0,237.4L832.2,237.4M832.2,237.4L856.6,258.5M856.6,258.5L843.9,280.4M800.2,280.4L843.9,280.4M843.9,280.4L869.4,303.1M869.4,303.1L856.4,326.6M811.1,326.6L856.4,326.6M856.4,326.6L883.2,351.0M883.2,351.0L870.0,376.5M822.8,376.5L870.0,376.5M870.0,376.5L898.1,402.9M898.1,402.9L884.6,430.4M835.6,430.4L884.6,430.4M884.6,430.4L914.2,459.0M914.2,459.0L900.5,488.9M849.4,488.9L900.5,488.9M900.5,488.9L931.8,520.1M931.8,520.1L917.9,552.7M864.4,552.7L917.9,552.7M917.9,552.7L950.9,586.7M950.9,586.7L936.8,622.3M880.9,622.3L936.8,622.3M936.8,622.3L971.9,659.7M971.9,659.7L957.6,698.9M898.9,698.9L957.6,698.9M957.6,698.9L994.9,740.0M994.9,740.0L980.5,783.2M813.3,-8.6L832.3,4.5M832.3,4.5L821.9,18.1M787.6,18.1L821.9,18.1M821.9,18.1L841.6,32.0M841.6,32.0L831.0,46.3M795.7,46.3L831.0,46.3M831.0,46.3L851.4,61.1M851.4,61.1L840.7,76.3M804.3,76.3L840.7,76.3M840.7,76.3L861.9,92.0M861.9,92.0L851.0,108.2M813.5,108.2L851.0,108.2M851.0,108.2L873.0,124.9M873.0,124.9L862.0,142.1M823.2,142.1L862.0,142.1M862.0,142.1L884.9,160.0M884.9,160.0L873.7,178.3M833.6,178.3L873.7,178.3M873.7,178.3L897.6,197.4M897.6,197.4L886.2,217.0M844.7,217.0L886.2,217.0M886.2,217.0L911.1,237.4M911.1,237.4L899.6,258.5M856.6,258.5L899.6,258.5M899.6,258.5L925.7,280.4M925.7,280.4L914.0,303.1M869.4,303.1L914.0,303.1M914.0,303.1L941.3,326.6M941.3,326.6L929.5,351.0M883.2,351.0L929.5,351.0M929.5,351.0L958.2,376.5M958.2,376.5L946.2,402.9M898.1,402.9L946.2,402.9M946.2,402.9L976.5,430.4M976.5,430.4L964.3,459.0M914.2,459.0L964.3,459.0M964.3,459.0L996.3,488.9M996.3,488.9L984.1,520.1M931.8,520.1L984.1,520.1M984.1,520.1L1017.9,552.7M1017.9,552.7L1005.6,586.7M950.9,586.7L1005.6,586.7M1005.6,586.7L1041.5,622.3M1041.5,622.3L1029.1,659.7M971.9,659.7L1029.1,659.7M1029.1,659.7L1067.4,698.9M994.9,740.0L1055.1,740.0M875.7,-8.6L866.1,4.5M832.3,4.5L866.1,4.5M866.1,4.5L886.1,18.1M886.1,18.1L876.4,32.0M841.6,32.0L876.4,32.0M876.4,32.0L897.2,46.3M897.2,46.3L887.3,61.1M851.4,61.1L887.3,61.1M887.3,61.1L908.9,76.3M908.9,76.3L898.9,92.0M861.9,92.0L898.9,92.0M898.9,92.0L921.3,108.2M921.3,108.2L911.2,124.9M873.0,124.9L911.2,124.9M911.2,124.9L934.5,142.1M934.5,142.1L924.3,160.0M884.9,160.0L924.3,160.0M924.3,160.0L948.6,178.3M948.6,178.3L938.3,197.4M897.6,197.4L938.3,197.4M938.3,197.4L963.7,217.0M963.7,217.0L953.3,237.4M911.1,237.4L953.3,237.4M953.3,237.4L979.9,258.5M979.9,258.5L969.4,280.4M925.7,280.4L969.4,280.4M969.4,280.4L997.3,303.1M997.3,303.1L986.7,326.6M941.3,326.6L986.7,326.6M986.7,326.6L1016.0,351.0M1016.0,351.0L1005.3,376.5M958.2,376.5L1005.3,376.5M1005.3,376.5L1036.2,402.9M1036.2,402.9L1025.5,430.4M976.5,430.4L1025.5,430.4M1025.5,430.4L1058.1,459.0M996.3,488.9L1047.4,488.9M1017.9,552.7L1071.3,552.7M909.1,-8.6L929.4,4.5M929.4,4.5L920.5,18.1M886.1,18.1L920.5,18.1M920.5,18.1L941.6,32.0M941.6,32.0L932.5,46.3M897.2,46.3L932.5,46.3M932.5,46.3L954.4,61.1M954.4,61.1L945.3,76.3M908.9,76.3L945.3,76.3M945.3,76.3L968.0,92.0M968.0,92.0L958.8,108.2M921.3,108.2L958.8,108.2M958.8,108.2L982.6,124.9M982.6,124.9L973.3,142.1M934.5,142.1L973.3,142.1M973.3,142.1L998.0,160.0M998.0,160.0L988.7,178.3M948.6,178.3L988.7,178.3M988.7,178.3L1014.5,197.4M1014.5,197.4L1005.2,217.0M963.7,217.0L1005.2,217.0M1005.2,217.0L1032.2,237.4M1032.2,237.4L1022.8,258.5M979.9,258.5L1022.8,258.5M1022.8,258.5L1051.2,280.4M997.3,303.1L1041.8,303.1M1016.0,351.0L1062.2,351.0M971.5,-8.6L963.3,4.5M929.4,4.5L963.3,4.5M963.3,4.5L984.7,18.1M984.7,18.1L976.4,32.0M941.6,32.0L976.4,32.0M976.4,32.0L998.6,46.3M998.6,46.3L990.3,61.1M954.4,61.1L990.3,61.1M990.3,61.1L1013.4,76.3M1013.4,76.3L1005.0,92.0M968.0,92.0L1005.0,92.0M1005.0,92.0L1029.1,108.2M1029.1,108.2L1020.7,124.9M982.6,124.9L1020.7,124.9M1020.7,124.9L1045.8,142.1M998.0,160.0L1037.4,160.0M1014.5,197.4L1055.3,197.4M1004.9,-8.6L1026.6,4.5M1026.6,4.5L1019.0,18.1M984.7,18.1L1019.0,18.1M1019.0,18.1L1041.5,32.0M998.6,46.3L1034.0,46.3M1013.4,76.3L1049.8,76.3M1029.1,108.2L1066.6,108.2M1026.6,4.5L1060.4,4.5" fill="none" stroke="#ffb070" stroke-opacity="0.28" stroke-width="1"/>
<polygon fill="#47699a" points="915.5,452 964,452 996.75,480 983,512 931.75,512 899,481"/>
</svg>

<!-- desktop icon -->
<svg class="abs" style="left:0;top:0" width="110" height="110" viewBox="0 0 110 110">
 <defs>
  <linearGradient id="gInst" x1="0" y1="0" x2="0" y2="1"><stop offset="0" stop-color="#2f80c2"/><stop offset="1" stop-color="#1db89b"/></linearGradient>
  <linearGradient id="gInst2" x1="0" y1="0" x2="0" y2="1"><stop offset="0" stop-color="#eef0f0"/><stop offset="1" stop-color="#d2d4d4"/></linearGradient>
 </defs>
 <rect x="35.6" y="12.8" width="42.5" height="35.2" fill="url(#gInst)"/>
 <path d="M56.8,21.3 V37.5 M48.8,30 L56.8,38 L64.8,30" fill="none" stroke="#fff" stroke-width="2.6"/>
 <rect x="30" y="48" width="54" height="19" fill="url(#gInst2)"/>
 <path d="M38.3,57.3 H57" stroke="#25c1a0" stroke-width="1.8"/>
 <path d="M57,57.3 H75.8" stroke="#6b6e70" stroke-width="1.8"/>
 <circle cx="38.3" cy="57.3" r="3.9" fill="#22c09c"/>
 <circle cx="57" cy="57.3" r="3.9" fill="#22c09c"/>
 <circle cx="75.8" cy="57.3" r="3.9" fill="#6b6e70"/>
</svg>
<div class="t" style="left:0.5px;width:112px;text-align:center;top:78.6px;font-size:14px;color:#fff;text-shadow:0 0 2px #000,0 1px 2px #000">Install Kubuntu</div>
<div class="t" style="left:0.5px;width:112px;text-align:center;top:95.9px;font-size:14px;color:#fff;text-shadow:0 0 2px #000,0 1px 2px #000">20.10</div>

<!-- window -->
<div class="abs" style="left:110px;top:110px;width:750px;height:529px;background:#eff0f1;border-radius:3px 3px 0 0;box-shadow:0 10px 32px -1px rgba(0,0,0,0.72),0 1px 7px rgba(0,0,0,0.35)"></div>
<div class="abs" style="left:110px;top:110px;width:750px;height:29px;border-radius:3px 3px 0 0;background:linear-gradient(#5b6367,#464e52)"></div>
<div class="t" id="title" style="left:396px;top:118px;font-size:13.8px;color:#e3e5e6">Домашняя папка — Dolphin</div>
<svg class="abs" style="left:110px;top:110px" width="750" height="70" viewBox="0 0 750 70">
 <!-- title folder icon -->
 <path d="M5,7 h7 l2,2 h9 v13.5 h-18z" fill="#1f6fb8"/>
 <rect x="6" y="9.5" width="16" height="3" fill="#f0f4f8"/>
 <path d="M4.7,11.5 h18.5 v10.2 h-18.5z" fill="#3b9ae3"/>
 <!-- help -->
 <text x="659" y="21" font-family="Liberation Sans" font-size="17" fill="#c9cbcc">?</text>
 <path d="M682.5,12 l5.5,5.5 l5.5,-5.5" fill="none" stroke="#d6d8d9" stroke-width="1.2"/>
 <path d="M706.5,17 l5.5,-5.5 l5.5,5.5" fill="none" stroke="#d6d8d9" stroke-width="1.2"/>
 <circle cx="736" cy="14" r="9.3" fill="#f8f8f8"/>
 <path d="M731.5,9.5 l9,9 M740.5,9.5 l-9,9" stroke="#4b5054" stroke-width="1.3"/>
 <!-- back / forward -->
 <path d="M22.9,40.4 l-8,7.6 l8,7.6" fill="none" stroke="#7f8284" stroke-width="1"/>
 <path d="M27.2,58.2 l2.4,2.4 l2.4,-2.4" fill="none" stroke="#8f9294" stroke-width="0.9"/>
 <path d="M49.2,40.4 l8,7.6 l-8,7.6" fill="none" stroke="#7f8284" stroke-width="1"/>
 <path d="M61.2,58.2 l2.4,2.4 l2.4,-2.4" fill="none" stroke="#8f9294" stroke-width="0.9"/>
 <rect x="74" y="31" width="1" height="33.5" fill="#c6c8ca"/>
 <rect x="79.3" y="32.2" width="31.4" height="31.7" rx="3" fill="#d0d2d4"/>
 <!-- icons view -->
 <rect x="87.5" y="40.7" width="5.8" height="5.8" fill="#e2e3e4" stroke="#232627" stroke-width="1"/>
 <rect x="96.1" y="40.2" width="6.8" height="6.8" fill="#232627"/>
 <rect x="87" y="49.2" width="6.8" height="6.8" fill="#232627"/>
 <rect x="96.6" y="49.7" width="5.8" height="5.8" fill="#e2e3e4" stroke="#232627" stroke-width="1"/>
 <!-- details view -->
 <rect x="121.6" y="40.8" width="5.8" height="5.6" fill="none" stroke="#232627" stroke-width="1"/>
 <rect x="130.2" y="40.6" width="6.5" height="1.1" fill="#232627"/>
 <rect x="130.2" y="44.5" width="6.5" height="1.1" fill="#232627"/>
 <rect x="121.1" y="49.3" width="6.6" height="6.2" fill="#232627"/>
 <rect x="130.2" y="49.7" width="3.6" height="1.1" fill="#232627"/>
 <rect x="130.2" y="53.7" width="3.6" height="1.1" fill="#232627"/>
 <!-- tree view -->
 <rect x="155.7" y="40.8" width="5.8" height="5.6" fill="none" stroke="#232627" stroke-width="1"/>
 <rect x="164.7" y="40.8" width="5.8" height="5.6" fill="none" stroke="#232627" stroke-width="1"/>
 <path d="M161.5,43.6 h3.2 M161,46.4 v6.2 h3.5" fill="none" stroke="#232627" stroke-width="1"/>
 <rect x="164.2" y="49.3" width="6.7" height="6.2" fill="#232627"/>
 <rect x="184.2" y="31" width="1" height="34" fill="#c6c8ca"/>
 <!-- sort icon -->
 <g fill="#232627">
 <rect x="200.2" y="39.7" width="6.6" height="1.2"/><rect x="200.2" y="42.8" width="4.4" height="1.2"/><rect x="200.2" y="45.8" width="6.6" height="1.2"/>
 <rect x="200.2" y="48.8" width="6.6" height="1.2"/><rect x="200.2" y="51.8" width="6.6" height="1.2"/><rect x="200.2" y="54.8" width="6.6" height="1.2"/>
 </g>
 <path d="M209.3,41.6 V49.6 M206.2,44.6 L209.3,41.3 L212.5,44.6 M212.5,47.3 V55.2 M209.2,52.2 L212.5,55.5 L215.8,52.2" fill="none" stroke="#232627" stroke-width="1.1"/>
 <!-- two panels icon -->
 <rect x="574.5" y="40.9" width="15" height="14.6" fill="none" stroke="#232627" stroke-width="1"/>
 <rect x="574" y="40.4" width="16" height="2.6" fill="#232627"/>
 <rect x="579.2" y="43" width="1" height="12.5" fill="#232627"/>
 <path d="M585.2,46 v6.4 M582,49.2 h6.4" stroke="#232627" stroke-width="1.1"/>
 <!-- search -->
 <circle cx="695" cy="46.9" r="5.6" fill="none" stroke="#232627" stroke-width="1.1"/>
 <path d="M699,51 l5.6,5.2" stroke="#232627" stroke-width="1.2"/>
 <!-- hamburger -->
 <rect x="722.7" y="42" width="16.2" height="1.8" fill="#232627"/>
 <rect x="722.7" y="47.3" width="16.2" height="1.8" fill="#232627"/>
 <rect x="722.7" y="52.6" width="16.2" height="1.8" fill="#232627"/>
</svg>
<div class="t" style="left:333px;top:151.5px;font-size:13.6px;color:#232627">Сортировка</div>
<div class="t" style="left:708px;top:151.5px;font-size:13.7px;color:#232627">Две панели</div>

<!-- sidebar -->
<div class="abs" style="left:116px;top:209px;width:155px;height:22px;background:#3daee9"></div>
<div class="abs" id="side" style="left:116px;top:180px;width:155px;height:436px;overflow:hidden">
 <div class="t" style="left:0.5px;top:8.1px;font-size:13.5px;color:#7f8386">Точки входа</div>
 <div class="t" style="left:22px;top:34.3px;font-size:13.5px;color:#fcfcfc">Домашняя папка</div>
 <div class="t" style="left:22px;top:56.5px;font-size:13.5px;color:#232627">Рабочий стол</div>
 <div class="t" style="left:22px;top:78.5px;font-size:13.5px;color:#232627">Документы</div>
 <div class="t" style="left:22px;top:100.5px;font-size:13.5px;color:#232627">Загрузки</div>
 <div class="t" style="left:22px;top:122.5px;font-size:13.5px;color:#232627">Корзина</div>
 <div class="t" style="left:0.5px;top:152.2px;font-size:13.5px;color:#7f8386">В сети</div>
 <div class="t" style="left:22px;top:178px;font-size:13.5px;color:#232627">Сеть</div>
 <div class="t" style="left:0.5px;top:208px;font-size:13.5px;color:#7f8386">Недавно изменённые</div>
 <div class="t" style="left:22px;top:234.5px;font-size:13.5px;color:#232627">Последние файлы</div>
 <div class="t" style="left:22px;top:256.1px;font-size:13.5px;color:#232627">Последние расположения</div>
 <div class="t" style="left:0.5px;top:286.6px;font-size:13.5px;color:#7f8386">Устройства</div>
 <div class="t" style="left:22px;top:312.6px;font-size:13.5px;color:#232627">/</div>
 <div class="t" style="left:22px;top:334.6px;font-size:13.5px;color:#232627">Жёсткий диск (1,4 ГиБ)</div>
 <div class="t" style="left:22px;top:356.6px;font-size:13.5px;color:#232627">Жёсткий диск (484,0 ГиБ)</div>
 <div class="t" style="left:22px;top:378.6px;font-size:13.5px;color:#232627">Жёсткий диск (487,0 ГиБ)</div>
 <div class="t" style="left:22px;top:400.6px;font-size:13.5px;color:#232627">Жёсткий диск (12,0 ГиБ)</div>
 <div class="t" style="left:22px;top:422.6px;font-size:13.5px;color:#232627">Жёсткий диск (5,7 ГиБ)</div>
</div>
<div class="abs" style="left:116px;top:616px;width:155px;height:1px;background:#dcdee0"></div>
<div class="abs" style="left:118.75px;top:623.75px;width:115px;height:6.25px;border-radius:3px;background:#aaabac"></div>
<div class="abs" style="left:271px;top:183px;width:1px;height:433px;background:#e2e4e5"></div>
<div class="abs" style="left:279px;top:190px;width:6px;height:300px;border-radius:3px;background:#aaabac"></div>

<svg class="abs" style="left:116px;top:180px;overflow:hidden" width="20" height="436" viewBox="0 0 20 436">
 <!-- home -->
 <path d="M4.3,41.6 L10.2,35.8 L16,41.6 M5.5,40.6 V46.5 H15 V40.6 M8.5,46.5 V43.5 H11.5 V46.5 M13.5,36 V38.8" fill="none" stroke="#fcfcfc" stroke-width="1"/>
 <!-- desktop -->
 <rect x="4.5" y="57.5" width="11" height="11" fill="none" stroke="#1f2223" stroke-width="1"/>
 <rect x="6" y="66" width="8" height="1" fill="#1f2223"/>
 <!-- documents -->
 <path d="M8,87.5 H5.5 V79.5 H11 L12.5,81 V82" fill="none" stroke="#1f2223" stroke-width="1"/>
 <path d="M8.5,82.5 H13.5 L15.5,84.5 V90.5 H8.5Z" fill="#eff0f1" stroke="#1f2223" stroke-width="1"/>
 <path d="M13,82 V85 H16Z" fill="#1f2223"/>
 <!-- downloads -->
 <path d="M9.5,105.5 V101.5 H11.5 V105.5 M5.3,105.8 L10.5,110.3 L15.7,105.8 M4.5,111 V112.5 H16.5 V111" fill="none" stroke="#1f2223" stroke-width="1"/>
 <!-- trash -->
 <path d="M4,124.5 H16.5 M8.5,124.5 V122.5 H12 V124.5 M5.5,124.5 V134.5 H15 V124.5 M8.5,126.5 V132.5 M12,126.5 V132.5" fill="none" stroke="#1f2223" stroke-width="1"/>
 <!-- network -->
 <circle cx="10" cy="184.8" r="5.6" fill="none" stroke="#1f2223" stroke-width="1.1"/>
 <ellipse cx="7.3" cy="184.8" rx="0.9" ry="1.1" fill="#1f2223"/><ellipse cx="11.6" cy="183.1" rx="0.9" ry="1.1" fill="#1f2223"/><ellipse cx="11.6" cy="187" rx="0.9" ry="1.1" fill="#1f2223"/>
 <!-- recent files -->
 <path d="M8.5,246.5 H5.5 V235.5 H11.5 L14.5,238.5 V241" fill="none" stroke="#1f2223" stroke-width="1"/>
 <path d="M11,235.5 H12 L15,238.5 V239.5 H11Z" fill="#1f2223"/>
 <circle cx="12.1" cy="243.75" r="2.8" fill="#eff0f1" stroke="#1f2223" stroke-width="1"/>
 <path d="M12,242.5 V244.2 H13.3" fill="none" stroke="#1f2223" stroke-width="0.8"/>
 <!-- recent places -->
 <path d="M9,268.5 H4.5 V257.5 H9 L10.5,259.5 H15.5 V263.5" fill="none" stroke="#1f2223" stroke-width="1"/>
 <path d="M4.5,257.5 H9 L10.5,259.5 V260.5 H4.5Z" fill="#1f2223"/>
 <circle cx="13.2" cy="265.5" r="2.8" fill="#eff0f1" stroke="#1f2223" stroke-width="1"/>
 <path d="M13.1,264.2 V265.9 H14.4" fill="none" stroke="#1f2223" stroke-width="0.8"/>
 <!-- root drive -->
 <path d="M5.5,313.5 H14.5 V318.5 M10,324.5 H5.5 V313.5" fill="none" stroke="#1f2223" stroke-width="1"/>
 <path d="M7,320 L9.5,315" stroke="#1f2223" stroke-width="1"/>
 <rect x="6.5" y="322" width="3.5" height="1" fill="#1f2223"/>
 <rect x="10.2" y="318.9" width="7.8" height="8" rx="0.5" fill="#27a149"/>
 <path d="M11.6,322.9 L14,320.6 V325.2Z" fill="#fff"/><path d="M14,321.6 H16.6 M14,324.2 H16.6" stroke="#fff" stroke-width="1"/>
 <path d="M10,346.5 H5.5 V335.5 H14.5 V340.5" fill="none" stroke="#1f2223" stroke-width="1"/>
 <rect x="6.5" y="344.0" width="3.5" height="1" fill="#1f2223"/>
 <rect x="10.2" y="340.7" width="7.8" height="7.8" rx="0.5" fill="#f17e18"/>
 <path d="M11.8,346.9 l2.3,-2.3 M13.9,342.6 l2.3,-0.1 l-0.1,2.3Z M11.7,344.8 v2.3 h2.3Z" fill="#fff3d8" stroke="#fff3d8" stroke-width="1"/>
 <path d="M10,368.5 H5.5 V357.5 H14.5 V362.5" fill="none" stroke="#1f2223" stroke-width="1"/>
 <rect x="6.5" y="366.0" width="3.5" height="1" fill="#1f2223"/>
 <rect x="10.2" y="362.7" width="7.8" height="7.8" rx="0.5" fill="#f17e18"/>
 <path d="M11.8,368.9 l2.3,-2.3 M13.9,364.6 l2.3,-0.1 l-0.1,2.3Z M11.7,366.8 v2.3 h2.3Z" fill="#fff3d8" stroke="#fff3d8" stroke-width="1"/>
 <path d="M10,390.5 H5.5 V379.5 H14.5 V384.5" fill="none" stroke="#1f2223" stroke-width="1"/>
 <rect x="6.5" y="388.0" width="3.5" height="1" fill="#1f2223"/>
 <rect x="10.2" y="384.7" width="7.8" height="7.8" rx="0.5" fill="#f17e18"/>
 <path d="M11.8,390.9 l2.3,-2.3 M13.9,386.6 l2.3,-0.1 l-0.1,2.3Z M11.7,388.8 v2.3 h2.3Z" fill="#fff3d8" stroke="#fff3d8" stroke-width="1"/>
 <path d="M10,412.5 H5.5 V401.5 H14.5 V406.5" fill="none" stroke="#1f2223" stroke-width="1"/>
 <rect x="6.5" y="410.0" width="3.5" height="1" fill="#1f2223"/>
 <rect x="10.2" y="406.7" width="7.8" height="7.8" rx="0.5" fill="#f17e18"/>
 <path d="M11.8,412.9 l2.3,-2.3 M13.9,408.6 l2.3,-0.1 l-0.1,2.3Z M11.7,410.8 v2.3 h2.3Z" fill="#fff3d8" stroke="#fff3d8" stroke-width="1"/>
 <path d="M10,434.5 H5.5 V423.5 H14.5 V428.5" fill="none" stroke="#1f2223" stroke-width="1"/>
 <rect x="6.5" y="432.0" width="3.5" height="1" fill="#1f2223"/>
 <rect x="10.2" y="428.7" width="7.8" height="7.8" rx="0.5" fill="#f17e18"/>
 <path d="M11.8,434.9 l2.3,-2.3 M13.9,430.6 l2.3,-0.1 l-0.1,2.3Z M11.7,432.8 v2.3 h2.3Z" fill="#fff3d8" stroke="#fff3d8" stroke-width="1"/>
</svg>
<!-- breadcrumb -->
<svg class="abs" style="left:296px;top:185px" width="20" height="20"><path d="M5.3,5.2 l4.5,4.5 l-4.5,4.5" fill="none" stroke="#232627" stroke-width="1.1"/></svg>
<div class="t" style="left:316px;top:187.9px;font-size:13px;font-weight:bold;color:#232627">Домашняя папка</div>

<!-- view -->
<div class="abs" style="left:296px;top:212px;width:563px;height:396px;background:#fcfcfc;border:1px solid #6ab6de;box-sizing:border-box;border-radius:2px"></div>

<svg class="abs" style="left:0;top:0" width="1024" height="768" viewBox="0 0 1024 768">
<defs>
 <linearGradient id="gFold" x1="0" y1="0" x2="0" y2="1"><stop offset="0" stop-color="#64bcf0"/><stop offset="1" stop-color="#3ea7e6"/></linearGradient>
 <linearGradient id="gDeskT" x1="0" y1="0" x2="1" y2="0.6"><stop offset="0" stop-color="#2a87bb"/><stop offset="1" stop-color="#1abc98"/></linearGradient>
 <linearGradient id="gDeskP" x1="0" y1="0" x2="0" y2="1"><stop offset="0" stop-color="#a8408a"/><stop offset="1" stop-color="#d44a6a"/></linearGradient>
</defs>
<g transform="translate(347,229)">
 <path d="M0.9,0 H25.1 L28.8,3.9 H57 V16 H0.9Z" fill="#1c7fc1"/>
 <path d="M0.1,13.8 H19.25 L22.6,10.1 H57.8 V51.75 H0.1Z" fill="url(#gFold)"/>
 <rect x="0.1" y="50.75" width="57.7" height="1" fill="#2c93d4"/>
 <g transform="translate(19,21)" fill="#1b72ad">
 <path fill-rule="evenodd" d="M0,0 H20 V20 H0Z M4.4,1.1 V9.4 H15.6 V1.1Z M4.4,10.6 V18.9 H15.6 V10.6Z"/>
 <rect x="1.4" y="1.9" width="1.4" height="1.4" fill="#5ab5ea"/><rect x="1.4" y="5.9" width="1.4" height="1.4" fill="#58b3ea"/><rect x="1.4" y="9.6" width="1.4" height="1.4" fill="#56b2e9"/><rect x="1.4" y="13.3" width="1.4" height="1.4" fill="#54b1e9"/><rect x="1.4" y="17" width="1.4" height="1.4" fill="#52b0e9"/>
 <rect x="17.2" y="1.9" width="1.4" height="1.4" fill="#5ab5ea"/><rect x="17.2" y="5.9" width="1.4" height="1.4" fill="#58b3ea"/><rect x="17.2" y="9.6" width="1.4" height="1.4" fill="#56b2e9"/><rect x="17.2" y="13.3" width="1.4" height="1.4" fill="#54b1e9"/><rect x="17.2" y="17" width="1.4" height="1.4" fill="#52b0e9"/>
</g>
</g><g transform="translate(481,229)">
 <path d="M0.9,0 H25.1 L28.8,3.9 H57 V16 H0.9Z" fill="#1c7fc1"/>
 <path d="M0.1,13.8 H19.25 L22.6,10.1 H57.8 V51.75 H0.1Z" fill="url(#gFold)"/>
 <rect x="0.1" y="50.75" width="57.7" height="1" fill="#2c93d4"/>
 <g transform="translate(20,21)"><path d="M0.5,0.5 H17.2 V13.2 L12,18.6 H0.5Z" fill="none" stroke="#1b72ad" stroke-width="1"/><path d="M12,13.4 H17.4 L12,19Z" fill="#1b72ad"/></g>
</g><g transform="translate(615,229)">
 <path d="M0.9,0 H25.1 L28.8,3.9 H57 V16 H0.9Z" fill="#1c7fc1"/>
 <path d="M0.1,13.8 H19.25 L22.6,10.1 H57.8 V51.75 H0.1Z" fill="url(#gFold)"/>
 <rect x="0.1" y="50.75" width="57.7" height="1" fill="#2c93d4"/>
 <g transform="translate(19.7,21)" fill="none" stroke="#1b72ad" stroke-width="1.1"><path d="M7.5,6.5 V0.5 H12.7 V6.5"/><path d="M3.5,7.6 L10.1,13.8 L16.6,7.6"/><path d="M0.6,17 V19.1 H19.7 V17"/></g>
</g><g transform="translate(749.5,229)">
 <path d="M0.9,0 H25.1 L28.8,3.9 H57 V16 H0.9Z" fill="#1c7fc1"/>
 <path d="M0.1,13.8 H19.25 L22.6,10.1 H57.8 V51.75 H0.1Z" fill="url(#gFold)"/>
 <rect x="0.1" y="50.75" width="57.7" height="1" fill="#2c93d4"/>
 <g transform="translate(19.5,21)"><rect x="0.5" y="0.5" width="18.5" height="18.5" fill="none" stroke="#1b72ad" stroke-width="1"/><circle cx="4.2" cy="4.2" r="2.3" fill="#1b72ad"/><path d="M7.2,17 L12.5,11.4 L17.8,17Z M1.6,17 L5.5,12.8 L7,14.6 L4.6,17Z" fill="#1b72ad"/></g>
</g><g transform="translate(347,325)">
 <path d="M0.9,0 H25.1 L28.8,3.9 H57 V16 H0.9Z" fill="#1c7fc1"/>
 <path d="M0.1,13.8 H19.25 L22.6,10.1 H57.8 V51.75 H0.1Z" fill="url(#gFold)"/>
 <rect x="0.1" y="50.75" width="57.7" height="1" fill="#2c93d4"/>
 <g transform="translate(17,21)" fill="#1b72ad"><rect x="7" y="0" width="14.5" height="1.8"/><rect x="7" y="3.6" width="14.5" height="1.1"/><rect x="7" y="0" width="1" height="17"/><rect x="20.5" y="0" width="1" height="14"/><circle cx="5.6" cy="16.8" r="2.7"/><circle cx="19" cy="14" r="2.7"/></g>
</g><g transform="translate(481,325)">
 <path d="M0.9,0 H25.1 L28.8,3.9 H57 V16 H0.9Z" fill="#1c7fc1"/>
 <path d="M0.1,13.8 H19.25 L22.6,10.1 H57.8 V51.75 H0.1Z" fill="url(#gFold)"/>
 <rect x="0.1" y="50.75" width="57.7" height="1" fill="#2c93d4"/>
 
</g><g transform="translate(615,325)">
 <path d="M0.9,0 H25.1 L28.8,3.9 H57 V16 H0.9Z" fill="#1c7fc1"/>
 <path d="M0.1,13.8 H19.25 L22.6,10.1 H57.8 V51.75 H0.1Z" fill="url(#gFold)"/>
 <rect x="0.1" y="50.75" width="57.7" height="1" fill="#2c93d4"/>
 
</g><g transform="translate(749.8,325)">
 <polygon points="0,0 58.4,0 19,29.7 0,48.7" fill="url(#gDeskT)"/>
 <polygon points="58.4,0 58.4,48.7 39.3,48.7 19,29.7" fill="url(#gDeskP)"/>
 <polygon points="0,48.7 19,29.7 39.3,48.7" fill="#4f5d59"/>
 <rect x="0" y="48.7" width="58.4" height="3" fill="#dcdfe0"/>
</g>
<rect x="353" y="307.5" width="44" height="1.2" fill="#3daee9"/>
</svg>
<div class="t" style="left:276px;width:200px;text-align:center;top:292.49px;font-size:13.6px;color:#232627">Видео</div>
<div class="t" style="left:410px;width:200px;text-align:center;top:292.49px;font-size:13.6px;color:#232627">Документы</div>
<div class="t" style="left:544px;width:200px;text-align:center;top:292.49px;font-size:13.6px;color:#232627">Загрузки</div>
<div class="t" style="left:678.5px;width:200px;text-align:center;top:292.49px;font-size:13.6px;color:#232627">Изображения</div>
<div class="t" style="left:276px;width:200px;text-align:center;top:387.99px;font-size:13.6px;color:#232627">Музыка</div>
<div class="t" style="left:410px;width:200px;text-align:center;top:387.99px;font-size:13.6px;color:#232627">Общедоступные</div>
<div class="t" style="left:544px;width:200px;text-align:center;top:387.99px;font-size:13.6px;color:#232627">Шаблоны</div>
<div class="t" style="left:678.5px;width:200px;text-align:center;top:387.99px;font-size:13.6px;color:#232627">Desktop</div>
<!-- status bar -->
<div class="t" style="left:297px;top:618px;font-size:13.6px;color:#232627">8 папок</div>
<div class="abs" style="left:487px;top:621.25px;width:180.5px;height:5.5px;border-radius:3px;background:#b5b7b9"></div>
<div class="abs" style="left:487px;top:621.25px;width:50px;height:5.5px;border-radius:3px;background:#3daee9"></div>
<div class="abs" style="left:527.5px;top:615.5px;width:15.5px;height:15.5px;border-radius:50%;background:#f4f5f5;border:1px solid #a2a4a6"></div>
<div class="abs" style="left:675.5px;top:621.25px;width:67px;height:5.5px;border-radius:3px;background:#b5b7b9;overflow:hidden"><div style="width:3px;height:6px;background:#3daee9"></div></div>
<div class="t" style="left:747.5px;top:618px;font-size:13.4px;color:#232627">свободно 1,8 ГиБ</div>

<!-- taskbar -->
<div class="abs" style="left:0;top:732px;width:1024px;height:36px;background:linear-gradient(90deg,#2a2e32,#2f3337 60%,#33373b)"></div>
<div class="abs" style="left:39px;top:734px;width:257px;height:31.5px;background:#355a72"></div>
<div class="abs" style="left:39px;top:734px;width:257px;height:3px;background:#3f8dbf"></div>
<div class="t" style="left:72px;top:744px;font-size:13.9px;color:#e9ecee">Домашняя папка — Dolphin</div>
<svg class="abs" style="left:0;top:732px" width="1024" height="36" viewBox="0 732 1024 36">
 <!-- start button -->
 <circle cx="17.6" cy="749.9" r="14.1" fill="#eeeff0"/>
 <path d="M16.61,742.87 A7.1,7.1 0 0 1 24.46,748.06" fill="none" stroke="#2b2f33" stroke-width="2.2"/>
 <path d="M16.68,743.36 L16.15,739.60" stroke="#2b2f33" stroke-width="2.8"/>
 <path d="M21.19,744.36 L23.26,741.18" stroke="#2b2f33" stroke-width="2.8"/>
 <path d="M23.98,748.19 L27.65,747.21" stroke="#2b2f33" stroke-width="2.8"/>
 <path d="M24.18,752.56 A7.1,7.1 0 0 1 15.76,756.76" fill="none" stroke="#2b2f33" stroke-width="2.2"/>
 <path d="M23.72,752.37 L27.24,753.80" stroke="#2b2f33" stroke-width="2.8"/>
 <path d="M20.60,755.78 L22.32,759.17" stroke="#2b2f33" stroke-width="2.8"/>
 <path d="M15.89,756.28 L14.91,759.95" stroke="#2b2f33" stroke-width="2.8"/>
 <path d="M12.01,754.27 A7.1,7.1 0 0 1 12.58,744.88" fill="none" stroke="#2b2f33" stroke-width="2.2"/>
 <path d="M12.40,753.96 L9.40,756.30" stroke="#2b2f33" stroke-width="2.8"/>
 <path d="M11.01,749.55 L7.21,749.36" stroke="#2b2f33" stroke-width="2.8"/>
 <path d="M12.93,745.23 L10.25,742.55" stroke="#2b2f33" stroke-width="2.8"/>
 <!-- task folder -->
 <path d="M45.5,742.5 h7 l1.8,1.6 h10 v6 h-18.8z" fill="#2a74bf"/>
 <rect x="46" y="744.8" width="18" height="2.6" fill="#f2f6fa"/>
 <path d="M44.9,747 h19.9 v11.1 h-19.9z" fill="#3d95e0"/>
 <!-- keyboard -->
 <rect x="728.6" y="747.6" width="17" height="10" fill="none" stroke="#e8eaeb" stroke-width="1.1"/>
 <g fill="#e8eaeb">
  <rect x="730.5" y="749.5" width="1.6" height="1.2"/><rect x="733.3" y="749.5" width="1.6" height="1.2"/><rect x="736.1" y="749.5" width="1.6" height="1.2"/><rect x="738.9" y="749.5" width="1.6" height="1.2"/><rect x="741.7" y="749.5" width="1.6" height="1.2"/>
  <rect x="730.5" y="752" width="1.6" height="1.2"/><rect x="733.3" y="752" width="1.6" height="1.2"/><rect x="736.1" y="752" width="1.6" height="1.2"/><rect x="738.9" y="752" width="1.6" height="1.2"/><rect x="741.7" y="752" width="1.6" height="1.2"/>
  <rect x="731.5" y="754.5" width="11.5" height="1.2"/>
 </g>
 <path d="M737.2,747.5 v-1.5 l2,-1.5 v-2.6" fill="none" stroke="#e8eaeb" stroke-width="1"/>
 <!-- volume -->
 <path d="M756.9,747.1 h2.9 l5.3,-5.2 v15.8 l-5.3,-5.3 h-2.9z" fill="#e8eaeb"/>
 <path d="M767.3,743.8 Q773.8,749.8 767.3,757" fill="none" stroke="#9fa2a4" stroke-width="1.1"/>
 <!-- usb -->
 <rect x="790.1" y="742.3" width="6.4" height="6.2" fill="none" stroke="#e8eaeb" stroke-width="1.1"/>
 <rect x="788.5" y="748.5" width="9.6" height="9.2" fill="none" stroke="#e8eaeb" stroke-width="1.2"/>
 <rect x="792.2" y="744.4" width="1.8" height="1.8" fill="#e8eaeb"/>
 <rect x="791.2" y="753.6" width="4.2" height="1" fill="#e8eaeb"/>
 <!-- network -->
 <rect x="846" y="742.9" width="10.2" height="9" fill="none" stroke="#e8eaeb" stroke-width="1.1"/>
 <path d="M848.5,752 v1.8 h5 v-1.8 M847.5,754.4 h7" fill="none" stroke="#e8eaeb" stroke-width="1"/>
 <rect x="841.5" y="742.2" width="3.6" height="4.2" fill="none" stroke="#e8eaeb" stroke-width="1"/>
 <path d="M843.3,746.4 v8.2 h4" fill="none" stroke="#e8eaeb" stroke-width="1"/>
 <!-- bluetooth -->
 <path d="M873,747.5 l7.5,6.2 l-3.7,3.6 v-13 l3.7,3.4 l-7.5,6.4" fill="none" stroke="#e8eaeb" stroke-width="1.1"/>
 <!-- triangle -->
 <path d="M898,752.9 L904,746.9 L910,752.9Z" fill="#e8eaeb"/>
 <!-- show desktop -->
 <rect x="994.5" y="738.5" width="23" height="23" fill="none" stroke="#e0e2e3" stroke-width="1.3"/>
 <rect x="997.3" y="757.8" width="17.3" height="1.2" fill="#e0e2e3"/>
</svg>
<div class="t" style="left:812.3px;top:742.3px;font-size:16.5px;color:#e8eaeb">us</div>
<div class="t" style="left:923px;top:738.2px;font-size:25.5px;letter-spacing:-1.1px;color:#eef0f1">07:05</div>
</body></html>
